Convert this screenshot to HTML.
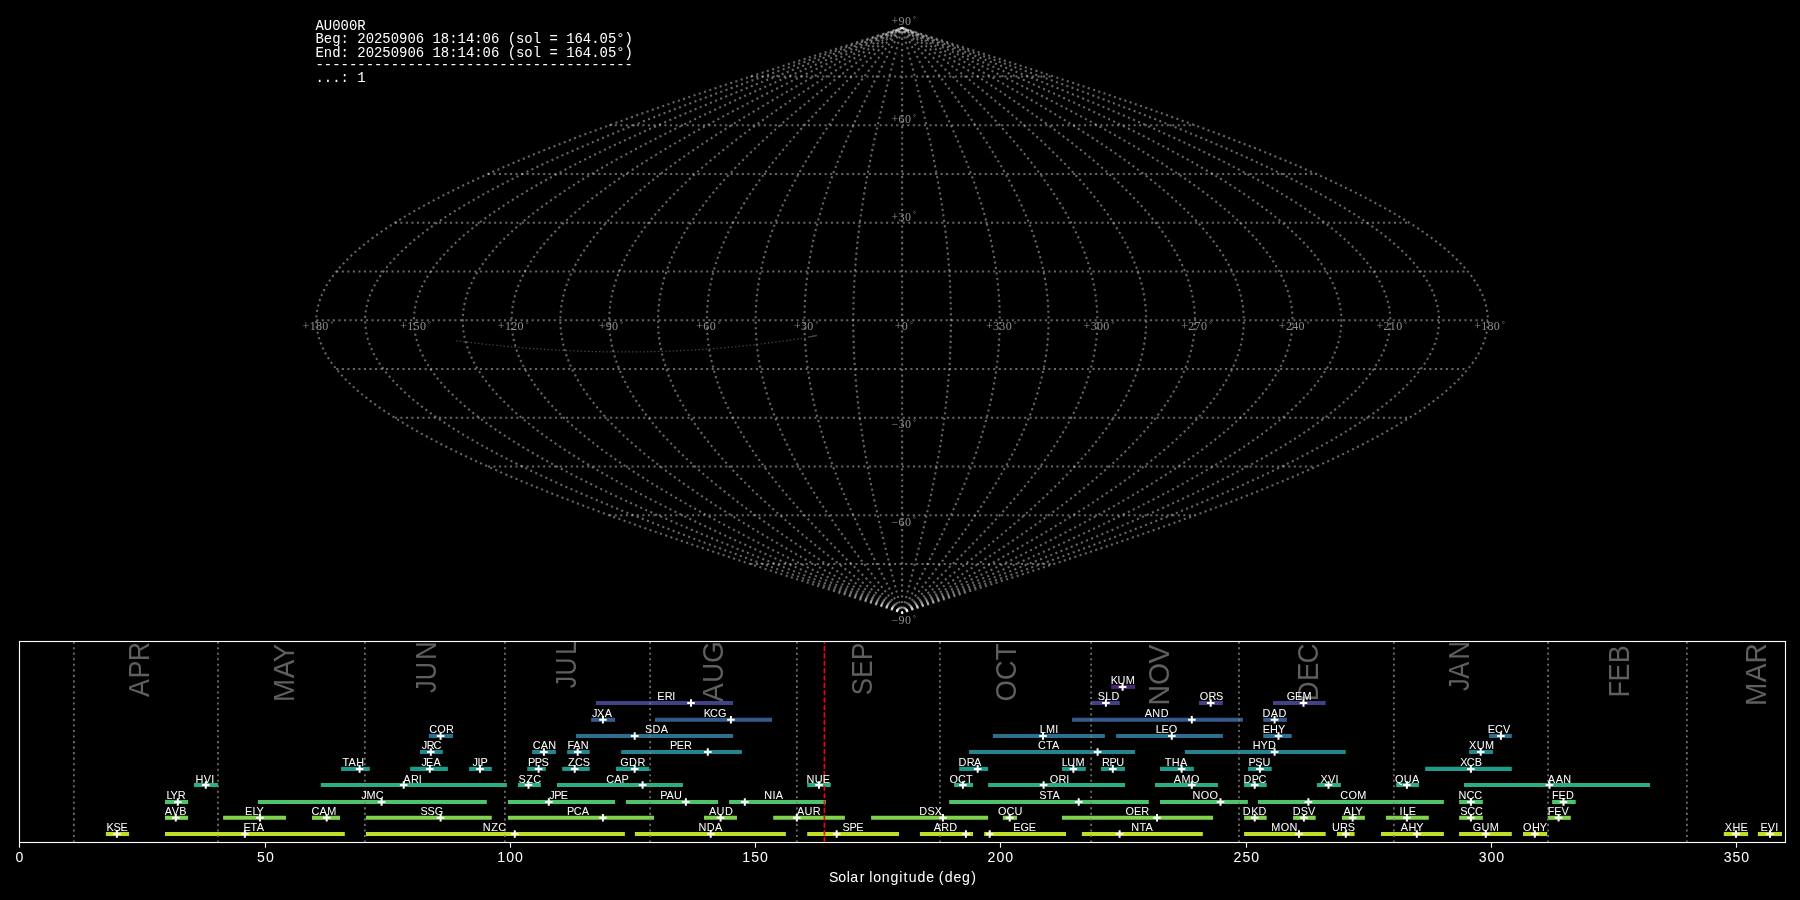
<!DOCTYPE html><html><head><meta charset="utf-8"><style>html,body{margin:0;padding:0;background:#000;overflow:hidden;}svg{display:block;will-change:transform;}</style></head><body>
<svg width="1800" height="900" viewBox="0 0 1800 900">
<rect x="0" y="0" width="1800" height="900" fill="#000"/>
<g fill="none" stroke="#ffffff" stroke-opacity="0.4" stroke-width="2.08" stroke-dasharray="2.08 3.44">
<path d="M902.10,612.80 L907.21,611.17 L912.32,609.55 L917.43,607.92 L922.54,606.30 L927.65,604.67 L932.76,603.05 L937.86,601.42 L942.96,599.80 L948.06,598.17 L953.15,596.55 L958.24,594.92 L963.33,593.30 L968.41,591.67 L973.49,590.05 L978.56,588.42 L983.62,586.80 L988.68,585.17 L993.73,583.55 L998.78,581.92 L1003.82,580.30 L1008.85,578.67 L1013.87,577.05 L1018.88,575.42 L1023.89,573.80 L1028.88,572.17 L1033.87,570.55 L1038.84,568.92 L1043.81,567.30 L1048.76,565.67 L1053.70,564.05 L1058.64,562.42 L1063.56,560.80 L1068.46,559.17 L1073.36,557.55 L1078.24,555.92 L1083.11,554.30 L1087.96,552.67 L1092.80,551.05 L1097.63,549.42 L1102.44,547.80 L1107.24,546.17 L1112.02,544.55 L1116.78,542.92 L1121.53,541.30 L1126.26,539.67 L1130.97,538.05 L1135.67,536.42 L1140.35,534.80 L1145.01,533.17 L1149.65,531.55 L1154.27,529.92 L1158.88,528.30 L1163.46,526.67 L1168.03,525.05 L1172.57,523.42 L1177.10,521.80 L1181.60,520.17 L1186.08,518.55 L1190.54,516.92 L1194.98,515.30 L1199.39,513.67 L1203.79,512.05 L1208.16,510.43 L1212.50,508.80 L1216.83,507.18 L1221.13,505.55 L1225.40,503.93 L1229.65,502.30 L1233.88,500.68 L1238.08,499.05 L1242.25,497.43 L1246.40,495.80 L1250.52,494.18 L1254.62,492.55 L1258.69,490.93 L1262.73,489.30 L1266.74,487.68 L1270.73,486.05 L1274.69,484.43 L1278.62,482.80 L1282.52,481.18 L1286.39,479.55 L1290.23,477.93 L1294.05,476.30 L1297.83,474.68 L1301.58,473.05 L1305.31,471.43 L1309.00,469.80 L1312.66,468.18 L1316.29,466.55 L1319.89,464.93 L1323.46,463.30 L1326.99,461.68 L1330.49,460.05 L1333.96,458.43 L1337.40,456.80 L1340.81,455.18 L1344.18,453.55 L1347.51,451.93 L1350.82,450.30 L1354.08,448.68 L1357.32,447.05 L1360.52,445.43 L1363.68,443.80 L1366.81,442.18 L1369.91,440.55 L1372.96,438.93 L1375.99,437.30 L1378.97,435.68 L1381.92,434.05 L1384.84,432.43 L1387.71,430.80 L1390.55,429.18 L1393.36,427.55 L1396.12,425.93 L1398.85,424.30 L1401.54,422.68 L1404.19,421.05 L1406.80,419.43 L1409.38,417.80 L1411.92,416.18 L1414.41,414.55 L1416.87,412.93 L1419.29,411.30 L1421.67,409.68 L1424.01,408.05 L1426.31,406.43 L1428.57,404.80 L1430.79,403.18 L1432.98,401.55 L1435.12,399.93 L1437.21,398.30 L1439.27,396.68 L1441.29,395.05 L1443.27,393.43 L1445.20,391.80 L1447.10,390.18 L1448.95,388.55 L1450.76,386.93 L1452.53,385.30 L1454.26,383.68 L1455.94,382.05 L1457.59,380.43 L1459.19,378.80 L1460.75,377.18 L1462.26,375.55 L1463.73,373.93 L1465.16,372.30 L1466.55,370.68 L1467.90,369.05 L1469.20,367.43 L1470.46,365.80 L1471.67,364.18 L1472.84,362.55 L1473.97,360.93 L1475.06,359.30 L1476.10,357.68 L1477.09,356.05 L1478.05,354.43 L1478.96,352.80 L1479.82,351.18 L1480.64,349.55 L1481.42,347.93 L1482.16,346.30 L1482.84,344.68 L1483.49,343.05 L1484.09,341.43 L1484.65,339.80 L1485.16,338.18 L1485.63,336.55 L1486.05,334.93 L1486.43,333.30 L1486.76,331.68 L1487.05,330.05 L1487.30,328.43 L1487.50,326.80 L1487.66,325.18 L1487.77,323.55 L1487.83,321.93 L1487.86,320.30 L1487.83,318.68 L1487.77,317.05 L1487.66,315.43 L1487.50,313.80 L1487.30,312.18 L1487.05,310.55 L1486.76,308.93 L1486.43,307.30 L1486.05,305.68 L1485.63,304.05 L1485.16,302.43 L1484.65,300.80 L1484.09,299.18 L1483.49,297.55 L1482.84,295.93 L1482.16,294.30 L1481.42,292.68 L1480.64,291.05 L1479.82,289.43 L1478.96,287.80 L1478.05,286.18 L1477.09,284.55 L1476.10,282.93 L1475.06,281.30 L1473.97,279.68 L1472.84,278.05 L1471.67,276.43 L1470.46,274.80 L1469.20,273.18 L1467.90,271.55 L1466.55,269.93 L1465.16,268.30 L1463.73,266.68 L1462.26,265.05 L1460.75,263.43 L1459.19,261.80 L1457.59,260.18 L1455.94,258.55 L1454.26,256.93 L1452.53,255.30 L1450.76,253.68 L1448.95,252.05 L1447.10,250.43 L1445.20,248.80 L1443.27,247.18 L1441.29,245.55 L1439.27,243.93 L1437.21,242.30 L1435.12,240.68 L1432.98,239.05 L1430.79,237.43 L1428.57,235.80 L1426.31,234.18 L1424.01,232.55 L1421.67,230.93 L1419.29,229.30 L1416.87,227.68 L1414.41,226.05 L1411.92,224.43 L1409.38,222.80 L1406.80,221.18 L1404.19,219.55 L1401.54,217.93 L1398.85,216.30 L1396.12,214.68 L1393.36,213.05 L1390.55,211.43 L1387.71,209.80 L1384.84,208.18 L1381.92,206.55 L1378.97,204.93 L1375.99,203.30 L1372.96,201.68 L1369.91,200.05 L1366.81,198.43 L1363.68,196.80 L1360.52,195.18 L1357.32,193.55 L1354.08,191.93 L1350.82,190.30 L1347.51,188.68 L1344.18,187.05 L1340.81,185.43 L1337.40,183.80 L1333.96,182.18 L1330.49,180.55 L1326.99,178.93 L1323.46,177.30 L1319.89,175.68 L1316.29,174.05 L1312.66,172.43 L1309.00,170.80 L1305.31,169.18 L1301.58,167.55 L1297.83,165.93 L1294.05,164.30 L1290.23,162.68 L1286.39,161.05 L1282.52,159.43 L1278.62,157.80 L1274.69,156.18 L1270.73,154.55 L1266.74,152.93 L1262.73,151.30 L1258.69,149.68 L1254.62,148.05 L1250.52,146.43 L1246.40,144.80 L1242.25,143.18 L1238.08,141.55 L1233.88,139.93 L1229.65,138.30 L1225.40,136.68 L1221.13,135.05 L1216.83,133.43 L1212.50,131.80 L1208.16,130.18 L1203.79,128.55 L1199.39,126.93 L1194.98,125.30 L1190.54,123.68 L1186.08,122.05 L1181.60,120.43 L1177.10,118.80 L1172.57,117.18 L1168.03,115.55 L1163.46,113.93 L1158.88,112.30 L1154.27,110.68 L1149.65,109.05 L1145.01,107.43 L1140.35,105.80 L1135.67,104.18 L1130.97,102.55 L1126.26,100.93 L1121.53,99.30 L1116.78,97.68 L1112.02,96.05 L1107.24,94.43 L1102.44,92.80 L1097.63,91.18 L1092.80,89.55 L1087.96,87.93 L1083.11,86.30 L1078.24,84.68 L1073.36,83.05 L1068.46,81.43 L1063.56,79.80 L1058.64,78.18 L1053.70,76.55 L1048.76,74.93 L1043.81,73.30 L1038.84,71.68 L1033.87,70.05 L1028.88,68.43 L1023.89,66.80 L1018.88,65.18 L1013.87,63.55 L1008.85,61.93 L1003.82,60.30 L998.78,58.68 L993.73,57.05 L988.68,55.43 L983.62,53.80 L978.56,52.18 L973.49,50.55 L968.41,48.93 L963.33,47.30 L958.24,45.68 L953.15,44.05 L948.06,42.43 L942.96,40.80 L937.86,39.18 L932.76,37.55 L927.65,35.93 L922.54,34.30 L917.43,32.68 L912.32,31.05 L907.21,29.43 L902.10,27.80" stroke-dashoffset="1.2"/>
<path d="M902.10,612.80 L906.79,611.17 L911.47,609.55 L916.16,607.92 L920.84,606.30 L925.52,604.67 L930.20,603.05 L934.88,601.42 L939.56,599.80 L944.23,598.17 L948.90,596.55 L953.56,594.92 L958.23,593.30 L962.88,591.67 L967.54,590.05 L972.19,588.42 L976.83,586.80 L981.47,585.17 L986.10,583.55 L990.72,581.92 L995.34,580.30 L999.95,578.67 L1004.55,577.05 L1009.15,575.42 L1013.74,573.80 L1018.32,572.17 L1022.89,570.55 L1027.45,568.92 L1032.00,567.30 L1036.54,565.67 L1041.07,564.05 L1045.59,562.42 L1050.10,560.80 L1054.60,559.17 L1059.09,557.55 L1063.56,555.92 L1068.02,554.30 L1072.47,552.67 L1076.91,551.05 L1081.34,549.42 L1085.75,547.80 L1090.14,546.17 L1094.52,544.55 L1098.89,542.92 L1103.24,541.30 L1107.58,539.67 L1111.90,538.05 L1116.21,536.42 L1120.49,534.80 L1124.77,533.17 L1129.02,531.55 L1133.26,529.92 L1137.48,528.30 L1141.68,526.67 L1145.87,525.05 L1150.03,523.42 L1154.18,521.80 L1158.31,520.17 L1162.42,518.55 L1166.50,516.92 L1170.57,515.30 L1174.62,513.67 L1178.65,512.05 L1182.65,510.43 L1186.64,508.80 L1190.60,507.18 L1194.54,505.55 L1198.46,503.93 L1202.35,502.30 L1206.23,500.68 L1210.08,499.05 L1213.90,497.43 L1217.71,495.80 L1221.49,494.18 L1225.24,492.55 L1228.97,490.93 L1232.68,489.30 L1236.35,487.68 L1240.01,486.05 L1243.64,484.43 L1247.24,482.80 L1250.82,481.18 L1254.37,479.55 L1257.89,477.93 L1261.38,476.30 L1264.85,474.68 L1268.29,473.05 L1271.71,471.43 L1275.09,469.80 L1278.45,468.18 L1281.78,466.55 L1285.07,464.93 L1288.34,463.30 L1291.58,461.68 L1294.80,460.05 L1297.98,458.43 L1301.13,456.80 L1304.25,455.18 L1307.34,453.55 L1310.39,451.93 L1313.42,450.30 L1316.42,448.68 L1319.38,447.05 L1322.32,445.43 L1325.22,443.80 L1328.09,442.18 L1330.92,440.55 L1333.73,438.93 L1336.50,437.30 L1339.23,435.68 L1341.94,434.05 L1344.61,432.43 L1347.25,430.80 L1349.85,429.18 L1352.42,427.55 L1354.95,425.93 L1357.45,424.30 L1359.92,422.68 L1362.35,421.05 L1364.75,419.43 L1367.11,417.80 L1369.43,416.18 L1371.72,414.55 L1373.97,412.93 L1376.19,411.30 L1378.37,409.68 L1380.52,408.05 L1382.63,406.43 L1384.70,404.80 L1386.74,403.18 L1388.74,401.55 L1390.70,399.93 L1392.62,398.30 L1394.51,396.68 L1396.36,395.05 L1398.17,393.43 L1399.94,391.80 L1401.68,390.18 L1403.38,388.55 L1405.04,386.93 L1406.66,385.30 L1408.24,383.68 L1409.79,382.05 L1411.30,380.43 L1412.76,378.80 L1414.19,377.18 L1415.58,375.55 L1416.93,373.93 L1418.24,372.30 L1419.51,370.68 L1420.75,369.05 L1421.94,367.43 L1423.09,365.80 L1424.21,364.18 L1425.28,362.55 L1426.32,360.93 L1427.31,359.30 L1428.26,357.68 L1429.18,356.05 L1430.05,354.43 L1430.89,352.80 L1431.68,351.18 L1432.43,349.55 L1433.15,347.93 L1433.82,346.30 L1434.45,344.68 L1435.04,343.05 L1435.59,341.43 L1436.10,339.80 L1436.57,338.18 L1437.00,336.55 L1437.39,334.93 L1437.74,333.30 L1438.04,331.68 L1438.31,330.05 L1438.53,328.43 L1438.72,326.80 L1438.86,325.18 L1438.96,323.55 L1439.02,321.93 L1439.04,320.30 L1439.02,318.68 L1438.96,317.05 L1438.86,315.43 L1438.72,313.80 L1438.53,312.18 L1438.31,310.55 L1438.04,308.93 L1437.74,307.30 L1437.39,305.68 L1437.00,304.05 L1436.57,302.43 L1436.10,300.80 L1435.59,299.18 L1435.04,297.55 L1434.45,295.93 L1433.82,294.30 L1433.15,292.68 L1432.43,291.05 L1431.68,289.43 L1430.89,287.80 L1430.05,286.18 L1429.18,284.55 L1428.26,282.93 L1427.31,281.30 L1426.32,279.68 L1425.28,278.05 L1424.21,276.43 L1423.09,274.80 L1421.94,273.18 L1420.75,271.55 L1419.51,269.93 L1418.24,268.30 L1416.93,266.68 L1415.58,265.05 L1414.19,263.43 L1412.76,261.80 L1411.30,260.18 L1409.79,258.55 L1408.24,256.93 L1406.66,255.30 L1405.04,253.68 L1403.38,252.05 L1401.68,250.43 L1399.94,248.80 L1398.17,247.18 L1396.36,245.55 L1394.51,243.93 L1392.62,242.30 L1390.70,240.68 L1388.74,239.05 L1386.74,237.43 L1384.70,235.80 L1382.63,234.18 L1380.52,232.55 L1378.37,230.93 L1376.19,229.30 L1373.97,227.68 L1371.72,226.05 L1369.43,224.43 L1367.11,222.80 L1364.75,221.18 L1362.35,219.55 L1359.92,217.93 L1357.45,216.30 L1354.95,214.68 L1352.42,213.05 L1349.85,211.43 L1347.25,209.80 L1344.61,208.18 L1341.94,206.55 L1339.23,204.93 L1336.50,203.30 L1333.73,201.68 L1330.92,200.05 L1328.09,198.43 L1325.22,196.80 L1322.32,195.18 L1319.38,193.55 L1316.42,191.93 L1313.42,190.30 L1310.39,188.68 L1307.34,187.05 L1304.25,185.43 L1301.13,183.80 L1297.98,182.18 L1294.80,180.55 L1291.58,178.93 L1288.34,177.30 L1285.07,175.68 L1281.78,174.05 L1278.45,172.43 L1275.09,170.80 L1271.71,169.18 L1268.29,167.55 L1264.85,165.93 L1261.38,164.30 L1257.89,162.68 L1254.37,161.05 L1250.82,159.43 L1247.24,157.80 L1243.64,156.18 L1240.01,154.55 L1236.35,152.93 L1232.68,151.30 L1228.97,149.68 L1225.24,148.05 L1221.49,146.43 L1217.71,144.80 L1213.90,143.18 L1210.08,141.55 L1206.23,139.93 L1202.35,138.30 L1198.46,136.68 L1194.54,135.05 L1190.60,133.43 L1186.64,131.80 L1182.65,130.18 L1178.65,128.55 L1174.62,126.93 L1170.57,125.30 L1166.50,123.68 L1162.42,122.05 L1158.31,120.43 L1154.18,118.80 L1150.03,117.18 L1145.87,115.55 L1141.68,113.93 L1137.48,112.30 L1133.26,110.68 L1129.02,109.05 L1124.77,107.43 L1120.49,105.80 L1116.21,104.18 L1111.90,102.55 L1107.58,100.93 L1103.24,99.30 L1098.89,97.68 L1094.52,96.05 L1090.14,94.43 L1085.75,92.80 L1081.34,91.18 L1076.91,89.55 L1072.47,87.93 L1068.02,86.30 L1063.56,84.68 L1059.09,83.05 L1054.60,81.43 L1050.10,79.80 L1045.59,78.18 L1041.07,76.55 L1036.54,74.93 L1032.00,73.30 L1027.45,71.68 L1022.89,70.05 L1018.32,68.43 L1013.74,66.80 L1009.15,65.18 L1004.55,63.55 L999.95,61.93 L995.34,60.30 L990.72,58.68 L986.10,57.05 L981.47,55.43 L976.83,53.80 L972.19,52.18 L967.54,50.55 L962.88,48.93 L958.23,47.30 L953.56,45.68 L948.90,44.05 L944.23,42.43 L939.56,40.80 L934.88,39.18 L930.20,37.55 L925.52,35.93 L920.84,34.30 L916.16,32.68 L911.47,31.05 L906.79,29.43 L902.10,27.80" stroke-dashoffset="1.2"/>
<path d="M902.10,612.80 L906.36,611.17 L910.62,609.55 L914.88,607.92 L919.14,606.30 L923.39,604.67 L927.65,603.05 L931.90,601.42 L936.15,599.80 L940.40,598.17 L944.64,596.55 L948.89,594.92 L953.12,593.30 L957.36,591.67 L961.59,590.05 L965.81,588.42 L970.03,586.80 L974.25,585.17 L978.46,583.55 L982.66,581.92 L986.86,580.30 L991.05,578.67 L995.24,577.05 L999.42,575.42 L1003.59,573.80 L1007.75,572.17 L1011.91,570.55 L1016.05,568.92 L1020.19,567.30 L1024.32,565.67 L1028.44,564.05 L1032.55,562.42 L1036.65,560.80 L1040.74,559.17 L1044.82,557.55 L1048.88,555.92 L1052.94,554.30 L1056.99,552.67 L1061.02,551.05 L1065.04,549.42 L1069.05,547.80 L1073.05,546.17 L1077.03,544.55 L1081.00,542.92 L1084.96,541.30 L1088.90,539.67 L1092.83,538.05 L1096.74,536.42 L1100.64,534.80 L1104.52,533.17 L1108.39,531.55 L1112.25,529.92 L1116.08,528.30 L1119.90,526.67 L1123.71,525.05 L1127.49,523.42 L1131.26,521.80 L1135.02,520.17 L1138.75,518.55 L1142.47,516.92 L1146.16,515.30 L1149.84,513.67 L1153.51,512.05 L1157.15,510.43 L1160.77,508.80 L1164.37,507.18 L1167.95,505.55 L1171.52,503.93 L1175.06,502.30 L1178.58,500.68 L1182.08,499.05 L1185.56,497.43 L1189.02,495.80 L1192.45,494.18 L1195.86,492.55 L1199.25,490.93 L1202.62,489.30 L1205.97,487.68 L1209.29,486.05 L1212.59,484.43 L1215.86,482.80 L1219.12,481.18 L1222.34,479.55 L1225.54,477.93 L1228.72,476.30 L1231.88,474.68 L1235.00,473.05 L1238.11,471.43 L1241.18,469.80 L1244.23,468.18 L1247.26,466.55 L1250.26,464.93 L1253.23,463.30 L1256.18,461.68 L1259.10,460.05 L1261.99,458.43 L1264.85,456.80 L1267.69,455.18 L1270.50,453.55 L1273.28,451.93 L1276.03,450.30 L1278.75,448.68 L1281.45,447.05 L1284.11,445.43 L1286.75,443.80 L1289.36,442.18 L1291.94,440.55 L1294.49,438.93 L1297.01,437.30 L1299.49,435.68 L1301.95,434.05 L1304.38,432.43 L1306.78,430.80 L1309.14,429.18 L1311.48,427.55 L1313.78,425.93 L1316.06,424.30 L1318.30,422.68 L1320.51,421.05 L1322.69,419.43 L1324.83,417.80 L1326.95,416.18 L1329.03,414.55 L1331.08,412.93 L1333.09,411.30 L1335.08,409.68 L1337.03,408.05 L1338.94,406.43 L1340.83,404.80 L1342.68,403.18 L1344.50,401.55 L1346.28,399.93 L1348.03,398.30 L1349.74,396.68 L1351.43,395.05 L1353.07,393.43 L1354.69,391.80 L1356.26,390.18 L1357.81,388.55 L1359.32,386.93 L1360.79,385.30 L1362.23,383.68 L1363.64,382.05 L1365.01,380.43 L1366.34,378.80 L1367.64,377.18 L1368.90,375.55 L1370.13,373.93 L1371.32,372.30 L1372.48,370.68 L1373.60,369.05 L1374.68,367.43 L1375.73,365.80 L1376.74,364.18 L1377.72,362.55 L1378.66,360.93 L1379.56,359.30 L1380.43,357.68 L1381.26,356.05 L1382.06,354.43 L1382.81,352.80 L1383.54,351.18 L1384.22,349.55 L1384.87,347.93 L1385.48,346.30 L1386.05,344.68 L1386.59,343.05 L1387.09,341.43 L1387.56,339.80 L1387.98,338.18 L1388.37,336.55 L1388.73,334.93 L1389.04,333.30 L1389.32,331.68 L1389.56,330.05 L1389.77,328.43 L1389.93,326.80 L1390.06,325.18 L1390.16,323.55 L1390.21,321.93 L1390.23,320.30 L1390.21,318.68 L1390.16,317.05 L1390.06,315.43 L1389.93,313.80 L1389.77,312.18 L1389.56,310.55 L1389.32,308.93 L1389.04,307.30 L1388.73,305.68 L1388.37,304.05 L1387.98,302.43 L1387.56,300.80 L1387.09,299.18 L1386.59,297.55 L1386.05,295.93 L1385.48,294.30 L1384.87,292.68 L1384.22,291.05 L1383.54,289.43 L1382.81,287.80 L1382.06,286.18 L1381.26,284.55 L1380.43,282.93 L1379.56,281.30 L1378.66,279.68 L1377.72,278.05 L1376.74,276.43 L1375.73,274.80 L1374.68,273.18 L1373.60,271.55 L1372.48,269.93 L1371.32,268.30 L1370.13,266.68 L1368.90,265.05 L1367.64,263.43 L1366.34,261.80 L1365.01,260.18 L1363.64,258.55 L1362.23,256.93 L1360.79,255.30 L1359.32,253.68 L1357.81,252.05 L1356.26,250.43 L1354.69,248.80 L1353.07,247.18 L1351.43,245.55 L1349.74,243.93 L1348.03,242.30 L1346.28,240.68 L1344.50,239.05 L1342.68,237.43 L1340.83,235.80 L1338.94,234.18 L1337.03,232.55 L1335.08,230.93 L1333.09,229.30 L1331.08,227.68 L1329.03,226.05 L1326.95,224.43 L1324.83,222.80 L1322.69,221.18 L1320.51,219.55 L1318.30,217.93 L1316.06,216.30 L1313.78,214.68 L1311.48,213.05 L1309.14,211.43 L1306.78,209.80 L1304.38,208.18 L1301.95,206.55 L1299.49,204.93 L1297.01,203.30 L1294.49,201.68 L1291.94,200.05 L1289.36,198.43 L1286.75,196.80 L1284.11,195.18 L1281.45,193.55 L1278.75,191.93 L1276.03,190.30 L1273.28,188.68 L1270.50,187.05 L1267.69,185.43 L1264.85,183.80 L1261.99,182.18 L1259.10,180.55 L1256.18,178.93 L1253.23,177.30 L1250.26,175.68 L1247.26,174.05 L1244.23,172.43 L1241.18,170.80 L1238.11,169.18 L1235.00,167.55 L1231.88,165.93 L1228.72,164.30 L1225.54,162.68 L1222.34,161.05 L1219.12,159.43 L1215.86,157.80 L1212.59,156.18 L1209.29,154.55 L1205.97,152.93 L1202.62,151.30 L1199.25,149.68 L1195.86,148.05 L1192.45,146.43 L1189.02,144.80 L1185.56,143.18 L1182.08,141.55 L1178.58,139.93 L1175.06,138.30 L1171.52,136.68 L1167.95,135.05 L1164.37,133.43 L1160.77,131.80 L1157.15,130.18 L1153.51,128.55 L1149.84,126.93 L1146.16,125.30 L1142.47,123.68 L1138.75,122.05 L1135.02,120.43 L1131.26,118.80 L1127.49,117.18 L1123.71,115.55 L1119.90,113.93 L1116.08,112.30 L1112.25,110.68 L1108.39,109.05 L1104.52,107.43 L1100.64,105.80 L1096.74,104.18 L1092.83,102.55 L1088.90,100.93 L1084.96,99.30 L1081.00,97.68 L1077.03,96.05 L1073.05,94.43 L1069.05,92.80 L1065.04,91.18 L1061.02,89.55 L1056.99,87.93 L1052.94,86.30 L1048.88,84.68 L1044.82,83.05 L1040.74,81.43 L1036.65,79.80 L1032.55,78.18 L1028.44,76.55 L1024.32,74.93 L1020.19,73.30 L1016.05,71.68 L1011.91,70.05 L1007.75,68.43 L1003.59,66.80 L999.42,65.18 L995.24,63.55 L991.05,61.93 L986.86,60.30 L982.66,58.68 L978.46,57.05 L974.25,55.43 L970.03,53.80 L965.81,52.18 L961.59,50.55 L957.36,48.93 L953.12,47.30 L948.89,45.68 L944.64,44.05 L940.40,42.43 L936.15,40.80 L931.90,39.18 L927.65,37.55 L923.39,35.93 L919.14,34.30 L914.88,32.68 L910.62,31.05 L906.36,29.43 L902.10,27.80" stroke-dashoffset="1.2"/>
<path d="M902.10,612.80 L905.93,611.17 L909.77,609.55 L913.60,607.92 L917.43,606.30 L921.26,604.67 L925.09,603.05 L928.92,601.42 L932.75,599.80 L936.57,598.17 L940.39,596.55 L944.21,594.92 L948.02,593.30 L951.83,591.67 L955.64,590.05 L959.44,588.42 L963.24,586.80 L967.04,585.17 L970.82,583.55 L974.61,581.92 L978.39,580.30 L982.16,578.67 L985.93,577.05 L989.69,575.42 L993.44,573.80 L997.19,572.17 L1000.92,570.55 L1004.66,568.92 L1008.38,567.30 L1012.10,565.67 L1015.80,564.05 L1019.50,562.42 L1023.19,560.80 L1026.87,559.17 L1030.54,557.55 L1034.21,555.92 L1037.86,554.30 L1041.50,552.67 L1045.13,551.05 L1048.75,549.42 L1052.36,547.80 L1055.95,546.17 L1059.54,544.55 L1063.11,542.92 L1066.67,541.30 L1070.22,539.67 L1073.75,538.05 L1077.28,536.42 L1080.79,534.80 L1084.28,533.17 L1087.76,531.55 L1091.23,529.92 L1094.68,528.30 L1098.12,526.67 L1101.55,525.05 L1104.95,523.42 L1108.35,521.80 L1111.72,520.17 L1115.09,518.55 L1118.43,516.92 L1121.76,515.30 L1125.07,513.67 L1128.36,512.05 L1131.64,510.43 L1134.90,508.80 L1138.14,507.18 L1141.37,505.55 L1144.58,503.93 L1147.76,502.30 L1150.93,500.68 L1154.08,499.05 L1157.21,497.43 L1160.32,495.80 L1163.42,494.18 L1166.49,492.55 L1169.54,490.93 L1172.57,489.30 L1175.58,487.68 L1178.57,486.05 L1181.54,484.43 L1184.49,482.80 L1187.41,481.18 L1190.32,479.55 L1193.20,477.93 L1196.06,476.30 L1198.90,474.68 L1201.71,473.05 L1204.51,471.43 L1207.28,469.80 L1210.02,468.18 L1212.74,466.55 L1215.44,464.93 L1218.12,463.30 L1220.77,461.68 L1223.40,460.05 L1226.00,458.43 L1228.58,456.80 L1231.13,455.18 L1233.66,453.55 L1236.16,451.93 L1238.64,450.30 L1241.09,448.68 L1243.51,447.05 L1245.91,445.43 L1248.29,443.80 L1250.63,442.18 L1252.95,440.55 L1255.25,438.93 L1257.51,437.30 L1259.75,435.68 L1261.97,434.05 L1264.15,432.43 L1266.31,430.80 L1268.44,429.18 L1270.54,427.55 L1272.62,425.93 L1274.66,424.30 L1276.68,422.68 L1278.67,421.05 L1280.63,419.43 L1282.56,417.80 L1284.46,416.18 L1286.34,414.55 L1288.18,412.93 L1289.99,411.30 L1291.78,409.68 L1293.53,408.05 L1295.26,406.43 L1296.96,404.80 L1298.62,403.18 L1300.26,401.55 L1301.86,399.93 L1303.44,398.30 L1304.98,396.68 L1306.49,395.05 L1307.98,393.43 L1309.43,391.80 L1310.85,390.18 L1312.24,388.55 L1313.60,386.93 L1314.92,385.30 L1316.22,383.68 L1317.48,382.05 L1318.71,380.43 L1319.92,378.80 L1321.08,377.18 L1322.22,375.55 L1323.33,373.93 L1324.40,372.30 L1325.44,370.68 L1326.45,369.05 L1327.42,367.43 L1328.37,365.80 L1329.28,364.18 L1330.16,362.55 L1331.00,360.93 L1331.82,359.30 L1332.60,357.68 L1333.35,356.05 L1334.06,354.43 L1334.74,352.80 L1335.39,351.18 L1336.01,349.55 L1336.59,347.93 L1337.14,346.30 L1337.66,344.68 L1338.14,343.05 L1338.59,341.43 L1339.01,339.80 L1339.39,338.18 L1339.75,336.55 L1340.06,334.93 L1340.35,333.30 L1340.60,331.68 L1340.81,330.05 L1341.00,328.43 L1341.15,326.80 L1341.27,325.18 L1341.35,323.55 L1341.40,321.93 L1341.42,320.30 L1341.40,318.68 L1341.35,317.05 L1341.27,315.43 L1341.15,313.80 L1341.00,312.18 L1340.81,310.55 L1340.60,308.93 L1340.35,307.30 L1340.06,305.68 L1339.75,304.05 L1339.39,302.43 L1339.01,300.80 L1338.59,299.18 L1338.14,297.55 L1337.66,295.93 L1337.14,294.30 L1336.59,292.68 L1336.01,291.05 L1335.39,289.43 L1334.74,287.80 L1334.06,286.18 L1333.35,284.55 L1332.60,282.93 L1331.82,281.30 L1331.00,279.68 L1330.16,278.05 L1329.28,276.43 L1328.37,274.80 L1327.42,273.18 L1326.45,271.55 L1325.44,269.93 L1324.40,268.30 L1323.33,266.68 L1322.22,265.05 L1321.08,263.43 L1319.92,261.80 L1318.71,260.18 L1317.48,258.55 L1316.22,256.93 L1314.92,255.30 L1313.60,253.68 L1312.24,252.05 L1310.85,250.43 L1309.43,248.80 L1307.98,247.18 L1306.49,245.55 L1304.98,243.93 L1303.44,242.30 L1301.86,240.68 L1300.26,239.05 L1298.62,237.43 L1296.96,235.80 L1295.26,234.18 L1293.53,232.55 L1291.78,230.93 L1289.99,229.30 L1288.18,227.68 L1286.34,226.05 L1284.46,224.43 L1282.56,222.80 L1280.63,221.18 L1278.67,219.55 L1276.68,217.93 L1274.66,216.30 L1272.62,214.68 L1270.54,213.05 L1268.44,211.43 L1266.31,209.80 L1264.15,208.18 L1261.97,206.55 L1259.75,204.93 L1257.51,203.30 L1255.25,201.68 L1252.95,200.05 L1250.63,198.43 L1248.29,196.80 L1245.91,195.18 L1243.51,193.55 L1241.09,191.93 L1238.64,190.30 L1236.16,188.68 L1233.66,187.05 L1231.13,185.43 L1228.58,183.80 L1226.00,182.18 L1223.40,180.55 L1220.77,178.93 L1218.12,177.30 L1215.44,175.68 L1212.74,174.05 L1210.02,172.43 L1207.28,170.80 L1204.51,169.18 L1201.71,167.55 L1198.90,165.93 L1196.06,164.30 L1193.20,162.68 L1190.32,161.05 L1187.41,159.43 L1184.49,157.80 L1181.54,156.18 L1178.57,154.55 L1175.58,152.93 L1172.57,151.30 L1169.54,149.68 L1166.49,148.05 L1163.42,146.43 L1160.32,144.80 L1157.21,143.18 L1154.08,141.55 L1150.93,139.93 L1147.76,138.30 L1144.58,136.68 L1141.37,135.05 L1138.14,133.43 L1134.90,131.80 L1131.64,130.18 L1128.36,128.55 L1125.07,126.93 L1121.76,125.30 L1118.43,123.68 L1115.09,122.05 L1111.72,120.43 L1108.35,118.80 L1104.95,117.18 L1101.55,115.55 L1098.12,113.93 L1094.68,112.30 L1091.23,110.68 L1087.76,109.05 L1084.28,107.43 L1080.79,105.80 L1077.28,104.18 L1073.75,102.55 L1070.22,100.93 L1066.67,99.30 L1063.11,97.68 L1059.54,96.05 L1055.95,94.43 L1052.36,92.80 L1048.75,91.18 L1045.13,89.55 L1041.50,87.93 L1037.86,86.30 L1034.21,84.68 L1030.54,83.05 L1026.87,81.43 L1023.19,79.80 L1019.50,78.18 L1015.80,76.55 L1012.10,74.93 L1008.38,73.30 L1004.66,71.68 L1000.92,70.05 L997.19,68.43 L993.44,66.80 L989.69,65.18 L985.93,63.55 L982.16,61.93 L978.39,60.30 L974.61,58.68 L970.82,57.05 L967.04,55.43 L963.24,53.80 L959.44,52.18 L955.64,50.55 L951.83,48.93 L948.02,47.30 L944.21,45.68 L940.39,44.05 L936.57,42.43 L932.75,40.80 L928.92,39.18 L925.09,37.55 L921.26,35.93 L917.43,34.30 L913.60,32.68 L909.77,31.05 L905.93,29.43 L902.10,27.80" stroke-dashoffset="1.2"/>
<path d="M902.10,612.80 L905.51,611.17 L908.92,609.55 L912.32,607.92 L915.73,606.30 L919.13,604.67 L922.54,603.05 L925.94,601.42 L929.34,599.80 L932.74,598.17 L936.13,596.55 L939.53,594.92 L942.92,593.30 L946.31,591.67 L949.69,590.05 L953.07,588.42 L956.45,586.80 L959.82,585.17 L963.19,583.55 L966.55,581.92 L969.91,580.30 L973.26,578.67 L976.61,577.05 L979.95,575.42 L983.29,573.80 L986.62,572.17 L989.94,570.55 L993.26,568.92 L996.57,567.30 L999.87,565.67 L1003.17,564.05 L1006.46,562.42 L1009.74,560.80 L1013.01,559.17 L1016.27,557.55 L1019.53,555.92 L1022.77,554.30 L1026.01,552.67 L1029.24,551.05 L1032.45,549.42 L1035.66,547.80 L1038.86,546.17 L1042.04,544.55 L1045.22,542.92 L1048.39,541.30 L1051.54,539.67 L1054.68,538.05 L1057.81,536.42 L1060.93,534.80 L1064.04,533.17 L1067.13,531.55 L1070.22,529.92 L1073.29,528.30 L1076.34,526.67 L1079.39,525.05 L1082.41,523.42 L1085.43,521.80 L1088.43,520.17 L1091.42,518.55 L1094.39,516.92 L1097.35,515.30 L1100.30,513.67 L1103.22,512.05 L1106.14,510.43 L1109.04,508.80 L1111.92,507.18 L1114.78,505.55 L1117.63,503.93 L1120.47,502.30 L1123.28,500.68 L1126.08,499.05 L1128.87,497.43 L1131.63,495.80 L1134.38,494.18 L1137.11,492.55 L1139.82,490.93 L1142.52,489.30 L1145.19,487.68 L1147.85,486.05 L1150.49,484.43 L1153.11,482.80 L1155.71,481.18 L1158.29,479.55 L1160.86,477.93 L1163.40,476.30 L1165.92,474.68 L1168.42,473.05 L1170.91,471.43 L1173.37,469.80 L1175.81,468.18 L1178.23,466.55 L1180.63,464.93 L1183.01,463.30 L1185.36,461.68 L1187.70,460.05 L1190.01,458.43 L1192.30,456.80 L1194.57,455.18 L1196.82,453.55 L1199.04,451.93 L1201.24,450.30 L1203.42,448.68 L1205.58,447.05 L1207.71,445.43 L1209.82,443.80 L1211.91,442.18 L1213.97,440.55 L1216.01,438.93 L1218.02,437.30 L1220.02,435.68 L1221.98,434.05 L1223.92,432.43 L1225.84,430.80 L1227.74,429.18 L1229.60,427.55 L1231.45,425.93 L1233.27,424.30 L1235.06,422.68 L1236.83,421.05 L1238.57,419.43 L1240.29,417.80 L1241.98,416.18 L1243.64,414.55 L1245.28,412.93 L1246.89,411.30 L1248.48,409.68 L1250.04,408.05 L1251.58,406.43 L1253.08,404.80 L1254.56,403.18 L1256.02,401.55 L1257.44,399.93 L1258.84,398.30 L1260.22,396.68 L1261.56,395.05 L1262.88,393.43 L1264.17,391.80 L1265.43,390.18 L1266.67,388.55 L1267.87,386.93 L1269.05,385.30 L1270.21,383.68 L1271.33,382.05 L1272.42,380.43 L1273.49,378.80 L1274.53,377.18 L1275.54,375.55 L1276.52,373.93 L1277.48,372.30 L1278.40,370.68 L1279.30,369.05 L1280.17,367.43 L1281.00,365.80 L1281.81,364.18 L1282.60,362.55 L1283.35,360.93 L1284.07,359.30 L1284.76,357.68 L1285.43,356.05 L1286.06,354.43 L1286.67,352.80 L1287.25,351.18 L1287.80,349.55 L1288.31,347.93 L1288.80,346.30 L1289.26,344.68 L1289.69,343.05 L1290.09,341.43 L1290.46,339.80 L1290.81,338.18 L1291.12,336.55 L1291.40,334.93 L1291.65,333.30 L1291.88,331.68 L1292.07,330.05 L1292.23,328.43 L1292.37,326.80 L1292.47,325.18 L1292.54,323.55 L1292.59,321.93 L1292.60,320.30 L1292.59,318.68 L1292.54,317.05 L1292.47,315.43 L1292.37,313.80 L1292.23,312.18 L1292.07,310.55 L1291.88,308.93 L1291.65,307.30 L1291.40,305.68 L1291.12,304.05 L1290.81,302.43 L1290.46,300.80 L1290.09,299.18 L1289.69,297.55 L1289.26,295.93 L1288.80,294.30 L1288.31,292.68 L1287.80,291.05 L1287.25,289.43 L1286.67,287.80 L1286.06,286.18 L1285.43,284.55 L1284.76,282.93 L1284.07,281.30 L1283.35,279.68 L1282.60,278.05 L1281.81,276.43 L1281.00,274.80 L1280.17,273.18 L1279.30,271.55 L1278.40,269.93 L1277.48,268.30 L1276.52,266.68 L1275.54,265.05 L1274.53,263.43 L1273.49,261.80 L1272.42,260.18 L1271.33,258.55 L1270.21,256.93 L1269.05,255.30 L1267.87,253.68 L1266.67,252.05 L1265.43,250.43 L1264.17,248.80 L1262.88,247.18 L1261.56,245.55 L1260.22,243.93 L1258.84,242.30 L1257.44,240.68 L1256.02,239.05 L1254.56,237.43 L1253.08,235.80 L1251.58,234.18 L1250.04,232.55 L1248.48,230.93 L1246.89,229.30 L1245.28,227.68 L1243.64,226.05 L1241.98,224.43 L1240.29,222.80 L1238.57,221.18 L1236.83,219.55 L1235.06,217.93 L1233.27,216.30 L1231.45,214.68 L1229.60,213.05 L1227.74,211.43 L1225.84,209.80 L1223.92,208.18 L1221.98,206.55 L1220.02,204.93 L1218.02,203.30 L1216.01,201.68 L1213.97,200.05 L1211.91,198.43 L1209.82,196.80 L1207.71,195.18 L1205.58,193.55 L1203.42,191.93 L1201.24,190.30 L1199.04,188.68 L1196.82,187.05 L1194.57,185.43 L1192.30,183.80 L1190.01,182.18 L1187.70,180.55 L1185.36,178.93 L1183.01,177.30 L1180.63,175.68 L1178.23,174.05 L1175.81,172.43 L1173.37,170.80 L1170.91,169.18 L1168.42,167.55 L1165.92,165.93 L1163.40,164.30 L1160.86,162.68 L1158.29,161.05 L1155.71,159.43 L1153.11,157.80 L1150.49,156.18 L1147.85,154.55 L1145.19,152.93 L1142.52,151.30 L1139.82,149.68 L1137.11,148.05 L1134.38,146.43 L1131.63,144.80 L1128.87,143.18 L1126.08,141.55 L1123.28,139.93 L1120.47,138.30 L1117.63,136.68 L1114.78,135.05 L1111.92,133.43 L1109.04,131.80 L1106.14,130.18 L1103.22,128.55 L1100.30,126.93 L1097.35,125.30 L1094.39,123.68 L1091.42,122.05 L1088.43,120.43 L1085.43,118.80 L1082.41,117.18 L1079.39,115.55 L1076.34,113.93 L1073.29,112.30 L1070.22,110.68 L1067.13,109.05 L1064.04,107.43 L1060.93,105.80 L1057.81,104.18 L1054.68,102.55 L1051.54,100.93 L1048.39,99.30 L1045.22,97.68 L1042.04,96.05 L1038.86,94.43 L1035.66,92.80 L1032.45,91.18 L1029.24,89.55 L1026.01,87.93 L1022.77,86.30 L1019.53,84.68 L1016.27,83.05 L1013.01,81.43 L1009.74,79.80 L1006.46,78.18 L1003.17,76.55 L999.87,74.93 L996.57,73.30 L993.26,71.68 L989.94,70.05 L986.62,68.43 L983.29,66.80 L979.95,65.18 L976.61,63.55 L973.26,61.93 L969.91,60.30 L966.55,58.68 L963.19,57.05 L959.82,55.43 L956.45,53.80 L953.07,52.18 L949.69,50.55 L946.31,48.93 L942.92,47.30 L939.53,45.68 L936.13,44.05 L932.74,42.43 L929.34,40.80 L925.94,39.18 L922.54,37.55 L919.13,35.93 L915.73,34.30 L912.32,32.68 L908.92,31.05 L905.51,29.43 L902.10,27.80" stroke-dashoffset="1.2"/>
<path d="M902.10,612.80 L905.08,611.17 L908.06,609.55 L911.04,607.92 L914.02,606.30 L917.00,604.67 L919.98,603.05 L922.96,601.42 L925.94,599.80 L928.91,598.17 L931.88,596.55 L934.85,594.92 L937.82,593.30 L940.78,591.67 L943.74,590.05 L946.70,588.42 L949.65,586.80 L952.61,585.17 L955.55,583.55 L958.50,581.92 L961.43,580.30 L964.37,578.67 L967.30,577.05 L970.22,575.42 L973.14,573.80 L976.06,572.17 L978.96,570.55 L981.87,568.92 L984.76,567.30 L987.65,565.67 L990.54,564.05 L993.41,562.42 L996.28,560.80 L999.15,559.17 L1002.00,557.55 L1004.85,555.92 L1007.69,554.30 L1010.52,552.67 L1013.34,551.05 L1016.16,549.42 L1018.97,547.80 L1021.76,546.17 L1024.55,544.55 L1027.33,542.92 L1030.10,541.30 L1032.86,539.67 L1035.61,538.05 L1038.35,536.42 L1041.08,534.80 L1043.80,533.17 L1046.50,531.55 L1049.20,529.92 L1051.89,528.30 L1054.56,526.67 L1057.22,525.05 L1059.88,523.42 L1062.51,521.80 L1065.14,520.17 L1067.76,518.55 L1070.36,516.92 L1072.95,515.30 L1075.52,513.67 L1078.08,512.05 L1080.63,510.43 L1083.17,508.80 L1085.69,507.18 L1088.20,505.55 L1090.69,503.93 L1093.17,502.30 L1095.64,500.68 L1098.09,499.05 L1100.52,497.43 L1102.94,495.80 L1105.35,494.18 L1107.73,492.55 L1110.11,490.93 L1112.47,489.30 L1114.81,487.68 L1117.13,486.05 L1119.44,484.43 L1121.73,482.80 L1124.01,481.18 L1126.27,479.55 L1128.51,477.93 L1130.74,476.30 L1132.94,474.68 L1135.13,473.05 L1137.30,471.43 L1139.46,469.80 L1141.59,468.18 L1143.71,466.55 L1145.81,464.93 L1147.89,463.30 L1149.95,461.68 L1152.00,460.05 L1154.02,458.43 L1156.03,456.80 L1158.01,455.18 L1159.98,453.55 L1161.92,451.93 L1163.85,450.30 L1165.76,448.68 L1167.64,447.05 L1169.51,445.43 L1171.36,443.80 L1173.18,442.18 L1174.99,440.55 L1176.77,438.93 L1178.53,437.30 L1180.28,435.68 L1182.00,434.05 L1183.70,432.43 L1185.37,430.80 L1187.03,429.18 L1188.67,427.55 L1190.28,425.93 L1191.87,424.30 L1193.44,422.68 L1194.99,421.05 L1196.51,419.43 L1198.01,417.80 L1199.49,416.18 L1200.95,414.55 L1202.38,412.93 L1203.80,411.30 L1205.18,409.68 L1206.55,408.05 L1207.89,406.43 L1209.21,404.80 L1210.51,403.18 L1211.78,401.55 L1213.03,399.93 L1214.25,398.30 L1215.45,396.68 L1216.63,395.05 L1217.78,393.43 L1218.91,391.80 L1220.02,390.18 L1221.10,388.55 L1222.15,386.93 L1223.18,385.30 L1224.19,383.68 L1225.18,382.05 L1226.13,380.43 L1227.07,378.80 L1227.98,377.18 L1228.86,375.55 L1229.72,373.93 L1230.55,372.30 L1231.36,370.68 L1232.15,369.05 L1232.91,367.43 L1233.64,365.80 L1234.35,364.18 L1235.03,362.55 L1235.69,360.93 L1236.32,359.30 L1236.93,357.68 L1237.51,356.05 L1238.07,354.43 L1238.60,352.80 L1239.10,351.18 L1239.58,349.55 L1240.04,347.93 L1240.47,346.30 L1240.87,344.68 L1241.24,343.05 L1241.59,341.43 L1241.92,339.80 L1242.22,338.18 L1242.49,336.55 L1242.74,334.93 L1242.96,333.30 L1243.15,331.68 L1243.32,330.05 L1243.47,328.43 L1243.58,326.80 L1243.67,325.18 L1243.74,323.55 L1243.78,321.93 L1243.79,320.30 L1243.78,318.68 L1243.74,317.05 L1243.67,315.43 L1243.58,313.80 L1243.47,312.18 L1243.32,310.55 L1243.15,308.93 L1242.96,307.30 L1242.74,305.68 L1242.49,304.05 L1242.22,302.43 L1241.92,300.80 L1241.59,299.18 L1241.24,297.55 L1240.87,295.93 L1240.47,294.30 L1240.04,292.68 L1239.58,291.05 L1239.10,289.43 L1238.60,287.80 L1238.07,286.18 L1237.51,284.55 L1236.93,282.93 L1236.32,281.30 L1235.69,279.68 L1235.03,278.05 L1234.35,276.43 L1233.64,274.80 L1232.91,273.18 L1232.15,271.55 L1231.36,269.93 L1230.55,268.30 L1229.72,266.68 L1228.86,265.05 L1227.98,263.43 L1227.07,261.80 L1226.13,260.18 L1225.18,258.55 L1224.19,256.93 L1223.18,255.30 L1222.15,253.68 L1221.10,252.05 L1220.02,250.43 L1218.91,248.80 L1217.78,247.18 L1216.63,245.55 L1215.45,243.93 L1214.25,242.30 L1213.03,240.68 L1211.78,239.05 L1210.51,237.43 L1209.21,235.80 L1207.89,234.18 L1206.55,232.55 L1205.18,230.93 L1203.80,229.30 L1202.38,227.68 L1200.95,226.05 L1199.49,224.43 L1198.01,222.80 L1196.51,221.18 L1194.99,219.55 L1193.44,217.93 L1191.87,216.30 L1190.28,214.68 L1188.67,213.05 L1187.03,211.43 L1185.37,209.80 L1183.70,208.18 L1182.00,206.55 L1180.28,204.93 L1178.53,203.30 L1176.77,201.68 L1174.99,200.05 L1173.18,198.43 L1171.36,196.80 L1169.51,195.18 L1167.64,193.55 L1165.76,191.93 L1163.85,190.30 L1161.92,188.68 L1159.98,187.05 L1158.01,185.43 L1156.03,183.80 L1154.02,182.18 L1152.00,180.55 L1149.95,178.93 L1147.89,177.30 L1145.81,175.68 L1143.71,174.05 L1141.59,172.43 L1139.46,170.80 L1137.30,169.18 L1135.13,167.55 L1132.94,165.93 L1130.74,164.30 L1128.51,162.68 L1126.27,161.05 L1124.01,159.43 L1121.73,157.80 L1119.44,156.18 L1117.13,154.55 L1114.81,152.93 L1112.47,151.30 L1110.11,149.68 L1107.73,148.05 L1105.35,146.43 L1102.94,144.80 L1100.52,143.18 L1098.09,141.55 L1095.64,139.93 L1093.17,138.30 L1090.69,136.68 L1088.20,135.05 L1085.69,133.43 L1083.17,131.80 L1080.63,130.18 L1078.08,128.55 L1075.52,126.93 L1072.95,125.30 L1070.36,123.68 L1067.76,122.05 L1065.14,120.43 L1062.51,118.80 L1059.88,117.18 L1057.22,115.55 L1054.56,113.93 L1051.89,112.30 L1049.20,110.68 L1046.50,109.05 L1043.80,107.43 L1041.08,105.80 L1038.35,104.18 L1035.61,102.55 L1032.86,100.93 L1030.10,99.30 L1027.33,97.68 L1024.55,96.05 L1021.76,94.43 L1018.97,92.80 L1016.16,91.18 L1013.34,89.55 L1010.52,87.93 L1007.69,86.30 L1004.85,84.68 L1002.00,83.05 L999.15,81.43 L996.28,79.80 L993.41,78.18 L990.54,76.55 L987.65,74.93 L984.76,73.30 L981.87,71.68 L978.96,70.05 L976.06,68.43 L973.14,66.80 L970.22,65.18 L967.30,63.55 L964.37,61.93 L961.43,60.30 L958.50,58.68 L955.55,57.05 L952.61,55.43 L949.65,53.80 L946.70,52.18 L943.74,50.55 L940.78,48.93 L937.82,47.30 L934.85,45.68 L931.88,44.05 L928.91,42.43 L925.94,40.80 L922.96,39.18 L919.98,37.55 L917.00,35.93 L914.02,34.30 L911.04,32.68 L908.06,31.05 L905.08,29.43 L902.10,27.80" stroke-dashoffset="1.2"/>
<path d="M902.10,612.80 L904.66,611.17 L907.21,609.55 L909.77,607.92 L912.32,606.30 L914.88,604.67 L917.43,603.05 L919.98,601.42 L922.53,599.80 L925.08,598.17 L927.63,596.55 L930.17,594.92 L932.71,593.30 L935.25,591.67 L937.79,590.05 L940.33,588.42 L942.86,586.80 L945.39,585.17 L947.92,583.55 L950.44,581.92 L952.96,580.30 L955.47,578.67 L957.98,577.05 L960.49,575.42 L962.99,573.80 L965.49,572.17 L967.98,570.55 L970.47,568.92 L972.95,567.30 L975.43,565.67 L977.90,564.05 L980.37,562.42 L982.83,560.80 L985.28,559.17 L987.73,557.55 L990.17,555.92 L992.60,554.30 L995.03,552.67 L997.45,551.05 L999.86,549.42 L1002.27,547.80 L1004.67,546.17 L1007.06,544.55 L1009.44,542.92 L1011.81,541.30 L1014.18,539.67 L1016.54,538.05 L1018.88,536.42 L1021.22,534.80 L1023.55,533.17 L1025.88,531.55 L1028.19,529.92 L1030.49,528.30 L1032.78,526.67 L1035.06,525.05 L1037.34,523.42 L1039.60,521.80 L1041.85,520.17 L1044.09,518.55 L1046.32,516.92 L1048.54,515.30 L1050.75,513.67 L1052.94,512.05 L1055.13,510.43 L1057.30,508.80 L1059.46,507.18 L1061.61,505.55 L1063.75,503.93 L1065.88,502.30 L1067.99,500.68 L1070.09,499.05 L1072.18,497.43 L1074.25,495.80 L1076.31,494.18 L1078.36,492.55 L1080.39,490.93 L1082.41,489.30 L1084.42,487.68 L1086.41,486.05 L1088.39,484.43 L1090.36,482.80 L1092.31,481.18 L1094.25,479.55 L1096.17,477.93 L1098.07,476.30 L1099.97,474.68 L1101.84,473.05 L1103.70,471.43 L1105.55,469.80 L1107.38,468.18 L1109.20,466.55 L1111.00,464.93 L1112.78,463.30 L1114.55,461.68 L1116.30,460.05 L1118.03,458.43 L1119.75,456.80 L1121.45,455.18 L1123.14,453.55 L1124.81,451.93 L1126.46,450.30 L1128.09,448.68 L1129.71,447.05 L1131.31,445.43 L1132.89,443.80 L1134.46,442.18 L1136.00,440.55 L1137.53,438.93 L1139.04,437.30 L1140.54,435.68 L1142.01,434.05 L1143.47,432.43 L1144.91,430.80 L1146.33,429.18 L1147.73,427.55 L1149.11,425.93 L1150.47,424.30 L1151.82,422.68 L1153.15,421.05 L1154.45,419.43 L1155.74,417.80 L1157.01,416.18 L1158.26,414.55 L1159.49,412.93 L1160.70,411.30 L1161.89,409.68 L1163.06,408.05 L1164.21,406.43 L1165.34,404.80 L1166.45,403.18 L1167.54,401.55 L1168.61,399.93 L1169.66,398.30 L1170.69,396.68 L1171.70,395.05 L1172.68,393.43 L1173.65,391.80 L1174.60,390.18 L1175.53,388.55 L1176.43,386.93 L1177.32,385.30 L1178.18,383.68 L1179.02,382.05 L1179.84,380.43 L1180.64,378.80 L1181.42,377.18 L1182.18,375.55 L1182.92,373.93 L1183.63,372.30 L1184.33,370.68 L1185.00,369.05 L1185.65,367.43 L1186.28,365.80 L1186.89,364.18 L1187.47,362.55 L1188.04,360.93 L1188.58,359.30 L1189.10,357.68 L1189.60,356.05 L1190.07,354.43 L1190.53,352.80 L1190.96,351.18 L1191.37,349.55 L1191.76,347.93 L1192.13,346.30 L1192.47,344.68 L1192.79,343.05 L1193.10,341.43 L1193.37,339.80 L1193.63,338.18 L1193.86,336.55 L1194.08,334.93 L1194.26,333.30 L1194.43,331.68 L1194.58,330.05 L1194.70,328.43 L1194.80,326.80 L1194.88,325.18 L1194.93,323.55 L1194.97,321.93 L1194.98,320.30 L1194.97,318.68 L1194.93,317.05 L1194.88,315.43 L1194.80,313.80 L1194.70,312.18 L1194.58,310.55 L1194.43,308.93 L1194.26,307.30 L1194.08,305.68 L1193.86,304.05 L1193.63,302.43 L1193.37,300.80 L1193.10,299.18 L1192.79,297.55 L1192.47,295.93 L1192.13,294.30 L1191.76,292.68 L1191.37,291.05 L1190.96,289.43 L1190.53,287.80 L1190.07,286.18 L1189.60,284.55 L1189.10,282.93 L1188.58,281.30 L1188.04,279.68 L1187.47,278.05 L1186.89,276.43 L1186.28,274.80 L1185.65,273.18 L1185.00,271.55 L1184.33,269.93 L1183.63,268.30 L1182.92,266.68 L1182.18,265.05 L1181.42,263.43 L1180.64,261.80 L1179.84,260.18 L1179.02,258.55 L1178.18,256.93 L1177.32,255.30 L1176.43,253.68 L1175.53,252.05 L1174.60,250.43 L1173.65,248.80 L1172.68,247.18 L1171.70,245.55 L1170.69,243.93 L1169.66,242.30 L1168.61,240.68 L1167.54,239.05 L1166.45,237.43 L1165.34,235.80 L1164.21,234.18 L1163.06,232.55 L1161.89,230.93 L1160.70,229.30 L1159.49,227.68 L1158.26,226.05 L1157.01,224.43 L1155.74,222.80 L1154.45,221.18 L1153.15,219.55 L1151.82,217.93 L1150.47,216.30 L1149.11,214.68 L1147.73,213.05 L1146.33,211.43 L1144.91,209.80 L1143.47,208.18 L1142.01,206.55 L1140.54,204.93 L1139.04,203.30 L1137.53,201.68 L1136.00,200.05 L1134.46,198.43 L1132.89,196.80 L1131.31,195.18 L1129.71,193.55 L1128.09,191.93 L1126.46,190.30 L1124.81,188.68 L1123.14,187.05 L1121.45,185.43 L1119.75,183.80 L1118.03,182.18 L1116.30,180.55 L1114.55,178.93 L1112.78,177.30 L1111.00,175.68 L1109.20,174.05 L1107.38,172.43 L1105.55,170.80 L1103.70,169.18 L1101.84,167.55 L1099.97,165.93 L1098.07,164.30 L1096.17,162.68 L1094.25,161.05 L1092.31,159.43 L1090.36,157.80 L1088.39,156.18 L1086.41,154.55 L1084.42,152.93 L1082.41,151.30 L1080.39,149.68 L1078.36,148.05 L1076.31,146.43 L1074.25,144.80 L1072.18,143.18 L1070.09,141.55 L1067.99,139.93 L1065.88,138.30 L1063.75,136.68 L1061.61,135.05 L1059.46,133.43 L1057.30,131.80 L1055.13,130.18 L1052.94,128.55 L1050.75,126.93 L1048.54,125.30 L1046.32,123.68 L1044.09,122.05 L1041.85,120.43 L1039.60,118.80 L1037.34,117.18 L1035.06,115.55 L1032.78,113.93 L1030.49,112.30 L1028.19,110.68 L1025.88,109.05 L1023.55,107.43 L1021.22,105.80 L1018.88,104.18 L1016.54,102.55 L1014.18,100.93 L1011.81,99.30 L1009.44,97.68 L1007.06,96.05 L1004.67,94.43 L1002.27,92.80 L999.86,91.18 L997.45,89.55 L995.03,87.93 L992.60,86.30 L990.17,84.68 L987.73,83.05 L985.28,81.43 L982.83,79.80 L980.37,78.18 L977.90,76.55 L975.43,74.93 L972.95,73.30 L970.47,71.68 L967.98,70.05 L965.49,68.43 L962.99,66.80 L960.49,65.18 L957.98,63.55 L955.47,61.93 L952.96,60.30 L950.44,58.68 L947.92,57.05 L945.39,55.43 L942.86,53.80 L940.33,52.18 L937.79,50.55 L935.25,48.93 L932.71,47.30 L930.17,45.68 L927.63,44.05 L925.08,42.43 L922.53,40.80 L919.98,39.18 L917.43,37.55 L914.88,35.93 L912.32,34.30 L909.77,32.68 L907.21,31.05 L904.66,29.43 L902.10,27.80" stroke-dashoffset="1.2"/>
<path d="M902.10,612.80 L904.23,611.17 L906.36,609.55 L908.49,607.92 L910.62,606.30 L912.75,604.67 L914.87,603.05 L917.00,601.42 L919.13,599.80 L921.25,598.17 L923.37,596.55 L925.49,594.92 L927.61,593.30 L929.73,591.67 L931.84,590.05 L933.96,588.42 L936.07,586.80 L938.18,585.17 L940.28,583.55 L942.38,581.92 L944.48,580.30 L946.58,578.67 L948.67,577.05 L950.76,575.42 L952.84,573.80 L954.93,572.17 L957.00,570.55 L959.08,568.92 L961.14,567.30 L963.21,565.67 L965.27,564.05 L967.32,562.42 L969.37,560.80 L971.42,559.17 L973.46,557.55 L975.49,555.92 L977.52,554.30 L979.54,552.67 L981.56,551.05 L983.57,549.42 L985.58,547.80 L987.57,546.17 L989.57,544.55 L991.55,542.92 L993.53,541.30 L995.50,539.67 L997.46,538.05 L999.42,536.42 L1001.37,534.80 L1003.31,533.17 L1005.25,531.55 L1007.17,529.92 L1009.09,528.30 L1011.00,526.67 L1012.90,525.05 L1014.80,523.42 L1016.68,521.80 L1018.56,520.17 L1020.43,518.55 L1022.28,516.92 L1024.13,515.30 L1025.97,513.67 L1027.80,512.05 L1029.62,510.43 L1031.43,508.80 L1033.24,507.18 L1035.03,505.55 L1036.81,503.93 L1038.58,502.30 L1040.34,500.68 L1042.09,499.05 L1043.83,497.43 L1045.56,495.80 L1047.28,494.18 L1048.98,492.55 L1050.68,490.93 L1052.36,489.30 L1054.03,487.68 L1055.70,486.05 L1057.34,484.43 L1058.98,482.80 L1060.61,481.18 L1062.22,479.55 L1063.82,477.93 L1065.41,476.30 L1066.99,474.68 L1068.55,473.05 L1070.10,471.43 L1071.64,469.80 L1073.17,468.18 L1074.68,466.55 L1076.18,464.93 L1077.67,463.30 L1079.14,461.68 L1080.60,460.05 L1082.04,458.43 L1083.48,456.80 L1084.89,455.18 L1086.30,453.55 L1087.69,451.93 L1089.06,450.30 L1090.43,448.68 L1091.77,447.05 L1093.11,445.43 L1094.43,443.80 L1095.73,442.18 L1097.02,440.55 L1098.29,438.93 L1099.55,437.30 L1100.80,435.68 L1102.03,434.05 L1103.24,432.43 L1104.44,430.80 L1105.62,429.18 L1106.79,427.55 L1107.94,425.93 L1109.08,424.30 L1110.20,422.68 L1111.30,421.05 L1112.39,419.43 L1113.47,417.80 L1114.52,416.18 L1115.56,414.55 L1116.59,412.93 L1117.60,411.30 L1118.59,409.68 L1119.56,408.05 L1120.52,406.43 L1121.46,404.80 L1122.39,403.18 L1123.30,401.55 L1124.19,399.93 L1125.06,398.30 L1125.92,396.68 L1126.76,395.05 L1127.59,393.43 L1128.39,391.80 L1129.18,390.18 L1129.95,388.55 L1130.71,386.93 L1131.45,385.30 L1132.17,383.68 L1132.87,382.05 L1133.55,380.43 L1134.22,378.80 L1134.87,377.18 L1135.50,375.55 L1136.11,373.93 L1136.71,372.30 L1137.29,370.68 L1137.85,369.05 L1138.39,367.43 L1138.92,365.80 L1139.42,364.18 L1139.91,362.55 L1140.38,360.93 L1140.83,359.30 L1141.27,357.68 L1141.68,356.05 L1142.08,354.43 L1142.46,352.80 L1142.82,351.18 L1143.16,349.55 L1143.48,347.93 L1143.79,346.30 L1144.08,344.68 L1144.35,343.05 L1144.60,341.43 L1144.83,339.80 L1145.04,338.18 L1145.24,336.55 L1145.41,334.93 L1145.57,333.30 L1145.71,331.68 L1145.83,330.05 L1145.93,328.43 L1146.02,326.80 L1146.08,325.18 L1146.13,323.55 L1146.16,321.93 L1146.16,320.30 L1146.16,318.68 L1146.13,317.05 L1146.08,315.43 L1146.02,313.80 L1145.93,312.18 L1145.83,310.55 L1145.71,308.93 L1145.57,307.30 L1145.41,305.68 L1145.24,304.05 L1145.04,302.43 L1144.83,300.80 L1144.60,299.18 L1144.35,297.55 L1144.08,295.93 L1143.79,294.30 L1143.48,292.68 L1143.16,291.05 L1142.82,289.43 L1142.46,287.80 L1142.08,286.18 L1141.68,284.55 L1141.27,282.93 L1140.83,281.30 L1140.38,279.68 L1139.91,278.05 L1139.42,276.43 L1138.92,274.80 L1138.39,273.18 L1137.85,271.55 L1137.29,269.93 L1136.71,268.30 L1136.11,266.68 L1135.50,265.05 L1134.87,263.43 L1134.22,261.80 L1133.55,260.18 L1132.87,258.55 L1132.17,256.93 L1131.45,255.30 L1130.71,253.68 L1129.95,252.05 L1129.18,250.43 L1128.39,248.80 L1127.59,247.18 L1126.76,245.55 L1125.92,243.93 L1125.06,242.30 L1124.19,240.68 L1123.30,239.05 L1122.39,237.43 L1121.46,235.80 L1120.52,234.18 L1119.56,232.55 L1118.59,230.93 L1117.60,229.30 L1116.59,227.68 L1115.56,226.05 L1114.52,224.43 L1113.47,222.80 L1112.39,221.18 L1111.30,219.55 L1110.20,217.93 L1109.08,216.30 L1107.94,214.68 L1106.79,213.05 L1105.62,211.43 L1104.44,209.80 L1103.24,208.18 L1102.03,206.55 L1100.80,204.93 L1099.55,203.30 L1098.29,201.68 L1097.02,200.05 L1095.73,198.43 L1094.43,196.80 L1093.11,195.18 L1091.77,193.55 L1090.43,191.93 L1089.06,190.30 L1087.69,188.68 L1086.30,187.05 L1084.89,185.43 L1083.48,183.80 L1082.04,182.18 L1080.60,180.55 L1079.14,178.93 L1077.67,177.30 L1076.18,175.68 L1074.68,174.05 L1073.17,172.43 L1071.64,170.80 L1070.10,169.18 L1068.55,167.55 L1066.99,165.93 L1065.41,164.30 L1063.82,162.68 L1062.22,161.05 L1060.61,159.43 L1058.98,157.80 L1057.34,156.18 L1055.70,154.55 L1054.03,152.93 L1052.36,151.30 L1050.68,149.68 L1048.98,148.05 L1047.28,146.43 L1045.56,144.80 L1043.83,143.18 L1042.09,141.55 L1040.34,139.93 L1038.58,138.30 L1036.81,136.68 L1035.03,135.05 L1033.24,133.43 L1031.43,131.80 L1029.62,130.18 L1027.80,128.55 L1025.97,126.93 L1024.13,125.30 L1022.28,123.68 L1020.43,122.05 L1018.56,120.43 L1016.68,118.80 L1014.80,117.18 L1012.90,115.55 L1011.00,113.93 L1009.09,112.30 L1007.17,110.68 L1005.25,109.05 L1003.31,107.43 L1001.37,105.80 L999.42,104.18 L997.46,102.55 L995.50,100.93 L993.53,99.30 L991.55,97.68 L989.57,96.05 L987.57,94.43 L985.58,92.80 L983.57,91.18 L981.56,89.55 L979.54,87.93 L977.52,86.30 L975.49,84.68 L973.46,83.05 L971.42,81.43 L969.37,79.80 L967.32,78.18 L965.27,76.55 L963.21,74.93 L961.14,73.30 L959.08,71.68 L957.00,70.05 L954.93,68.43 L952.84,66.80 L950.76,65.18 L948.67,63.55 L946.58,61.93 L944.48,60.30 L942.38,58.68 L940.28,57.05 L938.18,55.43 L936.07,53.80 L933.96,52.18 L931.84,50.55 L929.73,48.93 L927.61,47.30 L925.49,45.68 L923.37,44.05 L921.25,42.43 L919.13,40.80 L917.00,39.18 L914.87,37.55 L912.75,35.93 L910.62,34.30 L908.49,32.68 L906.36,31.05 L904.23,29.43 L902.10,27.80" stroke-dashoffset="1.2"/>
<path d="M902.10,612.80 L903.80,611.17 L905.51,609.55 L907.21,607.92 L908.91,606.30 L910.62,604.67 L912.32,603.05 L914.02,601.42 L915.72,599.80 L917.42,598.17 L919.12,596.55 L920.81,594.92 L922.51,593.30 L924.20,591.67 L925.90,590.05 L927.59,588.42 L929.27,586.80 L930.96,585.17 L932.64,583.55 L934.33,581.92 L936.01,580.30 L937.68,578.67 L939.36,577.05 L941.03,575.42 L942.70,573.80 L944.36,572.17 L946.02,570.55 L947.68,568.92 L949.34,567.30 L950.99,565.67 L952.63,564.05 L954.28,562.42 L955.92,560.80 L957.55,559.17 L959.19,557.55 L960.81,555.92 L962.44,554.30 L964.05,552.67 L965.67,551.05 L967.28,549.42 L968.88,547.80 L970.48,546.17 L972.07,544.55 L973.66,542.92 L975.24,541.30 L976.82,539.67 L978.39,538.05 L979.96,536.42 L981.52,534.80 L983.07,533.17 L984.62,531.55 L986.16,529.92 L987.69,528.30 L989.22,526.67 L990.74,525.05 L992.26,523.42 L993.77,521.80 L995.27,520.17 L996.76,518.55 L998.25,516.92 L999.73,515.30 L1001.20,513.67 L1002.66,512.05 L1004.12,510.43 L1005.57,508.80 L1007.01,507.18 L1008.44,505.55 L1009.87,503.93 L1011.28,502.30 L1012.69,500.68 L1014.09,499.05 L1015.48,497.43 L1016.87,495.80 L1018.24,494.18 L1019.61,492.55 L1020.96,490.93 L1022.31,489.30 L1023.65,487.68 L1024.98,486.05 L1026.30,484.43 L1027.61,482.80 L1028.91,481.18 L1030.20,479.55 L1031.48,477.93 L1032.75,476.30 L1034.01,474.68 L1035.26,473.05 L1036.50,471.43 L1037.73,469.80 L1038.95,468.18 L1040.16,466.55 L1041.36,464.93 L1042.55,463.30 L1043.73,461.68 L1044.90,460.05 L1046.05,458.43 L1047.20,456.80 L1048.34,455.18 L1049.46,453.55 L1050.57,451.93 L1051.67,450.30 L1052.76,448.68 L1053.84,447.05 L1054.91,445.43 L1055.96,443.80 L1057.00,442.18 L1058.04,440.55 L1059.05,438.93 L1060.06,437.30 L1061.06,435.68 L1062.04,434.05 L1063.01,432.43 L1063.97,430.80 L1064.92,429.18 L1065.85,427.55 L1066.77,425.93 L1067.68,424.30 L1068.58,422.68 L1069.46,421.05 L1070.33,419.43 L1071.19,417.80 L1072.04,416.18 L1072.87,414.55 L1073.69,412.93 L1074.50,411.30 L1075.29,409.68 L1076.07,408.05 L1076.84,406.43 L1077.59,404.80 L1078.33,403.18 L1079.06,401.55 L1079.77,399.93 L1080.47,398.30 L1081.16,396.68 L1081.83,395.05 L1082.49,393.43 L1083.13,391.80 L1083.77,390.18 L1084.38,388.55 L1084.99,386.93 L1085.58,385.30 L1086.15,383.68 L1086.71,382.05 L1087.26,380.43 L1087.80,378.80 L1088.32,377.18 L1088.82,375.55 L1089.31,373.93 L1089.79,372.30 L1090.25,370.68 L1090.70,369.05 L1091.13,367.43 L1091.55,365.80 L1091.96,364.18 L1092.35,362.55 L1092.72,360.93 L1093.09,359.30 L1093.43,357.68 L1093.76,356.05 L1094.08,354.43 L1094.39,352.80 L1094.67,351.18 L1094.95,349.55 L1095.21,347.93 L1095.45,346.30 L1095.68,344.68 L1095.90,343.05 L1096.10,341.43 L1096.28,339.80 L1096.45,338.18 L1096.61,336.55 L1096.75,334.93 L1096.88,333.30 L1096.99,331.68 L1097.08,330.05 L1097.17,328.43 L1097.23,326.80 L1097.29,325.18 L1097.32,323.55 L1097.34,321.93 L1097.35,320.30 L1097.34,318.68 L1097.32,317.05 L1097.29,315.43 L1097.23,313.80 L1097.17,312.18 L1097.08,310.55 L1096.99,308.93 L1096.88,307.30 L1096.75,305.68 L1096.61,304.05 L1096.45,302.43 L1096.28,300.80 L1096.10,299.18 L1095.90,297.55 L1095.68,295.93 L1095.45,294.30 L1095.21,292.68 L1094.95,291.05 L1094.67,289.43 L1094.39,287.80 L1094.08,286.18 L1093.76,284.55 L1093.43,282.93 L1093.09,281.30 L1092.72,279.68 L1092.35,278.05 L1091.96,276.43 L1091.55,274.80 L1091.13,273.18 L1090.70,271.55 L1090.25,269.93 L1089.79,268.30 L1089.31,266.68 L1088.82,265.05 L1088.32,263.43 L1087.80,261.80 L1087.26,260.18 L1086.71,258.55 L1086.15,256.93 L1085.58,255.30 L1084.99,253.68 L1084.38,252.05 L1083.77,250.43 L1083.13,248.80 L1082.49,247.18 L1081.83,245.55 L1081.16,243.93 L1080.47,242.30 L1079.77,240.68 L1079.06,239.05 L1078.33,237.43 L1077.59,235.80 L1076.84,234.18 L1076.07,232.55 L1075.29,230.93 L1074.50,229.30 L1073.69,227.68 L1072.87,226.05 L1072.04,224.43 L1071.19,222.80 L1070.33,221.18 L1069.46,219.55 L1068.58,217.93 L1067.68,216.30 L1066.77,214.68 L1065.85,213.05 L1064.92,211.43 L1063.97,209.80 L1063.01,208.18 L1062.04,206.55 L1061.06,204.93 L1060.06,203.30 L1059.05,201.68 L1058.04,200.05 L1057.00,198.43 L1055.96,196.80 L1054.91,195.18 L1053.84,193.55 L1052.76,191.93 L1051.67,190.30 L1050.57,188.68 L1049.46,187.05 L1048.34,185.43 L1047.20,183.80 L1046.05,182.18 L1044.90,180.55 L1043.73,178.93 L1042.55,177.30 L1041.36,175.68 L1040.16,174.05 L1038.95,172.43 L1037.73,170.80 L1036.50,169.18 L1035.26,167.55 L1034.01,165.93 L1032.75,164.30 L1031.48,162.68 L1030.20,161.05 L1028.91,159.43 L1027.61,157.80 L1026.30,156.18 L1024.98,154.55 L1023.65,152.93 L1022.31,151.30 L1020.96,149.68 L1019.61,148.05 L1018.24,146.43 L1016.87,144.80 L1015.48,143.18 L1014.09,141.55 L1012.69,139.93 L1011.28,138.30 L1009.87,136.68 L1008.44,135.05 L1007.01,133.43 L1005.57,131.80 L1004.12,130.18 L1002.66,128.55 L1001.20,126.93 L999.73,125.30 L998.25,123.68 L996.76,122.05 L995.27,120.43 L993.77,118.80 L992.26,117.18 L990.74,115.55 L989.22,113.93 L987.69,112.30 L986.16,110.68 L984.62,109.05 L983.07,107.43 L981.52,105.80 L979.96,104.18 L978.39,102.55 L976.82,100.93 L975.24,99.30 L973.66,97.68 L972.07,96.05 L970.48,94.43 L968.88,92.80 L967.28,91.18 L965.67,89.55 L964.05,87.93 L962.44,86.30 L960.81,84.68 L959.19,83.05 L957.55,81.43 L955.92,79.80 L954.28,78.18 L952.63,76.55 L950.99,74.93 L949.34,73.30 L947.68,71.68 L946.02,70.05 L944.36,68.43 L942.70,66.80 L941.03,65.18 L939.36,63.55 L937.68,61.93 L936.01,60.30 L934.33,58.68 L932.64,57.05 L930.96,55.43 L929.27,53.80 L927.59,52.18 L925.90,50.55 L924.20,48.93 L922.51,47.30 L920.81,45.68 L919.12,44.05 L917.42,42.43 L915.72,40.80 L914.02,39.18 L912.32,37.55 L910.62,35.93 L908.91,34.30 L907.21,32.68 L905.51,31.05 L903.80,29.43 L902.10,27.80" stroke-dashoffset="1.2"/>
<path d="M902.10,612.80 L903.38,611.17 L904.66,609.55 L905.93,607.92 L907.21,606.30 L908.49,604.67 L909.76,603.05 L911.04,601.42 L912.32,599.80 L913.59,598.17 L914.86,596.55 L916.14,594.92 L917.41,593.30 L918.68,591.67 L919.95,590.05 L921.21,588.42 L922.48,586.80 L923.75,585.17 L925.01,583.55 L926.27,581.92 L927.53,580.30 L928.79,578.67 L930.04,577.05 L931.30,575.42 L932.55,573.80 L933.80,572.17 L935.04,570.55 L936.29,568.92 L937.53,567.30 L938.77,565.67 L940.00,564.05 L941.23,562.42 L942.46,560.80 L943.69,559.17 L944.91,557.55 L946.14,555.92 L947.35,554.30 L948.57,552.67 L949.78,551.05 L950.98,549.42 L952.19,547.80 L953.38,546.17 L954.58,544.55 L955.77,542.92 L956.96,541.30 L958.14,539.67 L959.32,538.05 L960.49,536.42 L961.66,534.80 L962.83,533.17 L963.99,531.55 L965.14,529.92 L966.29,528.30 L967.44,526.67 L968.58,525.05 L969.72,523.42 L970.85,521.80 L971.97,520.17 L973.10,518.55 L974.21,516.92 L975.32,515.30 L976.42,513.67 L977.52,512.05 L978.61,510.43 L979.70,508.80 L980.78,507.18 L981.86,505.55 L982.93,503.93 L983.99,502.30 L985.04,500.68 L986.09,499.05 L987.14,497.43 L988.17,495.80 L989.21,494.18 L990.23,492.55 L991.25,490.93 L992.26,489.30 L993.26,487.68 L994.26,486.05 L995.25,484.43 L996.23,482.80 L997.20,481.18 L998.17,479.55 L999.13,477.93 L1000.09,476.30 L1001.03,474.68 L1001.97,473.05 L1002.90,471.43 L1003.83,469.80 L1004.74,468.18 L1005.65,466.55 L1006.55,464.93 L1007.44,463.30 L1008.32,461.68 L1009.20,460.05 L1010.07,458.43 L1010.93,456.80 L1011.78,455.18 L1012.62,453.55 L1013.45,451.93 L1014.28,450.30 L1015.10,448.68 L1015.90,447.05 L1016.70,445.43 L1017.50,443.80 L1018.28,442.18 L1019.05,440.55 L1019.82,438.93 L1020.57,437.30 L1021.32,435.68 L1022.06,434.05 L1022.78,432.43 L1023.50,430.80 L1024.21,429.18 L1024.91,427.55 L1025.61,425.93 L1026.29,424.30 L1026.96,422.68 L1027.62,421.05 L1028.28,419.43 L1028.92,417.80 L1029.55,416.18 L1030.18,414.55 L1030.79,412.93 L1031.40,411.30 L1031.99,409.68 L1032.58,408.05 L1033.15,406.43 L1033.72,404.80 L1034.27,403.18 L1034.82,401.55 L1035.35,399.93 L1035.88,398.30 L1036.39,396.68 L1036.90,395.05 L1037.39,393.43 L1037.88,391.80 L1038.35,390.18 L1038.81,388.55 L1039.27,386.93 L1039.71,385.30 L1040.14,383.68 L1040.56,382.05 L1040.97,380.43 L1041.37,378.80 L1041.76,377.18 L1042.14,375.55 L1042.51,373.93 L1042.87,372.30 L1043.21,370.68 L1043.55,369.05 L1043.87,367.43 L1044.19,365.80 L1044.49,364.18 L1044.79,362.55 L1045.07,360.93 L1045.34,359.30 L1045.60,357.68 L1045.85,356.05 L1046.09,354.43 L1046.31,352.80 L1046.53,351.18 L1046.74,349.55 L1046.93,347.93 L1047.11,346.30 L1047.29,344.68 L1047.45,343.05 L1047.60,341.43 L1047.74,339.80 L1047.86,338.18 L1047.98,336.55 L1048.09,334.93 L1048.18,333.30 L1048.27,331.68 L1048.34,330.05 L1048.40,328.43 L1048.45,326.80 L1048.49,325.18 L1048.52,323.55 L1048.53,321.93 L1048.54,320.30 L1048.53,318.68 L1048.52,317.05 L1048.49,315.43 L1048.45,313.80 L1048.40,312.18 L1048.34,310.55 L1048.27,308.93 L1048.18,307.30 L1048.09,305.68 L1047.98,304.05 L1047.86,302.43 L1047.74,300.80 L1047.60,299.18 L1047.45,297.55 L1047.29,295.93 L1047.11,294.30 L1046.93,292.68 L1046.74,291.05 L1046.53,289.43 L1046.31,287.80 L1046.09,286.18 L1045.85,284.55 L1045.60,282.93 L1045.34,281.30 L1045.07,279.68 L1044.79,278.05 L1044.49,276.43 L1044.19,274.80 L1043.87,273.18 L1043.55,271.55 L1043.21,269.93 L1042.87,268.30 L1042.51,266.68 L1042.14,265.05 L1041.76,263.43 L1041.37,261.80 L1040.97,260.18 L1040.56,258.55 L1040.14,256.93 L1039.71,255.30 L1039.27,253.68 L1038.81,252.05 L1038.35,250.43 L1037.88,248.80 L1037.39,247.18 L1036.90,245.55 L1036.39,243.93 L1035.88,242.30 L1035.35,240.68 L1034.82,239.05 L1034.27,237.43 L1033.72,235.80 L1033.15,234.18 L1032.58,232.55 L1031.99,230.93 L1031.40,229.30 L1030.79,227.68 L1030.18,226.05 L1029.55,224.43 L1028.92,222.80 L1028.28,221.18 L1027.62,219.55 L1026.96,217.93 L1026.29,216.30 L1025.61,214.68 L1024.91,213.05 L1024.21,211.43 L1023.50,209.80 L1022.78,208.18 L1022.06,206.55 L1021.32,204.93 L1020.57,203.30 L1019.82,201.68 L1019.05,200.05 L1018.28,198.43 L1017.50,196.80 L1016.70,195.18 L1015.90,193.55 L1015.10,191.93 L1014.28,190.30 L1013.45,188.68 L1012.62,187.05 L1011.78,185.43 L1010.93,183.80 L1010.07,182.18 L1009.20,180.55 L1008.32,178.93 L1007.44,177.30 L1006.55,175.68 L1005.65,174.05 L1004.74,172.43 L1003.83,170.80 L1002.90,169.18 L1001.97,167.55 L1001.03,165.93 L1000.09,164.30 L999.13,162.68 L998.17,161.05 L997.20,159.43 L996.23,157.80 L995.25,156.18 L994.26,154.55 L993.26,152.93 L992.26,151.30 L991.25,149.68 L990.23,148.05 L989.21,146.43 L988.17,144.80 L987.14,143.18 L986.09,141.55 L985.04,139.93 L983.99,138.30 L982.93,136.68 L981.86,135.05 L980.78,133.43 L979.70,131.80 L978.61,130.18 L977.52,128.55 L976.42,126.93 L975.32,125.30 L974.21,123.68 L973.10,122.05 L971.97,120.43 L970.85,118.80 L969.72,117.18 L968.58,115.55 L967.44,113.93 L966.29,112.30 L965.14,110.68 L963.99,109.05 L962.83,107.43 L961.66,105.80 L960.49,104.18 L959.32,102.55 L958.14,100.93 L956.96,99.30 L955.77,97.68 L954.58,96.05 L953.38,94.43 L952.19,92.80 L950.98,91.18 L949.78,89.55 L948.57,87.93 L947.35,86.30 L946.14,84.68 L944.91,83.05 L943.69,81.43 L942.46,79.80 L941.23,78.18 L940.00,76.55 L938.77,74.93 L937.53,73.30 L936.29,71.68 L935.04,70.05 L933.80,68.43 L932.55,66.80 L931.30,65.18 L930.04,63.55 L928.79,61.93 L927.53,60.30 L926.27,58.68 L925.01,57.05 L923.75,55.43 L922.48,53.80 L921.21,52.18 L919.95,50.55 L918.68,48.93 L917.41,47.30 L916.14,45.68 L914.86,44.05 L913.59,42.43 L912.32,40.80 L911.04,39.18 L909.76,37.55 L908.49,35.93 L907.21,34.30 L905.93,32.68 L904.66,31.05 L903.38,29.43 L902.10,27.80" stroke-dashoffset="1.2"/>
<path d="M902.10,612.80 L902.95,611.17 L903.80,609.55 L904.66,607.92 L905.51,606.30 L906.36,604.67 L907.21,603.05 L908.06,601.42 L908.91,599.80 L909.76,598.17 L910.61,596.55 L911.46,594.92 L912.30,593.30 L913.15,591.67 L914.00,590.05 L914.84,588.42 L915.69,586.80 L916.53,585.17 L917.37,583.55 L918.21,581.92 L919.05,580.30 L919.89,578.67 L920.73,577.05 L921.56,575.42 L922.40,573.80 L923.23,572.17 L924.06,570.55 L924.89,568.92 L925.72,567.30 L926.54,565.67 L927.37,564.05 L928.19,562.42 L929.01,560.80 L929.83,559.17 L930.64,557.55 L931.46,555.92 L932.27,554.30 L933.08,552.67 L933.88,551.05 L934.69,549.42 L935.49,547.80 L936.29,546.17 L937.09,544.55 L937.88,542.92 L938.67,541.30 L939.46,539.67 L940.25,538.05 L941.03,536.42 L941.81,534.80 L942.58,533.17 L943.36,531.55 L944.13,529.92 L944.90,528.30 L945.66,526.67 L946.42,525.05 L947.18,523.42 L947.93,521.80 L948.68,520.17 L949.43,518.55 L950.17,516.92 L950.91,515.30 L951.65,513.67 L952.38,512.05 L953.11,510.43 L953.83,508.80 L954.55,507.18 L955.27,505.55 L955.98,503.93 L956.69,502.30 L957.40,500.68 L958.10,499.05 L958.79,497.43 L959.48,495.80 L960.17,494.18 L960.85,492.55 L961.53,490.93 L962.20,489.30 L962.87,487.68 L963.54,486.05 L964.20,484.43 L964.85,482.80 L965.50,481.18 L966.15,479.55 L966.79,477.93 L967.42,476.30 L968.06,474.68 L968.68,473.05 L969.30,471.43 L969.92,469.80 L970.53,468.18 L971.13,466.55 L971.73,464.93 L972.33,463.30 L972.92,461.68 L973.50,460.05 L974.08,458.43 L974.65,456.80 L975.22,455.18 L975.78,453.55 L976.34,451.93 L976.89,450.30 L977.43,448.68 L977.97,447.05 L978.50,445.43 L979.03,443.80 L979.55,442.18 L980.07,440.55 L980.58,438.93 L981.08,437.30 L981.58,435.68 L982.07,434.05 L982.56,432.43 L983.04,430.80 L983.51,429.18 L983.98,427.55 L984.44,425.93 L984.89,424.30 L985.34,422.68 L985.78,421.05 L986.22,419.43 L986.65,417.80 L987.07,416.18 L987.49,414.55 L987.90,412.93 L988.30,411.30 L988.70,409.68 L989.09,408.05 L989.47,406.43 L989.85,404.80 L990.22,403.18 L990.58,401.55 L990.94,399.93 L991.29,398.30 L991.63,396.68 L991.97,395.05 L992.29,393.43 L992.62,391.80 L992.93,390.18 L993.24,388.55 L993.54,386.93 L993.84,385.30 L994.13,383.68 L994.41,382.05 L994.68,380.43 L994.95,378.80 L995.21,377.18 L995.46,375.55 L995.71,373.93 L995.94,372.30 L996.18,370.68 L996.40,369.05 L996.62,367.43 L996.83,365.80 L997.03,364.18 L997.22,362.55 L997.41,360.93 L997.59,359.30 L997.77,357.68 L997.93,356.05 L998.09,354.43 L998.24,352.80 L998.39,351.18 L998.52,349.55 L998.65,347.93 L998.78,346.30 L998.89,344.68 L999.00,343.05 L999.10,341.43 L999.19,339.80 L999.28,338.18 L999.35,336.55 L999.43,334.93 L999.49,333.30 L999.54,331.68 L999.59,330.05 L999.63,328.43 L999.67,326.80 L999.69,325.18 L999.71,323.55 L999.72,321.93 L999.73,320.30 L999.72,318.68 L999.71,317.05 L999.69,315.43 L999.67,313.80 L999.63,312.18 L999.59,310.55 L999.54,308.93 L999.49,307.30 L999.43,305.68 L999.35,304.05 L999.28,302.43 L999.19,300.80 L999.10,299.18 L999.00,297.55 L998.89,295.93 L998.78,294.30 L998.65,292.68 L998.52,291.05 L998.39,289.43 L998.24,287.80 L998.09,286.18 L997.93,284.55 L997.77,282.93 L997.59,281.30 L997.41,279.68 L997.22,278.05 L997.03,276.43 L996.83,274.80 L996.62,273.18 L996.40,271.55 L996.18,269.93 L995.94,268.30 L995.71,266.68 L995.46,265.05 L995.21,263.43 L994.95,261.80 L994.68,260.18 L994.41,258.55 L994.13,256.93 L993.84,255.30 L993.54,253.68 L993.24,252.05 L992.93,250.43 L992.62,248.80 L992.29,247.18 L991.97,245.55 L991.63,243.93 L991.29,242.30 L990.94,240.68 L990.58,239.05 L990.22,237.43 L989.85,235.80 L989.47,234.18 L989.09,232.55 L988.70,230.93 L988.30,229.30 L987.90,227.68 L987.49,226.05 L987.07,224.43 L986.65,222.80 L986.22,221.18 L985.78,219.55 L985.34,217.93 L984.89,216.30 L984.44,214.68 L983.98,213.05 L983.51,211.43 L983.04,209.80 L982.56,208.18 L982.07,206.55 L981.58,204.93 L981.08,203.30 L980.58,201.68 L980.07,200.05 L979.55,198.43 L979.03,196.80 L978.50,195.18 L977.97,193.55 L977.43,191.93 L976.89,190.30 L976.34,188.68 L975.78,187.05 L975.22,185.43 L974.65,183.80 L974.08,182.18 L973.50,180.55 L972.92,178.93 L972.33,177.30 L971.73,175.68 L971.13,174.05 L970.53,172.43 L969.92,170.80 L969.30,169.18 L968.68,167.55 L968.06,165.93 L967.42,164.30 L966.79,162.68 L966.15,161.05 L965.50,159.43 L964.85,157.80 L964.20,156.18 L963.54,154.55 L962.87,152.93 L962.20,151.30 L961.53,149.68 L960.85,148.05 L960.17,146.43 L959.48,144.80 L958.79,143.18 L958.10,141.55 L957.40,139.93 L956.69,138.30 L955.98,136.68 L955.27,135.05 L954.55,133.43 L953.83,131.80 L953.11,130.18 L952.38,128.55 L951.65,126.93 L950.91,125.30 L950.17,123.68 L949.43,122.05 L948.68,120.43 L947.93,118.80 L947.18,117.18 L946.42,115.55 L945.66,113.93 L944.90,112.30 L944.13,110.68 L943.36,109.05 L942.58,107.43 L941.81,105.80 L941.03,104.18 L940.25,102.55 L939.46,100.93 L938.67,99.30 L937.88,97.68 L937.09,96.05 L936.29,94.43 L935.49,92.80 L934.69,91.18 L933.88,89.55 L933.08,87.93 L932.27,86.30 L931.46,84.68 L930.64,83.05 L929.83,81.43 L929.01,79.80 L928.19,78.18 L927.37,76.55 L926.54,74.93 L925.72,73.30 L924.89,71.68 L924.06,70.05 L923.23,68.43 L922.40,66.80 L921.56,65.18 L920.73,63.55 L919.89,61.93 L919.05,60.30 L918.21,58.68 L917.37,57.05 L916.53,55.43 L915.69,53.80 L914.84,52.18 L914.00,50.55 L913.15,48.93 L912.30,47.30 L911.46,45.68 L910.61,44.05 L909.76,42.43 L908.91,40.80 L908.06,39.18 L907.21,37.55 L906.36,35.93 L905.51,34.30 L904.66,32.68 L903.80,31.05 L902.95,29.43 L902.10,27.80" stroke-dashoffset="1.2"/>
<path d="M902.10,612.80 L902.53,611.17 L902.95,609.55 L903.38,607.92 L903.80,606.30 L904.23,604.67 L904.65,603.05 L905.08,601.42 L905.51,599.80 L905.93,598.17 L906.35,596.55 L906.78,594.92 L907.20,593.30 L907.63,591.67 L908.05,590.05 L908.47,588.42 L908.89,586.80 L909.32,585.17 L909.74,583.55 L910.16,581.92 L910.58,580.30 L911.00,578.67 L911.41,577.05 L911.83,575.42 L912.25,573.80 L912.67,572.17 L913.08,570.55 L913.50,568.92 L913.91,567.30 L914.32,565.67 L914.73,564.05 L915.14,562.42 L915.55,560.80 L915.96,559.17 L916.37,557.55 L916.78,555.92 L917.18,554.30 L917.59,552.67 L917.99,551.05 L918.39,549.42 L918.80,547.80 L919.19,546.17 L919.59,544.55 L919.99,542.92 L920.39,541.30 L920.78,539.67 L921.17,538.05 L921.56,536.42 L921.95,534.80 L922.34,533.17 L922.73,531.55 L923.11,529.92 L923.50,528.30 L923.88,526.67 L924.26,525.05 L924.64,523.42 L925.02,521.80 L925.39,520.17 L925.77,518.55 L926.14,516.92 L926.51,515.30 L926.87,513.67 L927.24,512.05 L927.60,510.43 L927.97,508.80 L928.33,507.18 L928.69,505.55 L929.04,503.93 L929.40,502.30 L929.75,500.68 L930.10,499.05 L930.45,497.43 L930.79,495.80 L931.14,494.18 L931.48,492.55 L931.82,490.93 L932.15,489.30 L932.49,487.68 L932.82,486.05 L933.15,484.43 L933.48,482.80 L933.80,481.18 L934.12,479.55 L934.44,477.93 L934.76,476.30 L935.08,474.68 L935.39,473.05 L935.70,471.43 L936.01,469.80 L936.31,468.18 L936.62,466.55 L936.92,464.93 L937.21,463.30 L937.51,461.68 L937.80,460.05 L938.09,458.43 L938.38,456.80 L938.66,455.18 L938.94,453.55 L939.22,451.93 L939.49,450.30 L939.77,448.68 L940.03,447.05 L940.30,445.43 L940.57,443.80 L940.83,442.18 L941.08,440.55 L941.34,438.93 L941.59,437.30 L941.84,435.68 L942.09,434.05 L942.33,432.43 L942.57,430.80 L942.80,429.18 L943.04,427.55 L943.27,425.93 L943.50,424.30 L943.72,422.68 L943.94,421.05 L944.16,419.43 L944.37,417.80 L944.58,416.18 L944.79,414.55 L945.00,412.93 L945.20,411.30 L945.40,409.68 L945.59,408.05 L945.78,406.43 L945.97,404.80 L946.16,403.18 L946.34,401.55 L946.52,399.93 L946.69,398.30 L946.86,396.68 L947.03,395.05 L947.20,393.43 L947.36,391.80 L947.52,390.18 L947.67,388.55 L947.82,386.93 L947.97,385.30 L948.11,383.68 L948.25,382.05 L948.39,380.43 L948.52,378.80 L948.65,377.18 L948.78,375.55 L948.90,373.93 L949.02,372.30 L949.14,370.68 L949.25,369.05 L949.36,367.43 L949.46,365.80 L949.56,364.18 L949.66,362.55 L949.76,360.93 L949.85,359.30 L949.93,357.68 L950.02,356.05 L950.10,354.43 L950.17,352.80 L950.24,351.18 L950.31,349.55 L950.38,347.93 L950.44,346.30 L950.50,344.68 L950.55,343.05 L950.60,341.43 L950.65,339.80 L950.69,338.18 L950.73,336.55 L950.76,334.93 L950.79,333.30 L950.82,331.68 L950.85,330.05 L950.87,328.43 L950.88,326.80 L950.90,325.18 L950.91,323.55 L950.91,321.93 L950.91,320.30 L950.91,318.68 L950.91,317.05 L950.90,315.43 L950.88,313.80 L950.87,312.18 L950.85,310.55 L950.82,308.93 L950.79,307.30 L950.76,305.68 L950.73,304.05 L950.69,302.43 L950.65,300.80 L950.60,299.18 L950.55,297.55 L950.50,295.93 L950.44,294.30 L950.38,292.68 L950.31,291.05 L950.24,289.43 L950.17,287.80 L950.10,286.18 L950.02,284.55 L949.93,282.93 L949.85,281.30 L949.76,279.68 L949.66,278.05 L949.56,276.43 L949.46,274.80 L949.36,273.18 L949.25,271.55 L949.14,269.93 L949.02,268.30 L948.90,266.68 L948.78,265.05 L948.65,263.43 L948.52,261.80 L948.39,260.18 L948.25,258.55 L948.11,256.93 L947.97,255.30 L947.82,253.68 L947.67,252.05 L947.52,250.43 L947.36,248.80 L947.20,247.18 L947.03,245.55 L946.86,243.93 L946.69,242.30 L946.52,240.68 L946.34,239.05 L946.16,237.43 L945.97,235.80 L945.78,234.18 L945.59,232.55 L945.40,230.93 L945.20,229.30 L945.00,227.68 L944.79,226.05 L944.58,224.43 L944.37,222.80 L944.16,221.18 L943.94,219.55 L943.72,217.93 L943.50,216.30 L943.27,214.68 L943.04,213.05 L942.80,211.43 L942.57,209.80 L942.33,208.18 L942.09,206.55 L941.84,204.93 L941.59,203.30 L941.34,201.68 L941.08,200.05 L940.83,198.43 L940.57,196.80 L940.30,195.18 L940.03,193.55 L939.77,191.93 L939.49,190.30 L939.22,188.68 L938.94,187.05 L938.66,185.43 L938.38,183.80 L938.09,182.18 L937.80,180.55 L937.51,178.93 L937.21,177.30 L936.92,175.68 L936.62,174.05 L936.31,172.43 L936.01,170.80 L935.70,169.18 L935.39,167.55 L935.08,165.93 L934.76,164.30 L934.44,162.68 L934.12,161.05 L933.80,159.43 L933.48,157.80 L933.15,156.18 L932.82,154.55 L932.49,152.93 L932.15,151.30 L931.82,149.68 L931.48,148.05 L931.14,146.43 L930.79,144.80 L930.45,143.18 L930.10,141.55 L929.75,139.93 L929.40,138.30 L929.04,136.68 L928.69,135.05 L928.33,133.43 L927.97,131.80 L927.60,130.18 L927.24,128.55 L926.87,126.93 L926.51,125.30 L926.14,123.68 L925.77,122.05 L925.39,120.43 L925.02,118.80 L924.64,117.18 L924.26,115.55 L923.88,113.93 L923.50,112.30 L923.11,110.68 L922.73,109.05 L922.34,107.43 L921.95,105.80 L921.56,104.18 L921.17,102.55 L920.78,100.93 L920.39,99.30 L919.99,97.68 L919.59,96.05 L919.19,94.43 L918.80,92.80 L918.39,91.18 L917.99,89.55 L917.59,87.93 L917.18,86.30 L916.78,84.68 L916.37,83.05 L915.96,81.43 L915.55,79.80 L915.14,78.18 L914.73,76.55 L914.32,74.93 L913.91,73.30 L913.50,71.68 L913.08,70.05 L912.67,68.43 L912.25,66.80 L911.83,65.18 L911.41,63.55 L911.00,61.93 L910.58,60.30 L910.16,58.68 L909.74,57.05 L909.32,55.43 L908.89,53.80 L908.47,52.18 L908.05,50.55 L907.63,48.93 L907.20,47.30 L906.78,45.68 L906.35,44.05 L905.93,42.43 L905.51,40.80 L905.08,39.18 L904.65,37.55 L904.23,35.93 L903.80,34.30 L903.38,32.68 L902.95,31.05 L902.53,29.43 L902.10,27.80" stroke-dashoffset="1.2"/>
<path d="M902.10,612.80 L902.10,611.17 L902.10,609.55 L902.10,607.92 L902.10,606.30 L902.10,604.67 L902.10,603.05 L902.10,601.42 L902.10,599.80 L902.10,598.17 L902.10,596.55 L902.10,594.92 L902.10,593.30 L902.10,591.67 L902.10,590.05 L902.10,588.42 L902.10,586.80 L902.10,585.17 L902.10,583.55 L902.10,581.92 L902.10,580.30 L902.10,578.67 L902.10,577.05 L902.10,575.42 L902.10,573.80 L902.10,572.17 L902.10,570.55 L902.10,568.92 L902.10,567.30 L902.10,565.67 L902.10,564.05 L902.10,562.42 L902.10,560.80 L902.10,559.17 L902.10,557.55 L902.10,555.92 L902.10,554.30 L902.10,552.67 L902.10,551.05 L902.10,549.42 L902.10,547.80 L902.10,546.17 L902.10,544.55 L902.10,542.92 L902.10,541.30 L902.10,539.67 L902.10,538.05 L902.10,536.42 L902.10,534.80 L902.10,533.17 L902.10,531.55 L902.10,529.92 L902.10,528.30 L902.10,526.67 L902.10,525.05 L902.10,523.42 L902.10,521.80 L902.10,520.17 L902.10,518.55 L902.10,516.92 L902.10,515.30 L902.10,513.67 L902.10,512.05 L902.10,510.43 L902.10,508.80 L902.10,507.18 L902.10,505.55 L902.10,503.93 L902.10,502.30 L902.10,500.68 L902.10,499.05 L902.10,497.43 L902.10,495.80 L902.10,494.18 L902.10,492.55 L902.10,490.93 L902.10,489.30 L902.10,487.68 L902.10,486.05 L902.10,484.43 L902.10,482.80 L902.10,481.18 L902.10,479.55 L902.10,477.93 L902.10,476.30 L902.10,474.68 L902.10,473.05 L902.10,471.43 L902.10,469.80 L902.10,468.18 L902.10,466.55 L902.10,464.93 L902.10,463.30 L902.10,461.68 L902.10,460.05 L902.10,458.43 L902.10,456.80 L902.10,455.18 L902.10,453.55 L902.10,451.93 L902.10,450.30 L902.10,448.68 L902.10,447.05 L902.10,445.43 L902.10,443.80 L902.10,442.18 L902.10,440.55 L902.10,438.93 L902.10,437.30 L902.10,435.68 L902.10,434.05 L902.10,432.43 L902.10,430.80 L902.10,429.18 L902.10,427.55 L902.10,425.93 L902.10,424.30 L902.10,422.68 L902.10,421.05 L902.10,419.43 L902.10,417.80 L902.10,416.18 L902.10,414.55 L902.10,412.93 L902.10,411.30 L902.10,409.68 L902.10,408.05 L902.10,406.43 L902.10,404.80 L902.10,403.18 L902.10,401.55 L902.10,399.93 L902.10,398.30 L902.10,396.68 L902.10,395.05 L902.10,393.43 L902.10,391.80 L902.10,390.18 L902.10,388.55 L902.10,386.93 L902.10,385.30 L902.10,383.68 L902.10,382.05 L902.10,380.43 L902.10,378.80 L902.10,377.18 L902.10,375.55 L902.10,373.93 L902.10,372.30 L902.10,370.68 L902.10,369.05 L902.10,367.43 L902.10,365.80 L902.10,364.18 L902.10,362.55 L902.10,360.93 L902.10,359.30 L902.10,357.68 L902.10,356.05 L902.10,354.43 L902.10,352.80 L902.10,351.18 L902.10,349.55 L902.10,347.93 L902.10,346.30 L902.10,344.68 L902.10,343.05 L902.10,341.43 L902.10,339.80 L902.10,338.18 L902.10,336.55 L902.10,334.93 L902.10,333.30 L902.10,331.68 L902.10,330.05 L902.10,328.43 L902.10,326.80 L902.10,325.18 L902.10,323.55 L902.10,321.93 L902.10,320.30 L902.10,318.68 L902.10,317.05 L902.10,315.43 L902.10,313.80 L902.10,312.18 L902.10,310.55 L902.10,308.93 L902.10,307.30 L902.10,305.68 L902.10,304.05 L902.10,302.43 L902.10,300.80 L902.10,299.18 L902.10,297.55 L902.10,295.93 L902.10,294.30 L902.10,292.68 L902.10,291.05 L902.10,289.43 L902.10,287.80 L902.10,286.18 L902.10,284.55 L902.10,282.93 L902.10,281.30 L902.10,279.68 L902.10,278.05 L902.10,276.43 L902.10,274.80 L902.10,273.18 L902.10,271.55 L902.10,269.93 L902.10,268.30 L902.10,266.68 L902.10,265.05 L902.10,263.43 L902.10,261.80 L902.10,260.18 L902.10,258.55 L902.10,256.93 L902.10,255.30 L902.10,253.68 L902.10,252.05 L902.10,250.43 L902.10,248.80 L902.10,247.18 L902.10,245.55 L902.10,243.93 L902.10,242.30 L902.10,240.68 L902.10,239.05 L902.10,237.43 L902.10,235.80 L902.10,234.18 L902.10,232.55 L902.10,230.93 L902.10,229.30 L902.10,227.68 L902.10,226.05 L902.10,224.43 L902.10,222.80 L902.10,221.18 L902.10,219.55 L902.10,217.93 L902.10,216.30 L902.10,214.68 L902.10,213.05 L902.10,211.43 L902.10,209.80 L902.10,208.18 L902.10,206.55 L902.10,204.93 L902.10,203.30 L902.10,201.68 L902.10,200.05 L902.10,198.43 L902.10,196.80 L902.10,195.18 L902.10,193.55 L902.10,191.93 L902.10,190.30 L902.10,188.68 L902.10,187.05 L902.10,185.43 L902.10,183.80 L902.10,182.18 L902.10,180.55 L902.10,178.93 L902.10,177.30 L902.10,175.68 L902.10,174.05 L902.10,172.43 L902.10,170.80 L902.10,169.18 L902.10,167.55 L902.10,165.93 L902.10,164.30 L902.10,162.68 L902.10,161.05 L902.10,159.43 L902.10,157.80 L902.10,156.18 L902.10,154.55 L902.10,152.93 L902.10,151.30 L902.10,149.68 L902.10,148.05 L902.10,146.43 L902.10,144.80 L902.10,143.18 L902.10,141.55 L902.10,139.93 L902.10,138.30 L902.10,136.68 L902.10,135.05 L902.10,133.43 L902.10,131.80 L902.10,130.18 L902.10,128.55 L902.10,126.93 L902.10,125.30 L902.10,123.68 L902.10,122.05 L902.10,120.43 L902.10,118.80 L902.10,117.18 L902.10,115.55 L902.10,113.93 L902.10,112.30 L902.10,110.68 L902.10,109.05 L902.10,107.43 L902.10,105.80 L902.10,104.18 L902.10,102.55 L902.10,100.93 L902.10,99.30 L902.10,97.68 L902.10,96.05 L902.10,94.43 L902.10,92.80 L902.10,91.18 L902.10,89.55 L902.10,87.93 L902.10,86.30 L902.10,84.68 L902.10,83.05 L902.10,81.43 L902.10,79.80 L902.10,78.18 L902.10,76.55 L902.10,74.93 L902.10,73.30 L902.10,71.68 L902.10,70.05 L902.10,68.43 L902.10,66.80 L902.10,65.18 L902.10,63.55 L902.10,61.93 L902.10,60.30 L902.10,58.68 L902.10,57.05 L902.10,55.43 L902.10,53.80 L902.10,52.18 L902.10,50.55 L902.10,48.93 L902.10,47.30 L902.10,45.68 L902.10,44.05 L902.10,42.43 L902.10,40.80 L902.10,39.18 L902.10,37.55 L902.10,35.93 L902.10,34.30 L902.10,32.68 L902.10,31.05 L902.10,29.43 L902.10,27.80" stroke-dashoffset="1.2"/>
<path d="M902.10,612.80 L901.67,611.17 L901.25,609.55 L900.82,607.92 L900.40,606.30 L899.97,604.67 L899.55,603.05 L899.12,601.42 L898.69,599.80 L898.27,598.17 L897.85,596.55 L897.42,594.92 L897.00,593.30 L896.57,591.67 L896.15,590.05 L895.73,588.42 L895.31,586.80 L894.88,585.17 L894.46,583.55 L894.04,581.92 L893.62,580.30 L893.20,578.67 L892.79,577.05 L892.37,575.42 L891.95,573.80 L891.53,572.17 L891.12,570.55 L890.70,568.92 L890.29,567.30 L889.88,565.67 L889.47,564.05 L889.06,562.42 L888.65,560.80 L888.24,559.17 L887.83,557.55 L887.42,555.92 L887.02,554.30 L886.61,552.67 L886.21,551.05 L885.81,549.42 L885.40,547.80 L885.01,546.17 L884.61,544.55 L884.21,542.92 L883.81,541.30 L883.42,539.67 L883.03,538.05 L882.64,536.42 L882.25,534.80 L881.86,533.17 L881.47,531.55 L881.09,529.92 L880.70,528.30 L880.32,526.67 L879.94,525.05 L879.56,523.42 L879.18,521.80 L878.81,520.17 L878.43,518.55 L878.06,516.92 L877.69,515.30 L877.33,513.67 L876.96,512.05 L876.60,510.43 L876.23,508.80 L875.87,507.18 L875.51,505.55 L875.16,503.93 L874.80,502.30 L874.45,500.68 L874.10,499.05 L873.75,497.43 L873.41,495.80 L873.06,494.18 L872.72,492.55 L872.38,490.93 L872.05,489.30 L871.71,487.68 L871.38,486.05 L871.05,484.43 L870.72,482.80 L870.40,481.18 L870.08,479.55 L869.76,477.93 L869.44,476.30 L869.12,474.68 L868.81,473.05 L868.50,471.43 L868.19,469.80 L867.89,468.18 L867.58,466.55 L867.28,464.93 L866.99,463.30 L866.69,461.68 L866.40,460.05 L866.11,458.43 L865.82,456.80 L865.54,455.18 L865.26,453.55 L864.98,451.93 L864.71,450.30 L864.43,448.68 L864.17,447.05 L863.90,445.43 L863.63,443.80 L863.37,442.18 L863.12,440.55 L862.86,438.93 L862.61,437.30 L862.36,435.68 L862.11,434.05 L861.87,432.43 L861.63,430.80 L861.40,429.18 L861.16,427.55 L860.93,425.93 L860.70,424.30 L860.48,422.68 L860.26,421.05 L860.04,419.43 L859.83,417.80 L859.62,416.18 L859.41,414.55 L859.20,412.93 L859.00,411.30 L858.80,409.68 L858.61,408.05 L858.42,406.43 L858.23,404.80 L858.04,403.18 L857.86,401.55 L857.68,399.93 L857.51,398.30 L857.34,396.68 L857.17,395.05 L857.00,393.43 L856.84,391.80 L856.68,390.18 L856.53,388.55 L856.38,386.93 L856.23,385.30 L856.09,383.68 L855.95,382.05 L855.81,380.43 L855.68,378.80 L855.55,377.18 L855.42,375.55 L855.30,373.93 L855.18,372.30 L855.06,370.68 L854.95,369.05 L854.84,367.43 L854.74,365.80 L854.64,364.18 L854.54,362.55 L854.44,360.93 L854.35,359.30 L854.27,357.68 L854.18,356.05 L854.10,354.43 L854.03,352.80 L853.96,351.18 L853.89,349.55 L853.82,347.93 L853.76,346.30 L853.70,344.68 L853.65,343.05 L853.60,341.43 L853.55,339.80 L853.51,338.18 L853.47,336.55 L853.44,334.93 L853.41,333.30 L853.38,331.68 L853.35,330.05 L853.33,328.43 L853.32,326.80 L853.30,325.18 L853.29,323.55 L853.29,321.93 L853.29,320.30 L853.29,318.68 L853.29,317.05 L853.30,315.43 L853.32,313.80 L853.33,312.18 L853.35,310.55 L853.38,308.93 L853.41,307.30 L853.44,305.68 L853.47,304.05 L853.51,302.43 L853.55,300.80 L853.60,299.18 L853.65,297.55 L853.70,295.93 L853.76,294.30 L853.82,292.68 L853.89,291.05 L853.96,289.43 L854.03,287.80 L854.10,286.18 L854.18,284.55 L854.27,282.93 L854.35,281.30 L854.44,279.68 L854.54,278.05 L854.64,276.43 L854.74,274.80 L854.84,273.18 L854.95,271.55 L855.06,269.93 L855.18,268.30 L855.30,266.68 L855.42,265.05 L855.55,263.43 L855.68,261.80 L855.81,260.18 L855.95,258.55 L856.09,256.93 L856.23,255.30 L856.38,253.68 L856.53,252.05 L856.68,250.43 L856.84,248.80 L857.00,247.18 L857.17,245.55 L857.34,243.93 L857.51,242.30 L857.68,240.68 L857.86,239.05 L858.04,237.43 L858.23,235.80 L858.42,234.18 L858.61,232.55 L858.80,230.93 L859.00,229.30 L859.20,227.68 L859.41,226.05 L859.62,224.43 L859.83,222.80 L860.04,221.18 L860.26,219.55 L860.48,217.93 L860.70,216.30 L860.93,214.68 L861.16,213.05 L861.40,211.43 L861.63,209.80 L861.87,208.18 L862.11,206.55 L862.36,204.93 L862.61,203.30 L862.86,201.68 L863.12,200.05 L863.37,198.43 L863.63,196.80 L863.90,195.18 L864.17,193.55 L864.43,191.93 L864.71,190.30 L864.98,188.68 L865.26,187.05 L865.54,185.43 L865.82,183.80 L866.11,182.18 L866.40,180.55 L866.69,178.93 L866.99,177.30 L867.28,175.68 L867.58,174.05 L867.89,172.43 L868.19,170.80 L868.50,169.18 L868.81,167.55 L869.12,165.93 L869.44,164.30 L869.76,162.68 L870.08,161.05 L870.40,159.43 L870.72,157.80 L871.05,156.18 L871.38,154.55 L871.71,152.93 L872.05,151.30 L872.38,149.68 L872.72,148.05 L873.06,146.43 L873.41,144.80 L873.75,143.18 L874.10,141.55 L874.45,139.93 L874.80,138.30 L875.16,136.68 L875.51,135.05 L875.87,133.43 L876.23,131.80 L876.60,130.18 L876.96,128.55 L877.33,126.93 L877.69,125.30 L878.06,123.68 L878.43,122.05 L878.81,120.43 L879.18,118.80 L879.56,117.18 L879.94,115.55 L880.32,113.93 L880.70,112.30 L881.09,110.68 L881.47,109.05 L881.86,107.43 L882.25,105.80 L882.64,104.18 L883.03,102.55 L883.42,100.93 L883.81,99.30 L884.21,97.68 L884.61,96.05 L885.01,94.43 L885.40,92.80 L885.81,91.18 L886.21,89.55 L886.61,87.93 L887.02,86.30 L887.42,84.68 L887.83,83.05 L888.24,81.43 L888.65,79.80 L889.06,78.18 L889.47,76.55 L889.88,74.93 L890.29,73.30 L890.70,71.68 L891.12,70.05 L891.53,68.43 L891.95,66.80 L892.37,65.18 L892.79,63.55 L893.20,61.93 L893.62,60.30 L894.04,58.68 L894.46,57.05 L894.88,55.43 L895.31,53.80 L895.73,52.18 L896.15,50.55 L896.57,48.93 L897.00,47.30 L897.42,45.68 L897.85,44.05 L898.27,42.43 L898.69,40.80 L899.12,39.18 L899.55,37.55 L899.97,35.93 L900.40,34.30 L900.82,32.68 L901.25,31.05 L901.67,29.43 L902.10,27.80" stroke-dashoffset="1.2"/>
<path d="M902.10,612.80 L901.25,611.17 L900.40,609.55 L899.54,607.92 L898.69,606.30 L897.84,604.67 L896.99,603.05 L896.14,601.42 L895.29,599.80 L894.44,598.17 L893.59,596.55 L892.74,594.92 L891.90,593.30 L891.05,591.67 L890.20,590.05 L889.36,588.42 L888.51,586.80 L887.67,585.17 L886.83,583.55 L885.99,581.92 L885.15,580.30 L884.31,578.67 L883.47,577.05 L882.64,575.42 L881.80,573.80 L880.97,572.17 L880.14,570.55 L879.31,568.92 L878.48,567.30 L877.66,565.67 L876.83,564.05 L876.01,562.42 L875.19,560.80 L874.37,559.17 L873.56,557.55 L872.74,555.92 L871.93,554.30 L871.12,552.67 L870.32,551.05 L869.51,549.42 L868.71,547.80 L867.91,546.17 L867.11,544.55 L866.32,542.92 L865.53,541.30 L864.74,539.67 L863.95,538.05 L863.17,536.42 L862.39,534.80 L861.62,533.17 L860.84,531.55 L860.07,529.92 L859.30,528.30 L858.54,526.67 L857.78,525.05 L857.02,523.42 L856.27,521.80 L855.52,520.17 L854.77,518.55 L854.03,516.92 L853.29,515.30 L852.55,513.67 L851.82,512.05 L851.09,510.43 L850.37,508.80 L849.65,507.18 L848.93,505.55 L848.22,503.93 L847.51,502.30 L846.80,500.68 L846.10,499.05 L845.41,497.43 L844.72,495.80 L844.03,494.18 L843.35,492.55 L842.67,490.93 L842.00,489.30 L841.33,487.68 L840.66,486.05 L840.00,484.43 L839.35,482.80 L838.70,481.18 L838.05,479.55 L837.41,477.93 L836.78,476.30 L836.14,474.68 L835.52,473.05 L834.90,471.43 L834.28,469.80 L833.67,468.18 L833.07,466.55 L832.47,464.93 L831.87,463.30 L831.28,461.68 L830.70,460.05 L830.12,458.43 L829.55,456.80 L828.98,455.18 L828.42,453.55 L827.86,451.93 L827.31,450.30 L826.77,448.68 L826.23,447.05 L825.70,445.43 L825.17,443.80 L824.65,442.18 L824.13,440.55 L823.62,438.93 L823.12,437.30 L822.62,435.68 L822.13,434.05 L821.64,432.43 L821.16,430.80 L820.69,429.18 L820.22,427.55 L819.76,425.93 L819.31,424.30 L818.86,422.68 L818.42,421.05 L817.98,419.43 L817.55,417.80 L817.13,416.18 L816.71,414.55 L816.30,412.93 L815.90,411.30 L815.50,409.68 L815.11,408.05 L814.73,406.43 L814.35,404.80 L813.98,403.18 L813.62,401.55 L813.26,399.93 L812.91,398.30 L812.57,396.68 L812.23,395.05 L811.91,393.43 L811.58,391.80 L811.27,390.18 L810.96,388.55 L810.66,386.93 L810.36,385.30 L810.07,383.68 L809.79,382.05 L809.52,380.43 L809.25,378.80 L808.99,377.18 L808.74,375.55 L808.49,373.93 L808.26,372.30 L808.02,370.68 L807.80,369.05 L807.58,367.43 L807.37,365.80 L807.17,364.18 L806.98,362.55 L806.79,360.93 L806.61,359.30 L806.43,357.68 L806.27,356.05 L806.11,354.43 L805.96,352.80 L805.81,351.18 L805.68,349.55 L805.55,347.93 L805.42,346.30 L805.31,344.68 L805.20,343.05 L805.10,341.43 L805.01,339.80 L804.92,338.18 L804.85,336.55 L804.77,334.93 L804.71,333.30 L804.66,331.68 L804.61,330.05 L804.57,328.43 L804.53,326.80 L804.51,325.18 L804.49,323.55 L804.48,321.93 L804.47,320.30 L804.48,318.68 L804.49,317.05 L804.51,315.43 L804.53,313.80 L804.57,312.18 L804.61,310.55 L804.66,308.93 L804.71,307.30 L804.77,305.68 L804.85,304.05 L804.92,302.43 L805.01,300.80 L805.10,299.18 L805.20,297.55 L805.31,295.93 L805.42,294.30 L805.55,292.68 L805.68,291.05 L805.81,289.43 L805.96,287.80 L806.11,286.18 L806.27,284.55 L806.43,282.93 L806.61,281.30 L806.79,279.68 L806.98,278.05 L807.17,276.43 L807.37,274.80 L807.58,273.18 L807.80,271.55 L808.02,269.93 L808.26,268.30 L808.49,266.68 L808.74,265.05 L808.99,263.43 L809.25,261.80 L809.52,260.18 L809.79,258.55 L810.07,256.93 L810.36,255.30 L810.66,253.68 L810.96,252.05 L811.27,250.43 L811.58,248.80 L811.91,247.18 L812.23,245.55 L812.57,243.93 L812.91,242.30 L813.26,240.68 L813.62,239.05 L813.98,237.43 L814.35,235.80 L814.73,234.18 L815.11,232.55 L815.50,230.93 L815.90,229.30 L816.30,227.68 L816.71,226.05 L817.13,224.43 L817.55,222.80 L817.98,221.18 L818.42,219.55 L818.86,217.93 L819.31,216.30 L819.76,214.68 L820.22,213.05 L820.69,211.43 L821.16,209.80 L821.64,208.18 L822.13,206.55 L822.62,204.93 L823.12,203.30 L823.62,201.68 L824.13,200.05 L824.65,198.43 L825.17,196.80 L825.70,195.18 L826.23,193.55 L826.77,191.93 L827.31,190.30 L827.86,188.68 L828.42,187.05 L828.98,185.43 L829.55,183.80 L830.12,182.18 L830.70,180.55 L831.28,178.93 L831.87,177.30 L832.47,175.68 L833.07,174.05 L833.67,172.43 L834.28,170.80 L834.90,169.18 L835.52,167.55 L836.14,165.93 L836.78,164.30 L837.41,162.68 L838.05,161.05 L838.70,159.43 L839.35,157.80 L840.00,156.18 L840.66,154.55 L841.33,152.93 L842.00,151.30 L842.67,149.68 L843.35,148.05 L844.03,146.43 L844.72,144.80 L845.41,143.18 L846.10,141.55 L846.80,139.93 L847.51,138.30 L848.22,136.68 L848.93,135.05 L849.65,133.43 L850.37,131.80 L851.09,130.18 L851.82,128.55 L852.55,126.93 L853.29,125.30 L854.03,123.68 L854.77,122.05 L855.52,120.43 L856.27,118.80 L857.02,117.18 L857.78,115.55 L858.54,113.93 L859.30,112.30 L860.07,110.68 L860.84,109.05 L861.62,107.43 L862.39,105.80 L863.17,104.18 L863.95,102.55 L864.74,100.93 L865.53,99.30 L866.32,97.68 L867.11,96.05 L867.91,94.43 L868.71,92.80 L869.51,91.18 L870.32,89.55 L871.12,87.93 L871.93,86.30 L872.74,84.68 L873.56,83.05 L874.37,81.43 L875.19,79.80 L876.01,78.18 L876.83,76.55 L877.66,74.93 L878.48,73.30 L879.31,71.68 L880.14,70.05 L880.97,68.43 L881.80,66.80 L882.64,65.18 L883.47,63.55 L884.31,61.93 L885.15,60.30 L885.99,58.68 L886.83,57.05 L887.67,55.43 L888.51,53.80 L889.36,52.18 L890.20,50.55 L891.05,48.93 L891.90,47.30 L892.74,45.68 L893.59,44.05 L894.44,42.43 L895.29,40.80 L896.14,39.18 L896.99,37.55 L897.84,35.93 L898.69,34.30 L899.54,32.68 L900.40,31.05 L901.25,29.43 L902.10,27.80" stroke-dashoffset="1.2"/>
<path d="M902.10,612.80 L900.82,611.17 L899.54,609.55 L898.27,607.92 L896.99,606.30 L895.71,604.67 L894.44,603.05 L893.16,601.42 L891.88,599.80 L890.61,598.17 L889.34,596.55 L888.06,594.92 L886.79,593.30 L885.52,591.67 L884.25,590.05 L882.99,588.42 L881.72,586.80 L880.45,585.17 L879.19,583.55 L877.93,581.92 L876.67,580.30 L875.41,578.67 L874.16,577.05 L872.90,575.42 L871.65,573.80 L870.40,572.17 L869.16,570.55 L867.91,568.92 L866.67,567.30 L865.43,565.67 L864.20,564.05 L862.97,562.42 L861.74,560.80 L860.51,559.17 L859.29,557.55 L858.06,555.92 L856.85,554.30 L855.63,552.67 L854.42,551.05 L853.22,549.42 L852.01,547.80 L850.82,546.17 L849.62,544.55 L848.43,542.92 L847.24,541.30 L846.06,539.67 L844.88,538.05 L843.71,536.42 L842.54,534.80 L841.37,533.17 L840.21,531.55 L839.06,529.92 L837.91,528.30 L836.76,526.67 L835.62,525.05 L834.48,523.42 L833.35,521.80 L832.23,520.17 L831.10,518.55 L829.99,516.92 L828.88,515.30 L827.78,513.67 L826.68,512.05 L825.59,510.43 L824.50,508.80 L823.42,507.18 L822.34,505.55 L821.27,503.93 L820.21,502.30 L819.16,500.68 L818.11,499.05 L817.06,497.43 L816.03,495.80 L814.99,494.18 L813.97,492.55 L812.95,490.93 L811.94,489.30 L810.94,487.68 L809.94,486.05 L808.95,484.43 L807.97,482.80 L807.00,481.18 L806.03,479.55 L805.07,477.93 L804.11,476.30 L803.17,474.68 L802.23,473.05 L801.30,471.43 L800.37,469.80 L799.46,468.18 L798.55,466.55 L797.65,464.93 L796.76,463.30 L795.88,461.68 L795.00,460.05 L794.13,458.43 L793.27,456.80 L792.42,455.18 L791.58,453.55 L790.75,451.93 L789.92,450.30 L789.10,448.68 L788.30,447.05 L787.50,445.43 L786.70,443.80 L785.92,442.18 L785.15,440.55 L784.38,438.93 L783.63,437.30 L782.88,435.68 L782.14,434.05 L781.42,432.43 L780.70,430.80 L779.99,429.18 L779.29,427.55 L778.59,425.93 L777.91,424.30 L777.24,422.68 L776.58,421.05 L775.92,419.43 L775.28,417.80 L774.65,416.18 L774.02,414.55 L773.41,412.93 L772.80,411.30 L772.21,409.68 L771.62,408.05 L771.05,406.43 L770.48,404.80 L769.93,403.18 L769.38,401.55 L768.85,399.93 L768.32,398.30 L767.81,396.68 L767.30,395.05 L766.81,393.43 L766.32,391.80 L765.85,390.18 L765.39,388.55 L764.93,386.93 L764.49,385.30 L764.06,383.68 L763.64,382.05 L763.23,380.43 L762.83,378.80 L762.44,377.18 L762.06,375.55 L761.69,373.93 L761.33,372.30 L760.99,370.68 L760.65,369.05 L760.33,367.43 L760.01,365.80 L759.71,364.18 L759.41,362.55 L759.13,360.93 L758.86,359.30 L758.60,357.68 L758.35,356.05 L758.11,354.43 L757.89,352.80 L757.67,351.18 L757.46,349.55 L757.27,347.93 L757.09,346.30 L756.91,344.68 L756.75,343.05 L756.60,341.43 L756.46,339.80 L756.34,338.18 L756.22,336.55 L756.11,334.93 L756.02,333.30 L755.93,331.68 L755.86,330.05 L755.80,328.43 L755.75,326.80 L755.71,325.18 L755.68,323.55 L755.67,321.93 L755.66,320.30 L755.67,318.68 L755.68,317.05 L755.71,315.43 L755.75,313.80 L755.80,312.18 L755.86,310.55 L755.93,308.93 L756.02,307.30 L756.11,305.68 L756.22,304.05 L756.34,302.43 L756.46,300.80 L756.60,299.18 L756.75,297.55 L756.91,295.93 L757.09,294.30 L757.27,292.68 L757.46,291.05 L757.67,289.43 L757.89,287.80 L758.11,286.18 L758.35,284.55 L758.60,282.93 L758.86,281.30 L759.13,279.68 L759.41,278.05 L759.71,276.43 L760.01,274.80 L760.33,273.18 L760.65,271.55 L760.99,269.93 L761.33,268.30 L761.69,266.68 L762.06,265.05 L762.44,263.43 L762.83,261.80 L763.23,260.18 L763.64,258.55 L764.06,256.93 L764.49,255.30 L764.93,253.68 L765.39,252.05 L765.85,250.43 L766.32,248.80 L766.81,247.18 L767.30,245.55 L767.81,243.93 L768.32,242.30 L768.85,240.68 L769.38,239.05 L769.93,237.43 L770.48,235.80 L771.05,234.18 L771.62,232.55 L772.21,230.93 L772.80,229.30 L773.41,227.68 L774.02,226.05 L774.65,224.43 L775.28,222.80 L775.92,221.18 L776.58,219.55 L777.24,217.93 L777.91,216.30 L778.59,214.68 L779.29,213.05 L779.99,211.43 L780.70,209.80 L781.42,208.18 L782.14,206.55 L782.88,204.93 L783.63,203.30 L784.38,201.68 L785.15,200.05 L785.92,198.43 L786.70,196.80 L787.50,195.18 L788.30,193.55 L789.10,191.93 L789.92,190.30 L790.75,188.68 L791.58,187.05 L792.42,185.43 L793.27,183.80 L794.13,182.18 L795.00,180.55 L795.88,178.93 L796.76,177.30 L797.65,175.68 L798.55,174.05 L799.46,172.43 L800.37,170.80 L801.30,169.18 L802.23,167.55 L803.17,165.93 L804.11,164.30 L805.07,162.68 L806.03,161.05 L807.00,159.43 L807.97,157.80 L808.95,156.18 L809.94,154.55 L810.94,152.93 L811.94,151.30 L812.95,149.68 L813.97,148.05 L814.99,146.43 L816.03,144.80 L817.06,143.18 L818.11,141.55 L819.16,139.93 L820.21,138.30 L821.27,136.68 L822.34,135.05 L823.42,133.43 L824.50,131.80 L825.59,130.18 L826.68,128.55 L827.78,126.93 L828.88,125.30 L829.99,123.68 L831.10,122.05 L832.23,120.43 L833.35,118.80 L834.48,117.18 L835.62,115.55 L836.76,113.93 L837.91,112.30 L839.06,110.68 L840.21,109.05 L841.37,107.43 L842.54,105.80 L843.71,104.18 L844.88,102.55 L846.06,100.93 L847.24,99.30 L848.43,97.68 L849.62,96.05 L850.82,94.43 L852.01,92.80 L853.22,91.18 L854.42,89.55 L855.63,87.93 L856.85,86.30 L858.06,84.68 L859.29,83.05 L860.51,81.43 L861.74,79.80 L862.97,78.18 L864.20,76.55 L865.43,74.93 L866.67,73.30 L867.91,71.68 L869.16,70.05 L870.40,68.43 L871.65,66.80 L872.90,65.18 L874.16,63.55 L875.41,61.93 L876.67,60.30 L877.93,58.68 L879.19,57.05 L880.45,55.43 L881.72,53.80 L882.99,52.18 L884.25,50.55 L885.52,48.93 L886.79,47.30 L888.06,45.68 L889.34,44.05 L890.61,42.43 L891.88,40.80 L893.16,39.18 L894.44,37.55 L895.71,35.93 L896.99,34.30 L898.27,32.68 L899.54,31.05 L900.82,29.43 L902.10,27.80" stroke-dashoffset="1.2"/>
<path d="M902.10,612.80 L900.40,611.17 L898.69,609.55 L896.99,607.92 L895.29,606.30 L893.58,604.67 L891.88,603.05 L890.18,601.42 L888.48,599.80 L886.78,598.17 L885.08,596.55 L883.39,594.92 L881.69,593.30 L880.00,591.67 L878.30,590.05 L876.61,588.42 L874.93,586.80 L873.24,585.17 L871.56,583.55 L869.87,581.92 L868.19,580.30 L866.52,578.67 L864.84,577.05 L863.17,575.42 L861.50,573.80 L859.84,572.17 L858.18,570.55 L856.52,568.92 L854.86,567.30 L853.21,565.67 L851.57,564.05 L849.92,562.42 L848.28,560.80 L846.65,559.17 L845.01,557.55 L843.39,555.92 L841.76,554.30 L840.15,552.67 L838.53,551.05 L836.92,549.42 L835.32,547.80 L833.72,546.17 L832.13,544.55 L830.54,542.92 L828.96,541.30 L827.38,539.67 L825.81,538.05 L824.24,536.42 L822.68,534.80 L821.13,533.17 L819.58,531.55 L818.04,529.92 L816.51,528.30 L814.98,526.67 L813.46,525.05 L811.94,523.42 L810.43,521.80 L808.93,520.17 L807.44,518.55 L805.95,516.92 L804.47,515.30 L803.00,513.67 L801.54,512.05 L800.08,510.43 L798.63,508.80 L797.19,507.18 L795.76,505.55 L794.33,503.93 L792.92,502.30 L791.51,500.68 L790.11,499.05 L788.72,497.43 L787.33,495.80 L785.96,494.18 L784.59,492.55 L783.24,490.93 L781.89,489.30 L780.55,487.68 L779.22,486.05 L777.90,484.43 L776.59,482.80 L775.29,481.18 L774.00,479.55 L772.72,477.93 L771.45,476.30 L770.19,474.68 L768.94,473.05 L767.70,471.43 L766.47,469.80 L765.25,468.18 L764.04,466.55 L762.84,464.93 L761.65,463.30 L760.47,461.68 L759.30,460.05 L758.15,458.43 L757.00,456.80 L755.86,455.18 L754.74,453.55 L753.63,451.93 L752.53,450.30 L751.44,448.68 L750.36,447.05 L749.29,445.43 L748.24,443.80 L747.20,442.18 L746.16,440.55 L745.15,438.93 L744.14,437.30 L743.14,435.68 L742.16,434.05 L741.19,432.43 L740.23,430.80 L739.28,429.18 L738.35,427.55 L737.43,425.93 L736.52,424.30 L735.62,422.68 L734.74,421.05 L733.87,419.43 L733.01,417.80 L732.16,416.18 L731.33,414.55 L730.51,412.93 L729.70,411.30 L728.91,409.68 L728.13,408.05 L727.36,406.43 L726.61,404.80 L725.87,403.18 L725.14,401.55 L724.43,399.93 L723.73,398.30 L723.04,396.68 L722.37,395.05 L721.71,393.43 L721.07,391.80 L720.43,390.18 L719.82,388.55 L719.21,386.93 L718.62,385.30 L718.05,383.68 L717.49,382.05 L716.94,380.43 L716.40,378.80 L715.88,377.18 L715.38,375.55 L714.89,373.93 L714.41,372.30 L713.95,370.68 L713.50,369.05 L713.07,367.43 L712.65,365.80 L712.24,364.18 L711.85,362.55 L711.48,360.93 L711.11,359.30 L710.77,357.68 L710.44,356.05 L710.12,354.43 L709.81,352.80 L709.53,351.18 L709.25,349.55 L708.99,347.93 L708.75,346.30 L708.52,344.68 L708.30,343.05 L708.10,341.43 L707.92,339.80 L707.75,338.18 L707.59,336.55 L707.45,334.93 L707.32,333.30 L707.21,331.68 L707.12,330.05 L707.03,328.43 L706.97,326.80 L706.91,325.18 L706.88,323.55 L706.86,321.93 L706.85,320.30 L706.86,318.68 L706.88,317.05 L706.91,315.43 L706.97,313.80 L707.03,312.18 L707.12,310.55 L707.21,308.93 L707.32,307.30 L707.45,305.68 L707.59,304.05 L707.75,302.43 L707.92,300.80 L708.10,299.18 L708.30,297.55 L708.52,295.93 L708.75,294.30 L708.99,292.68 L709.25,291.05 L709.53,289.43 L709.81,287.80 L710.12,286.18 L710.44,284.55 L710.77,282.93 L711.11,281.30 L711.48,279.68 L711.85,278.05 L712.24,276.43 L712.65,274.80 L713.07,273.18 L713.50,271.55 L713.95,269.93 L714.41,268.30 L714.89,266.68 L715.38,265.05 L715.88,263.43 L716.40,261.80 L716.94,260.18 L717.49,258.55 L718.05,256.93 L718.62,255.30 L719.21,253.68 L719.82,252.05 L720.43,250.43 L721.07,248.80 L721.71,247.18 L722.37,245.55 L723.04,243.93 L723.73,242.30 L724.43,240.68 L725.14,239.05 L725.87,237.43 L726.61,235.80 L727.36,234.18 L728.13,232.55 L728.91,230.93 L729.70,229.30 L730.51,227.68 L731.33,226.05 L732.16,224.43 L733.01,222.80 L733.87,221.18 L734.74,219.55 L735.62,217.93 L736.52,216.30 L737.43,214.68 L738.35,213.05 L739.28,211.43 L740.23,209.80 L741.19,208.18 L742.16,206.55 L743.14,204.93 L744.14,203.30 L745.15,201.68 L746.16,200.05 L747.20,198.43 L748.24,196.80 L749.29,195.18 L750.36,193.55 L751.44,191.93 L752.53,190.30 L753.63,188.68 L754.74,187.05 L755.86,185.43 L757.00,183.80 L758.15,182.18 L759.30,180.55 L760.47,178.93 L761.65,177.30 L762.84,175.68 L764.04,174.05 L765.25,172.43 L766.47,170.80 L767.70,169.18 L768.94,167.55 L770.19,165.93 L771.45,164.30 L772.72,162.68 L774.00,161.05 L775.29,159.43 L776.59,157.80 L777.90,156.18 L779.22,154.55 L780.55,152.93 L781.89,151.30 L783.24,149.68 L784.59,148.05 L785.96,146.43 L787.33,144.80 L788.72,143.18 L790.11,141.55 L791.51,139.93 L792.92,138.30 L794.33,136.68 L795.76,135.05 L797.19,133.43 L798.63,131.80 L800.08,130.18 L801.54,128.55 L803.00,126.93 L804.47,125.30 L805.95,123.68 L807.44,122.05 L808.93,120.43 L810.43,118.80 L811.94,117.18 L813.46,115.55 L814.98,113.93 L816.51,112.30 L818.04,110.68 L819.58,109.05 L821.13,107.43 L822.68,105.80 L824.24,104.18 L825.81,102.55 L827.38,100.93 L828.96,99.30 L830.54,97.68 L832.13,96.05 L833.72,94.43 L835.32,92.80 L836.92,91.18 L838.53,89.55 L840.15,87.93 L841.76,86.30 L843.39,84.68 L845.01,83.05 L846.65,81.43 L848.28,79.80 L849.92,78.18 L851.57,76.55 L853.21,74.93 L854.86,73.30 L856.52,71.68 L858.18,70.05 L859.84,68.43 L861.50,66.80 L863.17,65.18 L864.84,63.55 L866.52,61.93 L868.19,60.30 L869.87,58.68 L871.56,57.05 L873.24,55.43 L874.93,53.80 L876.61,52.18 L878.30,50.55 L880.00,48.93 L881.69,47.30 L883.39,45.68 L885.08,44.05 L886.78,42.43 L888.48,40.80 L890.18,39.18 L891.88,37.55 L893.58,35.93 L895.29,34.30 L896.99,32.68 L898.69,31.05 L900.40,29.43 L902.10,27.80" stroke-dashoffset="1.2"/>
<path d="M902.10,612.80 L899.97,611.17 L897.84,609.55 L895.71,607.92 L893.58,606.30 L891.45,604.67 L889.33,603.05 L887.20,601.42 L885.07,599.80 L882.95,598.17 L880.83,596.55 L878.71,594.92 L876.59,593.30 L874.47,591.67 L872.36,590.05 L870.24,588.42 L868.13,586.80 L866.02,585.17 L863.92,583.55 L861.82,581.92 L859.72,580.30 L857.62,578.67 L855.53,577.05 L853.44,575.42 L851.36,573.80 L849.27,572.17 L847.20,570.55 L845.12,568.92 L843.06,567.30 L840.99,565.67 L838.93,564.05 L836.88,562.42 L834.83,560.80 L832.78,559.17 L830.74,557.55 L828.71,555.92 L826.68,554.30 L824.66,552.67 L822.64,551.05 L820.63,549.42 L818.62,547.80 L816.63,546.17 L814.63,544.55 L812.65,542.92 L810.67,541.30 L808.70,539.67 L806.74,538.05 L804.78,536.42 L802.83,534.80 L800.89,533.17 L798.95,531.55 L797.03,529.92 L795.11,528.30 L793.20,526.67 L791.30,525.05 L789.40,523.42 L787.52,521.80 L785.64,520.17 L783.77,518.55 L781.92,516.92 L780.07,515.30 L778.23,513.67 L776.40,512.05 L774.58,510.43 L772.77,508.80 L770.96,507.18 L769.17,505.55 L767.39,503.93 L765.62,502.30 L763.86,500.68 L762.11,499.05 L760.37,497.43 L758.64,495.80 L756.92,494.18 L755.22,492.55 L753.52,490.93 L751.84,489.30 L750.17,487.68 L748.50,486.05 L746.86,484.43 L745.22,482.80 L743.59,481.18 L741.98,479.55 L740.38,477.93 L738.79,476.30 L737.21,474.68 L735.65,473.05 L734.10,471.43 L732.56,469.80 L731.03,468.18 L729.52,466.55 L728.02,464.93 L726.53,463.30 L725.06,461.68 L723.60,460.05 L722.16,458.43 L720.72,456.80 L719.31,455.18 L717.90,453.55 L716.51,451.93 L715.14,450.30 L713.77,448.68 L712.43,447.05 L711.09,445.43 L709.77,443.80 L708.47,442.18 L707.18,440.55 L705.91,438.93 L704.65,437.30 L703.40,435.68 L702.17,434.05 L700.96,432.43 L699.76,430.80 L698.58,429.18 L697.41,427.55 L696.26,425.93 L695.12,424.30 L694.00,422.68 L692.90,421.05 L691.81,419.43 L690.73,417.80 L689.68,416.18 L688.64,414.55 L687.61,412.93 L686.60,411.30 L685.61,409.68 L684.64,408.05 L683.68,406.43 L682.74,404.80 L681.81,403.18 L680.90,401.55 L680.01,399.93 L679.14,398.30 L678.28,396.68 L677.44,395.05 L676.61,393.43 L675.81,391.80 L675.02,390.18 L674.25,388.55 L673.49,386.93 L672.75,385.30 L672.03,383.68 L671.33,382.05 L670.65,380.43 L669.98,378.80 L669.33,377.18 L668.70,375.55 L668.09,373.93 L667.49,372.30 L666.91,370.68 L666.35,369.05 L665.81,367.43 L665.28,365.80 L664.78,364.18 L664.29,362.55 L663.82,360.93 L663.37,359.30 L662.93,357.68 L662.52,356.05 L662.12,354.43 L661.74,352.80 L661.38,351.18 L661.04,349.55 L660.72,347.93 L660.41,346.30 L660.12,344.68 L659.85,343.05 L659.60,341.43 L659.37,339.80 L659.16,338.18 L658.96,336.55 L658.79,334.93 L658.63,333.30 L658.49,331.68 L658.37,330.05 L658.27,328.43 L658.18,326.80 L658.12,325.18 L658.07,323.55 L658.04,321.93 L658.04,320.30 L658.04,318.68 L658.07,317.05 L658.12,315.43 L658.18,313.80 L658.27,312.18 L658.37,310.55 L658.49,308.93 L658.63,307.30 L658.79,305.68 L658.96,304.05 L659.16,302.43 L659.37,300.80 L659.60,299.18 L659.85,297.55 L660.12,295.93 L660.41,294.30 L660.72,292.68 L661.04,291.05 L661.38,289.43 L661.74,287.80 L662.12,286.18 L662.52,284.55 L662.93,282.93 L663.37,281.30 L663.82,279.68 L664.29,278.05 L664.78,276.43 L665.28,274.80 L665.81,273.18 L666.35,271.55 L666.91,269.93 L667.49,268.30 L668.09,266.68 L668.70,265.05 L669.33,263.43 L669.98,261.80 L670.65,260.18 L671.33,258.55 L672.03,256.93 L672.75,255.30 L673.49,253.68 L674.25,252.05 L675.02,250.43 L675.81,248.80 L676.61,247.18 L677.44,245.55 L678.28,243.93 L679.14,242.30 L680.01,240.68 L680.90,239.05 L681.81,237.43 L682.74,235.80 L683.68,234.18 L684.64,232.55 L685.61,230.93 L686.60,229.30 L687.61,227.68 L688.64,226.05 L689.68,224.43 L690.73,222.80 L691.81,221.18 L692.90,219.55 L694.00,217.93 L695.12,216.30 L696.26,214.68 L697.41,213.05 L698.58,211.43 L699.76,209.80 L700.96,208.18 L702.17,206.55 L703.40,204.93 L704.65,203.30 L705.91,201.68 L707.18,200.05 L708.47,198.43 L709.77,196.80 L711.09,195.18 L712.43,193.55 L713.77,191.93 L715.14,190.30 L716.51,188.68 L717.90,187.05 L719.31,185.43 L720.72,183.80 L722.16,182.18 L723.60,180.55 L725.06,178.93 L726.53,177.30 L728.02,175.68 L729.52,174.05 L731.03,172.43 L732.56,170.80 L734.10,169.18 L735.65,167.55 L737.21,165.93 L738.79,164.30 L740.38,162.68 L741.98,161.05 L743.59,159.43 L745.22,157.80 L746.86,156.18 L748.50,154.55 L750.17,152.93 L751.84,151.30 L753.52,149.68 L755.22,148.05 L756.92,146.43 L758.64,144.80 L760.37,143.18 L762.11,141.55 L763.86,139.93 L765.62,138.30 L767.39,136.68 L769.17,135.05 L770.96,133.43 L772.77,131.80 L774.58,130.18 L776.40,128.55 L778.23,126.93 L780.07,125.30 L781.92,123.68 L783.77,122.05 L785.64,120.43 L787.52,118.80 L789.40,117.18 L791.30,115.55 L793.20,113.93 L795.11,112.30 L797.03,110.68 L798.95,109.05 L800.89,107.43 L802.83,105.80 L804.78,104.18 L806.74,102.55 L808.70,100.93 L810.67,99.30 L812.65,97.68 L814.63,96.05 L816.63,94.43 L818.62,92.80 L820.63,91.18 L822.64,89.55 L824.66,87.93 L826.68,86.30 L828.71,84.68 L830.74,83.05 L832.78,81.43 L834.83,79.80 L836.88,78.18 L838.93,76.55 L840.99,74.93 L843.06,73.30 L845.12,71.68 L847.20,70.05 L849.27,68.43 L851.36,66.80 L853.44,65.18 L855.53,63.55 L857.62,61.93 L859.72,60.30 L861.82,58.68 L863.92,57.05 L866.02,55.43 L868.13,53.80 L870.24,52.18 L872.36,50.55 L874.47,48.93 L876.59,47.30 L878.71,45.68 L880.83,44.05 L882.95,42.43 L885.07,40.80 L887.20,39.18 L889.33,37.55 L891.45,35.93 L893.58,34.30 L895.71,32.68 L897.84,31.05 L899.97,29.43 L902.10,27.80" stroke-dashoffset="1.2"/>
<path d="M902.10,612.80 L899.54,611.17 L896.99,609.55 L894.43,607.92 L891.88,606.30 L889.32,604.67 L886.77,603.05 L884.22,601.42 L881.67,599.80 L879.12,598.17 L876.57,596.55 L874.03,594.92 L871.49,593.30 L868.95,591.67 L866.41,590.05 L863.87,588.42 L861.34,586.80 L858.81,585.17 L856.28,583.55 L853.76,581.92 L851.24,580.30 L848.73,578.67 L846.22,577.05 L843.71,575.42 L841.21,573.80 L838.71,572.17 L836.22,570.55 L833.73,568.92 L831.25,567.30 L828.77,565.67 L826.30,564.05 L823.83,562.42 L821.37,560.80 L818.92,559.17 L816.47,557.55 L814.03,555.92 L811.60,554.30 L809.17,552.67 L806.75,551.05 L804.34,549.42 L801.93,547.80 L799.53,546.17 L797.14,544.55 L794.76,542.92 L792.39,541.30 L790.02,539.67 L787.66,538.05 L785.32,536.42 L782.98,534.80 L780.65,533.17 L778.32,531.55 L776.01,529.92 L773.71,528.30 L771.42,526.67 L769.14,525.05 L766.86,523.42 L764.60,521.80 L762.35,520.17 L760.11,518.55 L757.88,516.92 L755.66,515.30 L753.45,513.67 L751.26,512.05 L749.07,510.43 L746.90,508.80 L744.74,507.18 L742.59,505.55 L740.45,503.93 L738.32,502.30 L736.21,500.68 L734.11,499.05 L732.02,497.43 L729.95,495.80 L727.89,494.18 L725.84,492.55 L723.81,490.93 L721.79,489.30 L719.78,487.68 L717.79,486.05 L715.81,484.43 L713.84,482.80 L711.89,481.18 L709.95,479.55 L708.03,477.93 L706.13,476.30 L704.23,474.68 L702.36,473.05 L700.50,471.43 L698.65,469.80 L696.82,468.18 L695.00,466.55 L693.20,464.93 L691.42,463.30 L689.65,461.68 L687.90,460.05 L686.17,458.43 L684.45,456.80 L682.75,455.18 L681.06,453.55 L679.39,451.93 L677.74,450.30 L676.11,448.68 L674.49,447.05 L672.89,445.43 L671.31,443.80 L669.74,442.18 L668.20,440.55 L666.67,438.93 L665.16,437.30 L663.66,435.68 L662.19,434.05 L660.73,432.43 L659.29,430.80 L657.87,429.18 L656.47,427.55 L655.09,425.93 L653.73,424.30 L652.38,422.68 L651.05,421.05 L649.75,419.43 L648.46,417.80 L647.19,416.18 L645.94,414.55 L644.71,412.93 L643.50,411.30 L642.31,409.68 L641.14,408.05 L639.99,406.43 L638.86,404.80 L637.75,403.18 L636.66,401.55 L635.59,399.93 L634.54,398.30 L633.51,396.68 L632.50,395.05 L631.52,393.43 L630.55,391.80 L629.60,390.18 L628.67,388.55 L627.77,386.93 L626.88,385.30 L626.02,383.68 L625.18,382.05 L624.36,380.43 L623.56,378.80 L622.78,377.18 L622.02,375.55 L621.28,373.93 L620.57,372.30 L619.87,370.68 L619.20,369.05 L618.55,367.43 L617.92,365.80 L617.31,364.18 L616.73,362.55 L616.16,360.93 L615.62,359.30 L615.10,357.68 L614.60,356.05 L614.13,354.43 L613.67,352.80 L613.24,351.18 L612.83,349.55 L612.44,347.93 L612.07,346.30 L611.73,344.68 L611.41,343.05 L611.10,341.43 L610.83,339.80 L610.57,338.18 L610.34,336.55 L610.12,334.93 L609.94,333.30 L609.77,331.68 L609.62,330.05 L609.50,328.43 L609.40,326.80 L609.32,325.18 L609.27,323.55 L609.23,321.93 L609.22,320.30 L609.23,318.68 L609.27,317.05 L609.32,315.43 L609.40,313.80 L609.50,312.18 L609.62,310.55 L609.77,308.93 L609.94,307.30 L610.12,305.68 L610.34,304.05 L610.57,302.43 L610.83,300.80 L611.10,299.18 L611.41,297.55 L611.73,295.93 L612.07,294.30 L612.44,292.68 L612.83,291.05 L613.24,289.43 L613.67,287.80 L614.13,286.18 L614.60,284.55 L615.10,282.93 L615.62,281.30 L616.16,279.68 L616.73,278.05 L617.31,276.43 L617.92,274.80 L618.55,273.18 L619.20,271.55 L619.87,269.93 L620.57,268.30 L621.28,266.68 L622.02,265.05 L622.78,263.43 L623.56,261.80 L624.36,260.18 L625.18,258.55 L626.02,256.93 L626.88,255.30 L627.77,253.68 L628.67,252.05 L629.60,250.43 L630.55,248.80 L631.52,247.18 L632.50,245.55 L633.51,243.93 L634.54,242.30 L635.59,240.68 L636.66,239.05 L637.75,237.43 L638.86,235.80 L639.99,234.18 L641.14,232.55 L642.31,230.93 L643.50,229.30 L644.71,227.68 L645.94,226.05 L647.19,224.43 L648.46,222.80 L649.75,221.18 L651.05,219.55 L652.38,217.93 L653.73,216.30 L655.09,214.68 L656.47,213.05 L657.87,211.43 L659.29,209.80 L660.73,208.18 L662.19,206.55 L663.66,204.93 L665.16,203.30 L666.67,201.68 L668.20,200.05 L669.74,198.43 L671.31,196.80 L672.89,195.18 L674.49,193.55 L676.11,191.93 L677.74,190.30 L679.39,188.68 L681.06,187.05 L682.75,185.43 L684.45,183.80 L686.17,182.18 L687.90,180.55 L689.65,178.93 L691.42,177.30 L693.20,175.68 L695.00,174.05 L696.82,172.43 L698.65,170.80 L700.50,169.18 L702.36,167.55 L704.23,165.93 L706.13,164.30 L708.03,162.68 L709.95,161.05 L711.89,159.43 L713.84,157.80 L715.81,156.18 L717.79,154.55 L719.78,152.93 L721.79,151.30 L723.81,149.68 L725.84,148.05 L727.89,146.43 L729.95,144.80 L732.02,143.18 L734.11,141.55 L736.21,139.93 L738.32,138.30 L740.45,136.68 L742.59,135.05 L744.74,133.43 L746.90,131.80 L749.07,130.18 L751.26,128.55 L753.45,126.93 L755.66,125.30 L757.88,123.68 L760.11,122.05 L762.35,120.43 L764.60,118.80 L766.86,117.18 L769.14,115.55 L771.42,113.93 L773.71,112.30 L776.01,110.68 L778.32,109.05 L780.65,107.43 L782.98,105.80 L785.32,104.18 L787.66,102.55 L790.02,100.93 L792.39,99.30 L794.76,97.68 L797.14,96.05 L799.53,94.43 L801.93,92.80 L804.34,91.18 L806.75,89.55 L809.17,87.93 L811.60,86.30 L814.03,84.68 L816.47,83.05 L818.92,81.43 L821.37,79.80 L823.83,78.18 L826.30,76.55 L828.77,74.93 L831.25,73.30 L833.73,71.68 L836.22,70.05 L838.71,68.43 L841.21,66.80 L843.71,65.18 L846.22,63.55 L848.73,61.93 L851.24,60.30 L853.76,58.68 L856.28,57.05 L858.81,55.43 L861.34,53.80 L863.87,52.18 L866.41,50.55 L868.95,48.93 L871.49,47.30 L874.03,45.68 L876.57,44.05 L879.12,42.43 L881.67,40.80 L884.22,39.18 L886.77,37.55 L889.32,35.93 L891.88,34.30 L894.43,32.68 L896.99,31.05 L899.54,29.43 L902.10,27.80" stroke-dashoffset="1.2"/>
<path d="M902.10,612.80 L899.12,611.17 L896.14,609.55 L893.16,607.92 L890.18,606.30 L887.20,604.67 L884.22,603.05 L881.24,601.42 L878.26,599.80 L875.29,598.17 L872.32,596.55 L869.35,594.92 L866.38,593.30 L863.42,591.67 L860.46,590.05 L857.50,588.42 L854.55,586.80 L851.59,585.17 L848.65,583.55 L845.70,581.92 L842.77,580.30 L839.83,578.67 L836.90,577.05 L833.98,575.42 L831.06,573.80 L828.14,572.17 L825.24,570.55 L822.33,568.92 L819.44,567.30 L816.55,565.67 L813.66,564.05 L810.79,562.42 L807.92,560.80 L805.05,559.17 L802.20,557.55 L799.35,555.92 L796.51,554.30 L793.68,552.67 L790.86,551.05 L788.04,549.42 L785.23,547.80 L782.44,546.17 L779.65,544.55 L776.87,542.92 L774.10,541.30 L771.34,539.67 L768.59,538.05 L765.85,536.42 L763.12,534.80 L760.40,533.17 L757.70,531.55 L755.00,529.92 L752.31,528.30 L749.64,526.67 L746.98,525.05 L744.32,523.42 L741.69,521.80 L739.06,520.17 L736.44,518.55 L733.84,516.92 L731.25,515.30 L728.68,513.67 L726.12,512.05 L723.57,510.43 L721.03,508.80 L718.51,507.18 L716.00,505.55 L713.51,503.93 L711.03,502.30 L708.56,500.68 L706.11,499.05 L703.68,497.43 L701.26,495.80 L698.85,494.18 L696.47,492.55 L694.09,490.93 L691.73,489.30 L689.39,487.68 L687.07,486.05 L684.76,484.43 L682.47,482.80 L680.19,481.18 L677.93,479.55 L675.69,477.93 L673.46,476.30 L671.26,474.68 L669.07,473.05 L666.90,471.43 L664.74,469.80 L662.61,468.18 L660.49,466.55 L658.39,464.93 L656.31,463.30 L654.25,461.68 L652.20,460.05 L650.18,458.43 L648.17,456.80 L646.19,455.18 L644.22,453.55 L642.28,451.93 L640.35,450.30 L638.44,448.68 L636.56,447.05 L634.69,445.43 L632.84,443.80 L631.02,442.18 L629.21,440.55 L627.43,438.93 L625.67,437.30 L623.92,435.68 L622.20,434.05 L620.50,432.43 L618.83,430.80 L617.17,429.18 L615.53,427.55 L613.92,425.93 L612.33,424.30 L610.76,422.68 L609.21,421.05 L607.69,419.43 L606.19,417.80 L604.71,416.18 L603.25,414.55 L601.82,412.93 L600.40,411.30 L599.02,409.68 L597.65,408.05 L596.31,406.43 L594.99,404.80 L593.69,403.18 L592.42,401.55 L591.17,399.93 L589.95,398.30 L588.75,396.68 L587.57,395.05 L586.42,393.43 L585.29,391.80 L584.18,390.18 L583.10,388.55 L582.05,386.93 L581.02,385.30 L580.01,383.68 L579.02,382.05 L578.07,380.43 L577.13,378.80 L576.22,377.18 L575.34,375.55 L574.48,373.93 L573.65,372.30 L572.84,370.68 L572.05,369.05 L571.29,367.43 L570.56,365.80 L569.85,364.18 L569.17,362.55 L568.51,360.93 L567.88,359.30 L567.27,357.68 L566.69,356.05 L566.13,354.43 L565.60,352.80 L565.10,351.18 L564.62,349.55 L564.16,347.93 L563.73,346.30 L563.33,344.68 L562.96,343.05 L562.61,341.43 L562.28,339.80 L561.98,338.18 L561.71,336.55 L561.46,334.93 L561.24,333.30 L561.05,331.68 L560.88,330.05 L560.73,328.43 L560.62,326.80 L560.53,325.18 L560.46,323.55 L560.42,321.93 L560.41,320.30 L560.42,318.68 L560.46,317.05 L560.53,315.43 L560.62,313.80 L560.73,312.18 L560.88,310.55 L561.05,308.93 L561.24,307.30 L561.46,305.68 L561.71,304.05 L561.98,302.43 L562.28,300.80 L562.61,299.18 L562.96,297.55 L563.33,295.93 L563.73,294.30 L564.16,292.68 L564.62,291.05 L565.10,289.43 L565.60,287.80 L566.13,286.18 L566.69,284.55 L567.27,282.93 L567.88,281.30 L568.51,279.68 L569.17,278.05 L569.85,276.43 L570.56,274.80 L571.29,273.18 L572.05,271.55 L572.84,269.93 L573.65,268.30 L574.48,266.68 L575.34,265.05 L576.22,263.43 L577.13,261.80 L578.07,260.18 L579.02,258.55 L580.01,256.93 L581.02,255.30 L582.05,253.68 L583.10,252.05 L584.18,250.43 L585.29,248.80 L586.42,247.18 L587.57,245.55 L588.75,243.93 L589.95,242.30 L591.17,240.68 L592.42,239.05 L593.69,237.43 L594.99,235.80 L596.31,234.18 L597.65,232.55 L599.02,230.93 L600.40,229.30 L601.82,227.68 L603.25,226.05 L604.71,224.43 L606.19,222.80 L607.69,221.18 L609.21,219.55 L610.76,217.93 L612.33,216.30 L613.92,214.68 L615.53,213.05 L617.17,211.43 L618.83,209.80 L620.50,208.18 L622.20,206.55 L623.92,204.93 L625.67,203.30 L627.43,201.68 L629.21,200.05 L631.02,198.43 L632.84,196.80 L634.69,195.18 L636.56,193.55 L638.44,191.93 L640.35,190.30 L642.28,188.68 L644.22,187.05 L646.19,185.43 L648.17,183.80 L650.18,182.18 L652.20,180.55 L654.25,178.93 L656.31,177.30 L658.39,175.68 L660.49,174.05 L662.61,172.43 L664.74,170.80 L666.90,169.18 L669.07,167.55 L671.26,165.93 L673.46,164.30 L675.69,162.68 L677.93,161.05 L680.19,159.43 L682.47,157.80 L684.76,156.18 L687.07,154.55 L689.39,152.93 L691.73,151.30 L694.09,149.68 L696.47,148.05 L698.85,146.43 L701.26,144.80 L703.68,143.18 L706.11,141.55 L708.56,139.93 L711.03,138.30 L713.51,136.68 L716.00,135.05 L718.51,133.43 L721.03,131.80 L723.57,130.18 L726.12,128.55 L728.68,126.93 L731.25,125.30 L733.84,123.68 L736.44,122.05 L739.06,120.43 L741.69,118.80 L744.32,117.18 L746.98,115.55 L749.64,113.93 L752.31,112.30 L755.00,110.68 L757.70,109.05 L760.40,107.43 L763.12,105.80 L765.85,104.18 L768.59,102.55 L771.34,100.93 L774.10,99.30 L776.87,97.68 L779.65,96.05 L782.44,94.43 L785.23,92.80 L788.04,91.18 L790.86,89.55 L793.68,87.93 L796.51,86.30 L799.35,84.68 L802.20,83.05 L805.05,81.43 L807.92,79.80 L810.79,78.18 L813.66,76.55 L816.55,74.93 L819.44,73.30 L822.33,71.68 L825.24,70.05 L828.14,68.43 L831.06,66.80 L833.98,65.18 L836.90,63.55 L839.83,61.93 L842.77,60.30 L845.70,58.68 L848.65,57.05 L851.59,55.43 L854.55,53.80 L857.50,52.18 L860.46,50.55 L863.42,48.93 L866.38,47.30 L869.35,45.68 L872.32,44.05 L875.29,42.43 L878.26,40.80 L881.24,39.18 L884.22,37.55 L887.20,35.93 L890.18,34.30 L893.16,32.68 L896.14,31.05 L899.12,29.43 L902.10,27.80" stroke-dashoffset="1.2"/>
<path d="M902.10,612.80 L898.69,611.17 L895.28,609.55 L891.88,607.92 L888.47,606.30 L885.07,604.67 L881.66,603.05 L878.26,601.42 L874.86,599.80 L871.46,598.17 L868.07,596.55 L864.67,594.92 L861.28,593.30 L857.89,591.67 L854.51,590.05 L851.13,588.42 L847.75,586.80 L844.38,585.17 L841.01,583.55 L837.65,581.92 L834.29,580.30 L830.94,578.67 L827.59,577.05 L824.25,575.42 L820.91,573.80 L817.58,572.17 L814.26,570.55 L810.94,568.92 L807.63,567.30 L804.33,565.67 L801.03,564.05 L797.74,562.42 L794.46,560.80 L791.19,559.17 L787.93,557.55 L784.67,555.92 L781.43,554.30 L778.19,552.67 L774.96,551.05 L771.75,549.42 L768.54,547.80 L765.34,546.17 L762.16,544.55 L758.98,542.92 L755.81,541.30 L752.66,539.67 L749.52,538.05 L746.39,536.42 L743.27,534.80 L740.16,533.17 L737.07,531.55 L733.98,529.92 L730.91,528.30 L727.86,526.67 L724.81,525.05 L721.79,523.42 L718.77,521.80 L715.77,520.17 L712.78,518.55 L709.81,516.92 L706.85,515.30 L703.90,513.67 L700.98,512.05 L698.06,510.43 L695.16,508.80 L692.28,507.18 L689.42,505.55 L686.57,503.93 L683.73,502.30 L680.92,500.68 L678.12,499.05 L675.33,497.43 L672.57,495.80 L669.82,494.18 L667.09,492.55 L664.38,490.93 L661.68,489.30 L659.01,487.68 L656.35,486.05 L653.71,484.43 L651.09,482.80 L648.49,481.18 L645.91,479.55 L643.34,477.93 L640.80,476.30 L638.28,474.68 L635.78,473.05 L633.29,471.43 L630.83,469.80 L628.39,468.18 L625.97,466.55 L623.57,464.93 L621.19,463.30 L618.84,461.68 L616.50,460.05 L614.19,458.43 L611.90,456.80 L609.63,455.18 L607.38,453.55 L605.16,451.93 L602.96,450.30 L600.78,448.68 L598.62,447.05 L596.49,445.43 L594.38,443.80 L592.29,442.18 L590.23,440.55 L588.19,438.93 L586.18,437.30 L584.18,435.68 L582.22,434.05 L580.28,432.43 L578.36,430.80 L576.46,429.18 L574.60,427.55 L572.75,425.93 L570.93,424.30 L569.14,422.68 L567.37,421.05 L565.63,419.43 L563.91,417.80 L562.22,416.18 L560.56,414.55 L558.92,412.93 L557.31,411.30 L555.72,409.68 L554.16,408.05 L552.62,406.43 L551.12,404.80 L549.64,403.18 L548.18,401.55 L546.76,399.93 L545.36,398.30 L543.98,396.68 L542.64,395.05 L541.32,393.43 L540.03,391.80 L538.77,390.18 L537.53,388.55 L536.33,386.93 L535.15,385.30 L533.99,383.68 L532.87,382.05 L531.78,380.43 L530.71,378.80 L529.67,377.18 L528.66,375.55 L527.68,373.93 L526.72,372.30 L525.80,370.68 L524.90,369.05 L524.03,367.43 L523.20,365.80 L522.39,364.18 L521.60,362.55 L520.85,360.93 L520.13,359.30 L519.44,357.68 L518.77,356.05 L518.14,354.43 L517.53,352.80 L516.95,351.18 L516.40,349.55 L515.89,347.93 L515.40,346.30 L514.94,344.68 L514.51,343.05 L514.11,341.43 L513.74,339.80 L513.39,338.18 L513.08,336.55 L512.80,334.93 L512.55,333.30 L512.32,331.68 L512.13,330.05 L511.97,328.43 L511.83,326.80 L511.73,325.18 L511.66,323.55 L511.61,321.93 L511.60,320.30 L511.61,318.68 L511.66,317.05 L511.73,315.43 L511.83,313.80 L511.97,312.18 L512.13,310.55 L512.32,308.93 L512.55,307.30 L512.80,305.68 L513.08,304.05 L513.39,302.43 L513.74,300.80 L514.11,299.18 L514.51,297.55 L514.94,295.93 L515.40,294.30 L515.89,292.68 L516.40,291.05 L516.95,289.43 L517.53,287.80 L518.14,286.18 L518.77,284.55 L519.44,282.93 L520.13,281.30 L520.85,279.68 L521.60,278.05 L522.39,276.43 L523.20,274.80 L524.03,273.18 L524.90,271.55 L525.80,269.93 L526.72,268.30 L527.68,266.68 L528.66,265.05 L529.67,263.43 L530.71,261.80 L531.78,260.18 L532.87,258.55 L533.99,256.93 L535.15,255.30 L536.33,253.68 L537.53,252.05 L538.77,250.43 L540.03,248.80 L541.32,247.18 L542.64,245.55 L543.98,243.93 L545.36,242.30 L546.76,240.68 L548.18,239.05 L549.64,237.43 L551.12,235.80 L552.62,234.18 L554.16,232.55 L555.72,230.93 L557.31,229.30 L558.92,227.68 L560.56,226.05 L562.22,224.43 L563.91,222.80 L565.63,221.18 L567.37,219.55 L569.14,217.93 L570.93,216.30 L572.75,214.68 L574.60,213.05 L576.46,211.43 L578.36,209.80 L580.28,208.18 L582.22,206.55 L584.18,204.93 L586.18,203.30 L588.19,201.68 L590.23,200.05 L592.29,198.43 L594.38,196.80 L596.49,195.18 L598.62,193.55 L600.78,191.93 L602.96,190.30 L605.16,188.68 L607.38,187.05 L609.63,185.43 L611.90,183.80 L614.19,182.18 L616.50,180.55 L618.84,178.93 L621.19,177.30 L623.57,175.68 L625.97,174.05 L628.39,172.43 L630.83,170.80 L633.29,169.18 L635.78,167.55 L638.28,165.93 L640.80,164.30 L643.34,162.68 L645.91,161.05 L648.49,159.43 L651.09,157.80 L653.71,156.18 L656.35,154.55 L659.01,152.93 L661.68,151.30 L664.38,149.68 L667.09,148.05 L669.82,146.43 L672.57,144.80 L675.33,143.18 L678.12,141.55 L680.92,139.93 L683.73,138.30 L686.57,136.68 L689.42,135.05 L692.28,133.43 L695.16,131.80 L698.06,130.18 L700.98,128.55 L703.90,126.93 L706.85,125.30 L709.81,123.68 L712.78,122.05 L715.77,120.43 L718.77,118.80 L721.79,117.18 L724.81,115.55 L727.86,113.93 L730.91,112.30 L733.98,110.68 L737.07,109.05 L740.16,107.43 L743.27,105.80 L746.39,104.18 L749.52,102.55 L752.66,100.93 L755.81,99.30 L758.98,97.68 L762.16,96.05 L765.34,94.43 L768.54,92.80 L771.75,91.18 L774.96,89.55 L778.19,87.93 L781.43,86.30 L784.67,84.68 L787.93,83.05 L791.19,81.43 L794.46,79.80 L797.74,78.18 L801.03,76.55 L804.33,74.93 L807.63,73.30 L810.94,71.68 L814.26,70.05 L817.58,68.43 L820.91,66.80 L824.25,65.18 L827.59,63.55 L830.94,61.93 L834.29,60.30 L837.65,58.68 L841.01,57.05 L844.38,55.43 L847.75,53.80 L851.13,52.18 L854.51,50.55 L857.89,48.93 L861.28,47.30 L864.67,45.68 L868.07,44.05 L871.46,42.43 L874.86,40.80 L878.26,39.18 L881.66,37.55 L885.07,35.93 L888.47,34.30 L891.88,32.68 L895.28,31.05 L898.69,29.43 L902.10,27.80" stroke-dashoffset="1.2"/>
<path d="M902.10,612.80 L898.27,611.17 L894.43,609.55 L890.60,607.92 L886.77,606.30 L882.94,604.67 L879.11,603.05 L875.28,601.42 L871.45,599.80 L867.63,598.17 L863.81,596.55 L859.99,594.92 L856.18,593.30 L852.37,591.67 L848.56,590.05 L844.76,588.42 L840.96,586.80 L837.16,585.17 L833.38,583.55 L829.59,581.92 L825.81,580.30 L822.04,578.67 L818.27,577.05 L814.51,575.42 L810.76,573.80 L807.01,572.17 L803.28,570.55 L799.54,568.92 L795.82,567.30 L792.10,565.67 L788.40,564.05 L784.70,562.42 L781.01,560.80 L777.33,559.17 L773.66,557.55 L769.99,555.92 L766.34,554.30 L762.70,552.67 L759.07,551.05 L755.45,549.42 L751.84,547.80 L748.25,546.17 L744.66,544.55 L741.09,542.92 L737.53,541.30 L733.98,539.67 L730.45,538.05 L726.92,536.42 L723.41,534.80 L719.92,533.17 L716.44,531.55 L712.97,529.92 L709.52,528.30 L706.08,526.67 L702.65,525.05 L699.25,523.42 L695.85,521.80 L692.48,520.17 L689.11,518.55 L685.77,516.92 L682.44,515.30 L679.13,513.67 L675.84,512.05 L672.56,510.43 L669.30,508.80 L666.06,507.18 L662.83,505.55 L659.62,503.93 L656.44,502.30 L653.27,500.68 L650.12,499.05 L646.99,497.43 L643.88,495.80 L640.78,494.18 L637.71,492.55 L634.66,490.93 L631.63,489.30 L628.62,487.68 L625.63,486.05 L622.66,484.43 L619.71,482.80 L616.79,481.18 L613.88,479.55 L611.00,477.93 L608.14,476.30 L605.30,474.68 L602.49,473.05 L599.69,471.43 L596.92,469.80 L594.18,468.18 L591.46,466.55 L588.76,464.93 L586.08,463.30 L583.43,461.68 L580.80,460.05 L578.20,458.43 L575.62,456.80 L573.07,455.18 L570.54,453.55 L568.04,451.93 L565.56,450.30 L563.11,448.68 L560.69,447.05 L558.29,445.43 L555.91,443.80 L553.57,442.18 L551.25,440.55 L548.95,438.93 L546.69,437.30 L544.45,435.68 L542.23,434.05 L540.05,432.43 L537.89,430.80 L535.76,429.18 L533.66,427.55 L531.58,425.93 L529.54,424.30 L527.52,422.68 L525.53,421.05 L523.57,419.43 L521.64,417.80 L519.74,416.18 L517.86,414.55 L516.02,412.93 L514.21,411.30 L512.42,409.68 L510.67,408.05 L508.94,406.43 L507.24,404.80 L505.58,403.18 L503.94,401.55 L502.34,399.93 L500.76,398.30 L499.22,396.68 L497.71,395.05 L496.22,393.43 L494.77,391.80 L493.35,390.18 L491.96,388.55 L490.60,386.93 L489.28,385.30 L487.98,383.68 L486.72,382.05 L485.49,380.43 L484.28,378.80 L483.12,377.18 L481.98,375.55 L480.87,373.93 L479.80,372.30 L478.76,370.68 L477.75,369.05 L476.78,367.43 L475.83,365.80 L474.92,364.18 L474.04,362.55 L473.20,360.93 L472.38,359.30 L471.60,357.68 L470.85,356.05 L470.14,354.43 L469.46,352.80 L468.81,351.18 L468.19,349.55 L467.61,347.93 L467.06,346.30 L466.54,344.68 L466.06,343.05 L465.61,341.43 L465.19,339.80 L464.81,338.18 L464.45,336.55 L464.14,334.93 L463.85,333.30 L463.60,331.68 L463.39,330.05 L463.20,328.43 L463.05,326.80 L462.93,325.18 L462.85,323.55 L462.80,321.93 L462.78,320.30 L462.80,318.68 L462.85,317.05 L462.93,315.43 L463.05,313.80 L463.20,312.18 L463.39,310.55 L463.60,308.93 L463.85,307.30 L464.14,305.68 L464.45,304.05 L464.81,302.43 L465.19,300.80 L465.61,299.18 L466.06,297.55 L466.54,295.93 L467.06,294.30 L467.61,292.68 L468.19,291.05 L468.81,289.43 L469.46,287.80 L470.14,286.18 L470.85,284.55 L471.60,282.93 L472.38,281.30 L473.20,279.68 L474.04,278.05 L474.92,276.43 L475.83,274.80 L476.78,273.18 L477.75,271.55 L478.76,269.93 L479.80,268.30 L480.87,266.68 L481.98,265.05 L483.12,263.43 L484.28,261.80 L485.49,260.18 L486.72,258.55 L487.98,256.93 L489.28,255.30 L490.60,253.68 L491.96,252.05 L493.35,250.43 L494.77,248.80 L496.22,247.18 L497.71,245.55 L499.22,243.93 L500.76,242.30 L502.34,240.68 L503.94,239.05 L505.58,237.43 L507.24,235.80 L508.94,234.18 L510.67,232.55 L512.42,230.93 L514.21,229.30 L516.02,227.68 L517.86,226.05 L519.74,224.43 L521.64,222.80 L523.57,221.18 L525.53,219.55 L527.52,217.93 L529.54,216.30 L531.58,214.68 L533.66,213.05 L535.76,211.43 L537.89,209.80 L540.05,208.18 L542.23,206.55 L544.45,204.93 L546.69,203.30 L548.95,201.68 L551.25,200.05 L553.57,198.43 L555.91,196.80 L558.29,195.18 L560.69,193.55 L563.11,191.93 L565.56,190.30 L568.04,188.68 L570.54,187.05 L573.07,185.43 L575.62,183.80 L578.20,182.18 L580.80,180.55 L583.43,178.93 L586.08,177.30 L588.76,175.68 L591.46,174.05 L594.18,172.43 L596.92,170.80 L599.69,169.18 L602.49,167.55 L605.30,165.93 L608.14,164.30 L611.00,162.68 L613.88,161.05 L616.79,159.43 L619.71,157.80 L622.66,156.18 L625.63,154.55 L628.62,152.93 L631.63,151.30 L634.66,149.68 L637.71,148.05 L640.78,146.43 L643.88,144.80 L646.99,143.18 L650.12,141.55 L653.27,139.93 L656.44,138.30 L659.62,136.68 L662.83,135.05 L666.06,133.43 L669.30,131.80 L672.56,130.18 L675.84,128.55 L679.13,126.93 L682.44,125.30 L685.77,123.68 L689.11,122.05 L692.48,120.43 L695.85,118.80 L699.25,117.18 L702.65,115.55 L706.08,113.93 L709.52,112.30 L712.97,110.68 L716.44,109.05 L719.92,107.43 L723.41,105.80 L726.92,104.18 L730.45,102.55 L733.98,100.93 L737.53,99.30 L741.09,97.68 L744.66,96.05 L748.25,94.43 L751.84,92.80 L755.45,91.18 L759.07,89.55 L762.70,87.93 L766.34,86.30 L769.99,84.68 L773.66,83.05 L777.33,81.43 L781.01,79.80 L784.70,78.18 L788.40,76.55 L792.10,74.93 L795.82,73.30 L799.54,71.68 L803.28,70.05 L807.01,68.43 L810.76,66.80 L814.51,65.18 L818.27,63.55 L822.04,61.93 L825.81,60.30 L829.59,58.68 L833.38,57.05 L837.16,55.43 L840.96,53.80 L844.76,52.18 L848.56,50.55 L852.37,48.93 L856.18,47.30 L859.99,45.68 L863.81,44.05 L867.63,42.43 L871.45,40.80 L875.28,39.18 L879.11,37.55 L882.94,35.93 L886.77,34.30 L890.60,32.68 L894.43,31.05 L898.27,29.43 L902.10,27.80" stroke-dashoffset="1.2"/>
<path d="M902.10,612.80 L897.84,611.17 L893.58,609.55 L889.32,607.92 L885.06,606.30 L880.81,604.67 L876.55,603.05 L872.30,601.42 L868.05,599.80 L863.80,598.17 L859.56,596.55 L855.31,594.92 L851.08,593.30 L846.84,591.67 L842.61,590.05 L838.39,588.42 L834.17,586.80 L829.95,585.17 L825.74,583.55 L821.54,581.92 L817.34,580.30 L813.15,578.67 L808.96,577.05 L804.78,575.42 L800.61,573.80 L796.45,572.17 L792.29,570.55 L788.15,568.92 L784.01,567.30 L779.88,565.67 L775.76,564.05 L771.65,562.42 L767.55,560.80 L763.46,559.17 L759.38,557.55 L755.32,555.92 L751.26,554.30 L747.21,552.67 L743.18,551.05 L739.16,549.42 L735.15,547.80 L731.15,546.17 L727.17,544.55 L723.20,542.92 L719.24,541.30 L715.30,539.67 L711.37,538.05 L707.46,536.42 L703.56,534.80 L699.68,533.17 L695.81,531.55 L691.95,529.92 L688.12,528.30 L684.30,526.67 L680.49,525.05 L676.71,523.42 L672.94,521.80 L669.18,520.17 L665.45,518.55 L661.73,516.92 L658.03,515.30 L654.36,513.67 L650.69,512.05 L647.05,510.43 L643.43,508.80 L639.83,507.18 L636.25,505.55 L632.68,503.93 L629.14,502.30 L625.62,500.68 L622.12,499.05 L618.64,497.43 L615.18,495.80 L611.75,494.18 L608.34,492.55 L604.95,490.93 L601.58,489.30 L598.23,487.68 L594.91,486.05 L591.61,484.43 L588.34,482.80 L585.08,481.18 L581.86,479.55 L578.66,477.93 L575.48,476.30 L572.32,474.68 L569.20,473.05 L566.09,471.43 L563.02,469.80 L559.97,468.18 L556.94,466.55 L553.94,464.93 L550.97,463.30 L548.02,461.68 L545.10,460.05 L542.21,458.43 L539.35,456.80 L536.51,455.18 L533.70,453.55 L530.92,451.93 L528.17,450.30 L525.45,448.68 L522.75,447.05 L520.09,445.43 L517.45,443.80 L514.84,442.18 L512.26,440.55 L509.71,438.93 L507.19,437.30 L504.71,435.68 L502.25,434.05 L499.82,432.43 L497.42,430.80 L495.06,429.18 L492.72,427.55 L490.42,425.93 L488.14,424.30 L485.90,422.68 L483.69,421.05 L481.51,419.43 L479.37,417.80 L477.25,416.18 L475.17,414.55 L473.12,412.93 L471.11,411.30 L469.12,409.68 L467.17,408.05 L465.26,406.43 L463.37,404.80 L461.52,403.18 L459.70,401.55 L457.92,399.93 L456.17,398.30 L454.46,396.68 L452.77,395.05 L451.13,393.43 L449.51,391.80 L447.94,390.18 L446.39,388.55 L444.88,386.93 L443.41,385.30 L441.97,383.68 L440.56,382.05 L439.19,380.43 L437.86,378.80 L436.56,377.18 L435.30,375.55 L434.07,373.93 L432.88,372.30 L431.72,370.68 L430.60,369.05 L429.52,367.43 L428.47,365.80 L427.46,364.18 L426.48,362.55 L425.54,360.93 L424.64,359.30 L423.77,357.68 L422.94,356.05 L422.14,354.43 L421.39,352.80 L420.66,351.18 L419.98,349.55 L419.33,347.93 L418.72,346.30 L418.15,344.68 L417.61,343.05 L417.11,341.43 L416.64,339.80 L416.22,338.18 L415.83,336.55 L415.47,334.93 L415.16,333.30 L414.88,331.68 L414.64,330.05 L414.43,328.43 L414.27,326.80 L414.14,325.18 L414.04,323.55 L413.99,321.93 L413.97,320.30 L413.99,318.68 L414.04,317.05 L414.14,315.43 L414.27,313.80 L414.43,312.18 L414.64,310.55 L414.88,308.93 L415.16,307.30 L415.47,305.68 L415.83,304.05 L416.22,302.43 L416.64,300.80 L417.11,299.18 L417.61,297.55 L418.15,295.93 L418.72,294.30 L419.33,292.68 L419.98,291.05 L420.66,289.43 L421.39,287.80 L422.14,286.18 L422.94,284.55 L423.77,282.93 L424.64,281.30 L425.54,279.68 L426.48,278.05 L427.46,276.43 L428.47,274.80 L429.52,273.18 L430.60,271.55 L431.72,269.93 L432.88,268.30 L434.07,266.68 L435.30,265.05 L436.56,263.43 L437.86,261.80 L439.19,260.18 L440.56,258.55 L441.97,256.93 L443.41,255.30 L444.88,253.68 L446.39,252.05 L447.94,250.43 L449.51,248.80 L451.13,247.18 L452.77,245.55 L454.46,243.93 L456.17,242.30 L457.92,240.68 L459.70,239.05 L461.52,237.43 L463.37,235.80 L465.26,234.18 L467.17,232.55 L469.12,230.93 L471.11,229.30 L473.12,227.68 L475.17,226.05 L477.25,224.43 L479.37,222.80 L481.51,221.18 L483.69,219.55 L485.90,217.93 L488.14,216.30 L490.42,214.68 L492.72,213.05 L495.06,211.43 L497.42,209.80 L499.82,208.18 L502.25,206.55 L504.71,204.93 L507.19,203.30 L509.71,201.68 L512.26,200.05 L514.84,198.43 L517.45,196.80 L520.09,195.18 L522.75,193.55 L525.45,191.93 L528.17,190.30 L530.92,188.68 L533.70,187.05 L536.51,185.43 L539.35,183.80 L542.21,182.18 L545.10,180.55 L548.02,178.93 L550.97,177.30 L553.94,175.68 L556.94,174.05 L559.97,172.43 L563.02,170.80 L566.09,169.18 L569.20,167.55 L572.32,165.93 L575.48,164.30 L578.66,162.68 L581.86,161.05 L585.08,159.43 L588.34,157.80 L591.61,156.18 L594.91,154.55 L598.23,152.93 L601.58,151.30 L604.95,149.68 L608.34,148.05 L611.75,146.43 L615.18,144.80 L618.64,143.18 L622.12,141.55 L625.62,139.93 L629.14,138.30 L632.68,136.68 L636.25,135.05 L639.83,133.43 L643.43,131.80 L647.05,130.18 L650.69,128.55 L654.36,126.93 L658.03,125.30 L661.73,123.68 L665.45,122.05 L669.18,120.43 L672.94,118.80 L676.71,117.18 L680.49,115.55 L684.30,113.93 L688.12,112.30 L691.95,110.68 L695.81,109.05 L699.68,107.43 L703.56,105.80 L707.46,104.18 L711.37,102.55 L715.30,100.93 L719.24,99.30 L723.20,97.68 L727.17,96.05 L731.15,94.43 L735.15,92.80 L739.16,91.18 L743.18,89.55 L747.21,87.93 L751.26,86.30 L755.32,84.68 L759.38,83.05 L763.46,81.43 L767.55,79.80 L771.65,78.18 L775.76,76.55 L779.88,74.93 L784.01,73.30 L788.15,71.68 L792.29,70.05 L796.45,68.43 L800.61,66.80 L804.78,65.18 L808.96,63.55 L813.15,61.93 L817.34,60.30 L821.54,58.68 L825.74,57.05 L829.95,55.43 L834.17,53.80 L838.39,52.18 L842.61,50.55 L846.84,48.93 L851.08,47.30 L855.31,45.68 L859.56,44.05 L863.80,42.43 L868.05,40.80 L872.30,39.18 L876.55,37.55 L880.81,35.93 L885.06,34.30 L889.32,32.68 L893.58,31.05 L897.84,29.43 L902.10,27.80" stroke-dashoffset="1.2"/>
<path d="M902.10,612.80 L897.41,611.17 L892.73,609.55 L888.04,607.92 L883.36,606.30 L878.68,604.67 L874.00,603.05 L869.32,601.42 L864.64,599.80 L859.97,598.17 L855.30,596.55 L850.64,594.92 L845.97,593.30 L841.32,591.67 L836.66,590.05 L832.01,588.42 L827.37,586.80 L822.73,585.17 L818.10,583.55 L813.48,581.92 L808.86,580.30 L804.25,578.67 L799.65,577.05 L795.05,575.42 L790.46,573.80 L785.88,572.17 L781.31,570.55 L776.75,568.92 L772.20,567.30 L767.66,565.67 L763.13,564.05 L758.61,562.42 L754.10,560.80 L749.60,559.17 L745.11,557.55 L740.64,555.92 L736.18,554.30 L731.73,552.67 L727.29,551.05 L722.86,549.42 L718.45,547.80 L714.06,546.17 L709.68,544.55 L705.31,542.92 L700.96,541.30 L696.62,539.67 L692.30,538.05 L687.99,536.42 L683.71,534.80 L679.43,533.17 L675.18,531.55 L670.94,529.92 L666.72,528.30 L662.52,526.67 L658.33,525.05 L654.17,523.42 L650.02,521.80 L645.89,520.17 L641.78,518.55 L637.70,516.92 L633.63,515.30 L629.58,513.67 L625.55,512.05 L621.55,510.43 L617.56,508.80 L613.60,507.18 L609.66,505.55 L605.74,503.93 L601.85,502.30 L597.97,500.68 L594.12,499.05 L590.30,497.43 L586.49,495.80 L582.71,494.18 L578.96,492.55 L575.23,490.93 L571.52,489.30 L567.85,487.68 L564.19,486.05 L560.56,484.43 L556.96,482.80 L553.38,481.18 L549.83,479.55 L546.31,477.93 L542.82,476.30 L539.35,474.68 L535.91,473.05 L532.49,471.43 L529.11,469.80 L525.75,468.18 L522.42,466.55 L519.13,464.93 L515.86,463.30 L512.62,461.68 L509.40,460.05 L506.22,458.43 L503.07,456.80 L499.95,455.18 L496.86,453.55 L493.81,451.93 L490.78,450.30 L487.78,448.68 L484.82,447.05 L481.88,445.43 L478.98,443.80 L476.11,442.18 L473.28,440.55 L470.47,438.93 L467.70,437.30 L464.97,435.68 L462.26,434.05 L459.59,432.43 L456.95,430.80 L454.35,429.18 L451.78,427.55 L449.25,425.93 L446.75,424.30 L444.28,422.68 L441.85,421.05 L439.45,419.43 L437.09,417.80 L434.77,416.18 L432.48,414.55 L430.23,412.93 L428.01,411.30 L425.83,409.68 L423.68,408.05 L421.57,406.43 L419.50,404.80 L417.46,403.18 L415.46,401.55 L413.50,399.93 L411.58,398.30 L409.69,396.68 L407.84,395.05 L406.03,393.43 L404.26,391.80 L402.52,390.18 L400.82,388.55 L399.16,386.93 L397.54,385.30 L395.96,383.68 L394.41,382.05 L392.90,380.43 L391.44,378.80 L390.01,377.18 L388.62,375.55 L387.27,373.93 L385.96,372.30 L384.69,370.68 L383.45,369.05 L382.26,367.43 L381.11,365.80 L379.99,364.18 L378.92,362.55 L377.88,360.93 L376.89,359.30 L375.94,357.68 L375.02,356.05 L374.15,354.43 L373.31,352.80 L372.52,351.18 L371.77,349.55 L371.05,347.93 L370.38,346.30 L369.75,344.68 L369.16,343.05 L368.61,341.43 L368.10,339.80 L367.63,338.18 L367.20,336.55 L366.81,334.93 L366.46,333.30 L366.16,331.68 L365.89,330.05 L365.67,328.43 L365.48,326.80 L365.34,325.18 L365.24,323.55 L365.18,321.93 L365.16,320.30 L365.18,318.68 L365.24,317.05 L365.34,315.43 L365.48,313.80 L365.67,312.18 L365.89,310.55 L366.16,308.93 L366.46,307.30 L366.81,305.68 L367.20,304.05 L367.63,302.43 L368.10,300.80 L368.61,299.18 L369.16,297.55 L369.75,295.93 L370.38,294.30 L371.05,292.68 L371.77,291.05 L372.52,289.43 L373.31,287.80 L374.15,286.18 L375.02,284.55 L375.94,282.93 L376.89,281.30 L377.88,279.68 L378.92,278.05 L379.99,276.43 L381.11,274.80 L382.26,273.18 L383.45,271.55 L384.69,269.93 L385.96,268.30 L387.27,266.68 L388.62,265.05 L390.01,263.43 L391.44,261.80 L392.90,260.18 L394.41,258.55 L395.96,256.93 L397.54,255.30 L399.16,253.68 L400.82,252.05 L402.52,250.43 L404.26,248.80 L406.03,247.18 L407.84,245.55 L409.69,243.93 L411.58,242.30 L413.50,240.68 L415.46,239.05 L417.46,237.43 L419.50,235.80 L421.57,234.18 L423.68,232.55 L425.83,230.93 L428.01,229.30 L430.23,227.68 L432.48,226.05 L434.77,224.43 L437.09,222.80 L439.45,221.18 L441.85,219.55 L444.28,217.93 L446.75,216.30 L449.25,214.68 L451.78,213.05 L454.35,211.43 L456.95,209.80 L459.59,208.18 L462.26,206.55 L464.97,204.93 L467.70,203.30 L470.47,201.68 L473.28,200.05 L476.11,198.43 L478.98,196.80 L481.88,195.18 L484.82,193.55 L487.78,191.93 L490.78,190.30 L493.81,188.68 L496.86,187.05 L499.95,185.43 L503.07,183.80 L506.22,182.18 L509.40,180.55 L512.62,178.93 L515.86,177.30 L519.13,175.68 L522.42,174.05 L525.75,172.43 L529.11,170.80 L532.49,169.18 L535.91,167.55 L539.35,165.93 L542.82,164.30 L546.31,162.68 L549.83,161.05 L553.38,159.43 L556.96,157.80 L560.56,156.18 L564.19,154.55 L567.85,152.93 L571.52,151.30 L575.23,149.68 L578.96,148.05 L582.71,146.43 L586.49,144.80 L590.30,143.18 L594.12,141.55 L597.97,139.93 L601.85,138.30 L605.74,136.68 L609.66,135.05 L613.60,133.43 L617.56,131.80 L621.55,130.18 L625.55,128.55 L629.58,126.93 L633.63,125.30 L637.70,123.68 L641.78,122.05 L645.89,120.43 L650.02,118.80 L654.17,117.18 L658.33,115.55 L662.52,113.93 L666.72,112.30 L670.94,110.68 L675.18,109.05 L679.43,107.43 L683.71,105.80 L687.99,104.18 L692.30,102.55 L696.62,100.93 L700.96,99.30 L705.31,97.68 L709.68,96.05 L714.06,94.43 L718.45,92.80 L722.86,91.18 L727.29,89.55 L731.73,87.93 L736.18,86.30 L740.64,84.68 L745.11,83.05 L749.60,81.43 L754.10,79.80 L758.61,78.18 L763.13,76.55 L767.66,74.93 L772.20,73.30 L776.75,71.68 L781.31,70.05 L785.88,68.43 L790.46,66.80 L795.05,65.18 L799.65,63.55 L804.25,61.93 L808.86,60.30 L813.48,58.68 L818.10,57.05 L822.73,55.43 L827.37,53.80 L832.01,52.18 L836.66,50.55 L841.32,48.93 L845.97,47.30 L850.64,45.68 L855.30,44.05 L859.97,42.43 L864.64,40.80 L869.32,39.18 L874.00,37.55 L878.68,35.93 L883.36,34.30 L888.04,32.68 L892.73,31.05 L897.41,29.43 L902.10,27.80" stroke-dashoffset="1.2"/>
<path d="M902.10,612.80 L896.99,611.17 L891.88,609.55 L886.77,607.92 L881.66,606.30 L876.55,604.67 L871.44,603.05 L866.34,601.42 L861.24,599.80 L856.14,598.17 L851.05,596.55 L845.96,594.92 L840.87,593.30 L835.79,591.67 L830.71,590.05 L825.64,588.42 L820.58,586.80 L815.52,585.17 L810.47,583.55 L805.42,581.92 L800.38,580.30 L795.35,578.67 L790.33,577.05 L785.32,575.42 L780.31,573.80 L775.32,572.17 L770.33,570.55 L765.36,568.92 L760.39,567.30 L755.44,565.67 L750.50,564.05 L745.56,562.42 L740.64,560.80 L735.74,559.17 L730.84,557.55 L725.96,555.92 L721.09,554.30 L716.24,552.67 L711.40,551.05 L706.57,549.42 L701.76,547.80 L696.96,546.17 L692.18,544.55 L687.42,542.92 L682.67,541.30 L677.94,539.67 L673.23,538.05 L668.53,536.42 L663.85,534.80 L659.19,533.17 L654.55,531.55 L649.93,529.92 L645.32,528.30 L640.74,526.67 L636.17,525.05 L631.63,523.42 L627.10,521.80 L622.60,520.17 L618.12,518.55 L613.66,516.92 L609.22,515.30 L604.81,513.67 L600.41,512.05 L596.04,510.43 L591.70,508.80 L587.37,507.18 L583.07,505.55 L578.80,503.93 L574.55,502.30 L570.32,500.68 L566.12,499.05 L561.95,497.43 L557.80,495.80 L553.68,494.18 L549.58,492.55 L545.51,490.93 L541.47,489.30 L537.46,487.68 L533.47,486.05 L529.51,484.43 L525.58,482.80 L521.68,481.18 L517.81,479.55 L513.97,477.93 L510.15,476.30 L506.37,474.68 L502.62,473.05 L498.89,471.43 L495.20,469.80 L491.54,468.18 L487.91,466.55 L484.31,464.93 L480.74,463.30 L477.21,461.68 L473.71,460.05 L470.24,458.43 L466.80,456.80 L463.39,455.18 L460.02,453.55 L456.69,451.93 L453.38,450.30 L450.12,448.68 L446.88,447.05 L443.68,445.43 L440.52,443.80 L437.39,442.18 L434.29,440.55 L431.24,438.93 L428.21,437.30 L425.23,435.68 L422.28,434.05 L419.36,432.43 L416.49,430.80 L413.65,429.18 L410.84,427.55 L408.08,425.93 L405.35,424.30 L402.66,422.68 L400.01,421.05 L397.40,419.43 L394.82,417.80 L392.28,416.18 L389.79,414.55 L387.33,412.93 L384.91,411.30 L382.53,409.68 L380.19,408.05 L377.89,406.43 L375.63,404.80 L373.41,403.18 L371.22,401.55 L369.08,399.93 L366.99,398.30 L364.93,396.68 L362.91,395.05 L360.93,393.43 L359.00,391.80 L357.10,390.18 L355.25,388.55 L353.44,386.93 L351.67,385.30 L349.94,383.68 L348.26,382.05 L346.61,380.43 L345.01,378.80 L343.45,377.18 L341.94,375.55 L340.47,373.93 L339.04,372.30 L337.65,370.68 L336.30,369.05 L335.00,367.43 L333.74,365.80 L332.53,364.18 L331.36,362.55 L330.23,360.93 L329.14,359.30 L328.10,357.68 L327.11,356.05 L326.15,354.43 L325.24,352.80 L324.38,351.18 L323.56,349.55 L322.78,347.93 L322.04,346.30 L321.36,344.68 L320.71,343.05 L320.11,341.43 L319.55,339.80 L319.04,338.18 L318.57,336.55 L318.15,334.93 L317.77,333.30 L317.44,331.68 L317.15,330.05 L316.90,328.43 L316.70,326.80 L316.54,325.18 L316.43,323.55 L316.37,321.93 L316.34,320.30 L316.37,318.68 L316.43,317.05 L316.54,315.43 L316.70,313.80 L316.90,312.18 L317.15,310.55 L317.44,308.93 L317.77,307.30 L318.15,305.68 L318.57,304.05 L319.04,302.43 L319.55,300.80 L320.11,299.18 L320.71,297.55 L321.36,295.93 L322.04,294.30 L322.78,292.68 L323.56,291.05 L324.38,289.43 L325.24,287.80 L326.15,286.18 L327.11,284.55 L328.10,282.93 L329.14,281.30 L330.23,279.68 L331.36,278.05 L332.53,276.43 L333.74,274.80 L335.00,273.18 L336.30,271.55 L337.65,269.93 L339.04,268.30 L340.47,266.68 L341.94,265.05 L343.45,263.43 L345.01,261.80 L346.61,260.18 L348.26,258.55 L349.94,256.93 L351.67,255.30 L353.44,253.68 L355.25,252.05 L357.10,250.43 L359.00,248.80 L360.93,247.18 L362.91,245.55 L364.93,243.93 L366.99,242.30 L369.08,240.68 L371.22,239.05 L373.41,237.43 L375.63,235.80 L377.89,234.18 L380.19,232.55 L382.53,230.93 L384.91,229.30 L387.33,227.68 L389.79,226.05 L392.28,224.43 L394.82,222.80 L397.40,221.18 L400.01,219.55 L402.66,217.93 L405.35,216.30 L408.08,214.68 L410.84,213.05 L413.65,211.43 L416.49,209.80 L419.36,208.18 L422.28,206.55 L425.23,204.93 L428.21,203.30 L431.24,201.68 L434.29,200.05 L437.39,198.43 L440.52,196.80 L443.68,195.18 L446.88,193.55 L450.12,191.93 L453.38,190.30 L456.69,188.68 L460.02,187.05 L463.39,185.43 L466.80,183.80 L470.24,182.18 L473.71,180.55 L477.21,178.93 L480.74,177.30 L484.31,175.68 L487.91,174.05 L491.54,172.43 L495.20,170.80 L498.89,169.18 L502.62,167.55 L506.37,165.93 L510.15,164.30 L513.97,162.68 L517.81,161.05 L521.68,159.43 L525.58,157.80 L529.51,156.18 L533.47,154.55 L537.46,152.93 L541.47,151.30 L545.51,149.68 L549.58,148.05 L553.68,146.43 L557.80,144.80 L561.95,143.18 L566.12,141.55 L570.32,139.93 L574.55,138.30 L578.80,136.68 L583.07,135.05 L587.37,133.43 L591.70,131.80 L596.04,130.18 L600.41,128.55 L604.81,126.93 L609.22,125.30 L613.66,123.68 L618.12,122.05 L622.60,120.43 L627.10,118.80 L631.63,117.18 L636.17,115.55 L640.74,113.93 L645.32,112.30 L649.93,110.68 L654.55,109.05 L659.19,107.43 L663.85,105.80 L668.53,104.18 L673.23,102.55 L677.94,100.93 L682.67,99.30 L687.42,97.68 L692.18,96.05 L696.96,94.43 L701.76,92.80 L706.57,91.18 L711.40,89.55 L716.24,87.93 L721.09,86.30 L725.96,84.68 L730.84,83.05 L735.74,81.43 L740.64,79.80 L745.56,78.18 L750.50,76.55 L755.44,74.93 L760.39,73.30 L765.36,71.68 L770.33,70.05 L775.32,68.43 L780.31,66.80 L785.32,65.18 L790.33,63.55 L795.35,61.93 L800.38,60.30 L805.42,58.68 L810.47,57.05 L815.52,55.43 L820.58,53.80 L825.64,52.18 L830.71,50.55 L835.79,48.93 L840.87,47.30 L845.96,45.68 L851.05,44.05 L856.14,42.43 L861.24,40.80 L866.34,39.18 L871.44,37.55 L876.55,35.93 L881.66,34.30 L886.77,32.68 L891.88,31.05 L896.99,29.43 L902.10,27.80" stroke-dashoffset="1.2"/>
<path d="M750.50,564.05 L1053.70,564.05"/>
<path d="M609.22,515.30 L1194.98,515.30"/>
<path d="M487.91,466.55 L1316.29,466.55"/>
<path d="M394.82,417.80 L1409.38,417.80"/>
<path d="M336.30,369.05 L1467.90,369.05"/>
<path d="M316.34,320.30 L1487.86,320.30"/>
<path d="M336.30,271.55 L1467.90,271.55"/>
<path d="M394.82,222.80 L1409.38,222.80"/>
<path d="M487.91,174.05 L1316.29,174.05"/>
<path d="M609.22,125.30 L1194.98,125.30"/>
<path d="M750.50,76.55 L1053.70,76.55"/>
</g>
<path d="M456.0,340.75 L464.9,341.88 L473.9,342.95 L482.8,343.97 L491.8,344.93 L500.7,345.83 L509.7,346.67 L518.6,347.45 L527.6,348.17 L536.5,348.83 L545.5,349.43 L554.4,349.97 L563.4,350.44 L572.3,350.85 L581.3,351.20 L590.2,351.48 L599.2,351.70 L608.1,351.86 L617.1,351.94 L626.0,351.97 L635.0,351.92 L643.9,351.81 L652.9,351.63 L661.8,351.39 L670.8,351.07 L679.7,350.69 L688.7,350.24 L697.6,349.72 L706.6,349.12 L715.5,348.46 L724.5,347.72 L733.4,346.92 L742.4,346.04 L751.3,345.08 L760.3,344.06 L769.2,342.96 L778.2,341.79 L787.1,340.54 L796.1,339.21 L805.0,337.81" fill="none" stroke="#474747" stroke-width="1.2" stroke-dasharray="1.39 2.29"/>
<path d="M808,337.2 L817,335.5" fill="none" stroke="#474747" stroke-width="1.3"/>
<text x="318.14" y="330.00" text-anchor="middle" font-family="Liberation Serif, serif" letter-spacing="0.3" font-size="12" fill="#8f8f8f">+180<tspan font-size="7.2" dx="1.9" dy="-3.2">°</tspan></text>
<text x="415.77" y="330.00" text-anchor="middle" font-family="Liberation Serif, serif" letter-spacing="0.3" font-size="12" fill="#8f8f8f">+150<tspan font-size="7.2" dx="1.9" dy="-3.2">°</tspan></text>
<text x="513.40" y="330.00" text-anchor="middle" font-family="Liberation Serif, serif" letter-spacing="0.3" font-size="12" fill="#8f8f8f">+120<tspan font-size="7.2" dx="1.9" dy="-3.2">°</tspan></text>
<text x="611.02" y="330.00" text-anchor="middle" font-family="Liberation Serif, serif" letter-spacing="0.3" font-size="12" fill="#8f8f8f">+90<tspan font-size="7.2" dx="1.9" dy="-3.2">°</tspan></text>
<text x="708.65" y="330.00" text-anchor="middle" font-family="Liberation Serif, serif" letter-spacing="0.3" font-size="12" fill="#8f8f8f">+60<tspan font-size="7.2" dx="1.9" dy="-3.2">°</tspan></text>
<text x="806.27" y="330.00" text-anchor="middle" font-family="Liberation Serif, serif" letter-spacing="0.3" font-size="12" fill="#8f8f8f">+30<tspan font-size="7.2" dx="1.9" dy="-3.2">°</tspan></text>
<text x="903.90" y="330.00" text-anchor="middle" font-family="Liberation Serif, serif" letter-spacing="0.3" font-size="12" fill="#8f8f8f">+0<tspan font-size="7.2" dx="1.9" dy="-3.2">°</tspan></text>
<text x="1001.53" y="330.00" text-anchor="middle" font-family="Liberation Serif, serif" letter-spacing="0.3" font-size="12" fill="#8f8f8f">+330<tspan font-size="7.2" dx="1.9" dy="-3.2">°</tspan></text>
<text x="1099.15" y="330.00" text-anchor="middle" font-family="Liberation Serif, serif" letter-spacing="0.3" font-size="12" fill="#8f8f8f">+300<tspan font-size="7.2" dx="1.9" dy="-3.2">°</tspan></text>
<text x="1196.78" y="330.00" text-anchor="middle" font-family="Liberation Serif, serif" letter-spacing="0.3" font-size="12" fill="#8f8f8f">+270<tspan font-size="7.2" dx="1.9" dy="-3.2">°</tspan></text>
<text x="1294.40" y="330.00" text-anchor="middle" font-family="Liberation Serif, serif" letter-spacing="0.3" font-size="12" fill="#8f8f8f">+240<tspan font-size="7.2" dx="1.9" dy="-3.2">°</tspan></text>
<text x="1392.03" y="330.00" text-anchor="middle" font-family="Liberation Serif, serif" letter-spacing="0.3" font-size="12" fill="#8f8f8f">+210<tspan font-size="7.2" dx="1.9" dy="-3.2">°</tspan></text>
<text x="1489.66" y="330.00" text-anchor="middle" font-family="Liberation Serif, serif" letter-spacing="0.3" font-size="12" fill="#8f8f8f">+180<tspan font-size="7.2" dx="1.9" dy="-3.2">°</tspan></text>
<text x="903.90" y="24.70" text-anchor="middle" font-family="Liberation Serif, serif" letter-spacing="0.3" font-size="12" fill="#8f8f8f">+90<tspan font-size="7.2" dx="1.9" dy="-3.2">°</tspan></text>
<text x="903.90" y="123.00" text-anchor="middle" font-family="Liberation Serif, serif" letter-spacing="0.3" font-size="12" fill="#8f8f8f">+60<tspan font-size="7.2" dx="1.9" dy="-3.2">°</tspan></text>
<text x="903.90" y="220.60" text-anchor="middle" font-family="Liberation Serif, serif" letter-spacing="0.3" font-size="12" fill="#8f8f8f">+30<tspan font-size="7.2" dx="1.9" dy="-3.2">°</tspan></text>
<text x="903.90" y="428.00" text-anchor="middle" font-family="Liberation Serif, serif" letter-spacing="0.3" font-size="12" fill="#8f8f8f">−30<tspan font-size="7.2" dx="1.9" dy="-3.2">°</tspan></text>
<text x="903.90" y="525.50" text-anchor="middle" font-family="Liberation Serif, serif" letter-spacing="0.3" font-size="12" fill="#8f8f8f">−60<tspan font-size="7.2" dx="1.9" dy="-3.2">°</tspan></text>
<text x="903.90" y="623.90" text-anchor="middle" font-family="Liberation Serif, serif" letter-spacing="0.3" font-size="12" fill="#8f8f8f">−90<tspan font-size="7.2" dx="1.9" dy="-3.2">°</tspan></text>
<g font-family="Liberation Mono, monospace" font-size="13.93" fill="#fff">
<text x="315.5" y="29.9" xml:space="preserve">AU000R</text>
<text x="315.5" y="42.7" xml:space="preserve">Beg: 20250906 18:14:06 (sol = 164.05°)</text>
<text x="315.5" y="56.6" xml:space="preserve">End: 20250906 18:14:06 (sol = 164.05°)</text>
<text x="315.5" y="69.2" xml:space="preserve">--------------------------------------</text>
<text x="315.5" y="81.7" xml:space="preserve">...: 1</text>
</g>
<g font-family="Liberation Sans, sans-serif" font-size="30" fill="#5f5f5f" style="font-kerning:none">
<text transform="translate(149.1,697.44) rotate(-90) scale(0.8926,1)" x="0.63 21.23 40.58" y="0">APR</text>
<text transform="translate(293.9,702.43) rotate(-90) scale(0.9220,1)" x="0.51 26.29 43.46" y="0">MAY</text>
<text transform="translate(435.8,689.42) rotate(-90) scale(0.8453,1)" x="-4.24 10.89 35.20" y="0">JUN</text>
<text transform="translate(576.1,684.91) rotate(-90) scale(0.8248,1)" x="-4.18 11.43 36.46" y="0">JUL</text>
<text transform="translate(723.0,702.10) rotate(-90) scale(0.9362,1)" x="0.14 20.32 41.83" y="0">AUG</text>
<text transform="translate(872.0,695.51) rotate(-90) scale(0.8652,1)" x="0.36 20.48 40.93" y="0">SEP</text>
<text transform="translate(1015.8,701.64) rotate(-90) scale(0.9196,1)" x="0.23 23.33 44.94" y="0">OCT</text>
<text transform="translate(1168.8,705.53) rotate(-90) scale(0.9483,1)" x="0.12 21.78 44.46" y="0">NOV</text>
<text transform="translate(1318.0,701.93) rotate(-90) scale(0.9211,1)" x="0.86 22.68 41.82" y="0">DEC</text>
<text transform="translate(1468.9,687.46) rotate(-90) scale(0.8465,1)" x="-4.24 10.31 32.98" y="0">JAN</text>
<text transform="translate(1628.6,697.17) rotate(-90) scale(0.9014,1)" x="-0.31 17.40 37.75" y="0">FEB</text>
<text transform="translate(1766.1,706.40) rotate(-90) scale(0.9341,1)" x="0.34 25.82 46.00" y="0">MAR</text>
</g>
<g stroke-width="4.1" fill="none">
<path d="M105.9,834.00 H129.1" stroke="#bddf26"/>
<path d="M165.0,834.00 H344.8" stroke="#bddf26"/>
<path d="M365.9,834.00 H624.9" stroke="#bddf26"/>
<path d="M634.9,834.00 H785.9" stroke="#bddf26"/>
<path d="M807.2,834.00 H899.0" stroke="#bddf26"/>
<path d="M919.9,834.00 H973.0" stroke="#bddf26"/>
<path d="M984.2,834.00 H1066.0" stroke="#bddf26"/>
<path d="M1081.9,834.00 H1202.8" stroke="#bddf26"/>
<path d="M1244.1,834.00 H1325.7" stroke="#bddf26"/>
<path d="M1337.0,834.00 H1354.6" stroke="#bddf26"/>
<path d="M1381.0,834.00 H1443.9" stroke="#bddf26"/>
<path d="M1459.1,834.00 H1511.8" stroke="#bddf26"/>
<path d="M1523.0,834.00 H1547.2" stroke="#bddf26"/>
<path d="M1723.8,834.00 H1748.1" stroke="#bddf26"/>
<path d="M1757.9,834.00 H1782.0" stroke="#bddf26"/>
<path d="M165.0,817.80 H188.1" stroke="#81d34d"/>
<path d="M223.1,817.80 H286.0" stroke="#81d34d"/>
<path d="M312.0,817.80 H340.0" stroke="#81d34d"/>
<path d="M365.9,817.80 H491.8" stroke="#81d34d"/>
<path d="M507.9,817.80 H654.0" stroke="#81d34d"/>
<path d="M704.0,817.80 H737.0" stroke="#81d34d"/>
<path d="M773.2,817.80 H844.9" stroke="#81d34d"/>
<path d="M871.1,817.80 H988.1" stroke="#81d34d"/>
<path d="M1002.8,817.80 H1017.0" stroke="#81d34d"/>
<path d="M1062.0,817.80 H1213.1" stroke="#81d34d"/>
<path d="M1244.1,817.80 H1266.7" stroke="#81d34d"/>
<path d="M1293.1,817.80 H1315.7" stroke="#81d34d"/>
<path d="M1341.9,817.80 H1364.9" stroke="#81d34d"/>
<path d="M1385.9,817.80 H1428.8" stroke="#81d34d"/>
<path d="M1459.1,817.80 H1482.9" stroke="#81d34d"/>
<path d="M1547.7,817.80 H1570.8" stroke="#81d34d"/>
<path d="M165.0,802.00 H188.1" stroke="#4ec36b"/>
<path d="M257.9,802.00 H486.8" stroke="#4ec36b"/>
<path d="M507.9,802.00 H615.1" stroke="#4ec36b"/>
<path d="M625.9,802.00 H718.1" stroke="#4ec36b"/>
<path d="M729.1,802.00 H825.9" stroke="#4ec36b"/>
<path d="M949.2,802.00 H1148.8" stroke="#4ec36b"/>
<path d="M1160.0,802.00 H1247.9" stroke="#4ec36b"/>
<path d="M1257.9,802.00 H1443.9" stroke="#4ec36b"/>
<path d="M1459.1,802.00 H1482.9" stroke="#4ec36b"/>
<path d="M1552.1,802.00 H1575.7" stroke="#4ec36b"/>
<path d="M193.9,785.00 H218.1" stroke="#2ab07f"/>
<path d="M320.8,785.00 H506.9" stroke="#2ab07f"/>
<path d="M517.9,785.00 H540.9" stroke="#2ab07f"/>
<path d="M557.0,785.00 H682.9" stroke="#2ab07f"/>
<path d="M807.2,785.00 H830.8" stroke="#2ab07f"/>
<path d="M954.1,785.00 H973.0" stroke="#2ab07f"/>
<path d="M988.1,785.00 H1125.0" stroke="#2ab07f"/>
<path d="M1155.0,785.00 H1218.0" stroke="#2ab07f"/>
<path d="M1244.1,785.00 H1266.7" stroke="#2ab07f"/>
<path d="M1316.9,785.00 H1340.9" stroke="#2ab07f"/>
<path d="M1396.1,785.00 H1418.9" stroke="#2ab07f"/>
<path d="M1464.0,785.00 H1650.0" stroke="#2ab07f"/>
<path d="M341.1,768.90 H369.8" stroke="#1e9b8a"/>
<path d="M410.1,768.90 H447.9" stroke="#1e9b8a"/>
<path d="M469.1,768.90 H491.8" stroke="#1e9b8a"/>
<path d="M527.2,768.90 H545.8" stroke="#1e9b8a"/>
<path d="M562.2,768.90 H589.7" stroke="#1e9b8a"/>
<path d="M616.0,768.90 H649.1" stroke="#1e9b8a"/>
<path d="M959.2,768.90 H988.1" stroke="#1e9b8a"/>
<path d="M1062.0,768.90 H1085.8" stroke="#1e9b8a"/>
<path d="M1101.0,768.90 H1125.0" stroke="#1e9b8a"/>
<path d="M1160.0,768.90 H1193.8" stroke="#1e9b8a"/>
<path d="M1248.1,768.90 H1271.7" stroke="#1e9b8a"/>
<path d="M1425.2,768.90 H1511.8" stroke="#1e9b8a"/>
<path d="M420.0,752.00 H442.8" stroke="#25858e"/>
<path d="M532.1,752.00 H555.9" stroke="#25858e"/>
<path d="M567.1,752.00 H589.7" stroke="#25858e"/>
<path d="M621.2,752.00 H741.9" stroke="#25858e"/>
<path d="M969.0,752.00 H1135.0" stroke="#25858e"/>
<path d="M1184.9,752.00 H1345.8" stroke="#25858e"/>
<path d="M1469.1,752.00 H1493.1" stroke="#25858e"/>
<path d="M428.8,736.00 H453.0" stroke="#2d708e"/>
<path d="M575.9,736.00 H733.0" stroke="#2d708e"/>
<path d="M993.0,736.00 H1104.9" stroke="#2d708e"/>
<path d="M1116.1,736.00 H1222.9" stroke="#2d708e"/>
<path d="M1263.2,736.00 H1291.7" stroke="#2d708e"/>
<path d="M1489.1,736.00 H1511.8" stroke="#2d708e"/>
<path d="M591.1,719.80 H615.1" stroke="#375a8c"/>
<path d="M655.0,719.80 H772.0" stroke="#375a8c"/>
<path d="M1072.1,719.80 H1243.0" stroke="#375a8c"/>
<path d="M1263.2,719.80 H1286.8" stroke="#375a8c"/>
<path d="M596.0,703.00 H733.0" stroke="#424086"/>
<path d="M1090.7,703.00 H1119.8" stroke="#424086"/>
<path d="M1198.9,703.00 H1222.9" stroke="#424086"/>
<path d="M1273.0,703.00 H1325.7" stroke="#424086"/>
<path d="M1111.2,686.90 H1135.0" stroke="#482475"/>
</g>
<g stroke="#808080" stroke-width="1.5" stroke-dasharray="2.08 3.44">
<path d="M73.9,842.5 V641.5"/>
<path d="M218.0,842.5 V641.5"/>
<path d="M364.9,842.5 V641.5"/>
<path d="M504.9,842.5 V641.5"/>
<path d="M650.1,842.5 V641.5"/>
<path d="M796.9,842.5 V641.5"/>
<path d="M939.9,842.5 V641.5"/>
<path d="M1091.1,842.5 V641.5"/>
<path d="M1239.0,842.5 V641.5"/>
<path d="M1393.9,842.5 V641.5"/>
<path d="M1548.1,842.5 V641.5"/>
<path d="M1686.9,842.5 V641.5"/>
</g>
<path d="M824.4,842.5 V641.5" stroke="#ff0000" stroke-width="1.6" stroke-dasharray="5.14 2.22"/>
<g stroke="#fff" stroke-width="2.0">
<path d="M113.10,834.00 H120.70 M116.90,830.20 V837.80"/>
<path d="M241.10,834.00 H248.70 M244.90,830.20 V837.80"/>
<path d="M511.00,834.00 H518.60 M514.80,830.20 V837.80"/>
<path d="M706.90,834.00 H714.50 M710.70,830.20 V837.80"/>
<path d="M832.90,834.00 H840.50 M836.70,830.20 V837.80"/>
<path d="M962.10,834.00 H969.70 M965.90,830.20 V837.80"/>
<path d="M985.90,834.00 H993.50 M989.70,830.20 V837.80"/>
<path d="M1115.80,834.00 H1123.40 M1119.60,830.20 V837.80"/>
<path d="M1295.20,834.00 H1302.80 M1299.00,830.20 V837.80"/>
<path d="M1342.00,834.00 H1349.60 M1345.80,830.20 V837.80"/>
<path d="M1413.00,834.00 H1420.60 M1416.80,830.20 V837.80"/>
<path d="M1482.00,834.00 H1489.60 M1485.80,830.20 V837.80"/>
<path d="M1531.00,834.00 H1538.60 M1534.80,830.20 V837.80"/>
<path d="M1732.20,834.00 H1739.80 M1736.00,830.20 V837.80"/>
<path d="M1766.20,834.00 H1773.80 M1770.00,830.20 V837.80"/>
<path d="M172.00,817.80 H179.60 M175.80,814.00 V821.60"/>
<path d="M256.10,817.80 H263.70 M259.90,814.00 V821.60"/>
<path d="M322.90,817.80 H330.50 M326.70,814.00 V821.60"/>
<path d="M436.80,817.80 H444.40 M440.60,814.00 V821.60"/>
<path d="M599.10,817.80 H606.70 M602.90,814.00 V821.60"/>
<path d="M716.80,817.80 H724.40 M720.60,814.00 V821.60"/>
<path d="M793.00,817.80 H800.60 M796.80,814.00 V821.60"/>
<path d="M939.10,817.80 H946.70 M942.90,814.00 V821.60"/>
<path d="M1005.90,817.80 H1013.50 M1009.70,814.00 V821.60"/>
<path d="M1153.20,817.80 H1160.80 M1157.00,814.00 V821.60"/>
<path d="M1250.90,817.80 H1258.50 M1254.70,814.00 V821.60"/>
<path d="M1300.10,817.80 H1307.70 M1303.90,814.00 V821.60"/>
<path d="M1348.90,817.80 H1356.50 M1352.70,814.00 V821.60"/>
<path d="M1403.10,817.80 H1410.70 M1406.90,814.00 V821.60"/>
<path d="M1467.10,817.80 H1474.70 M1470.90,814.00 V821.60"/>
<path d="M1554.80,817.80 H1562.40 M1558.60,814.00 V821.60"/>
<path d="M174.00,802.00 H181.60 M177.80,798.20 V805.80"/>
<path d="M377.80,802.00 H385.40 M381.60,798.20 V805.80"/>
<path d="M545.00,802.00 H552.60 M548.80,798.20 V805.80"/>
<path d="M682.10,802.00 H689.70 M685.90,798.20 V805.80"/>
<path d="M741.00,802.00 H748.60 M744.80,798.20 V805.80"/>
<path d="M1074.90,802.00 H1082.50 M1078.70,798.20 V805.80"/>
<path d="M1216.70,802.00 H1224.30 M1220.50,798.20 V805.80"/>
<path d="M1304.60,802.00 H1312.20 M1308.40,798.20 V805.80"/>
<path d="M1467.10,802.00 H1474.70 M1470.90,798.20 V805.80"/>
<path d="M1559.70,802.00 H1567.30 M1563.50,798.20 V805.80"/>
<path d="M202.00,785.00 H209.60 M205.80,781.20 V788.80"/>
<path d="M399.90,785.00 H407.50 M403.70,781.20 V788.80"/>
<path d="M524.70,785.00 H532.30 M528.50,781.20 V788.80"/>
<path d="M638.80,785.00 H646.40 M642.60,781.20 V788.80"/>
<path d="M815.20,785.00 H822.80 M819.00,781.20 V788.80"/>
<path d="M959.10,785.00 H966.70 M962.90,781.20 V788.80"/>
<path d="M1039.80,785.00 H1047.40 M1043.60,781.20 V788.80"/>
<path d="M1188.00,785.00 H1195.60 M1191.80,781.20 V788.80"/>
<path d="M1250.90,785.00 H1258.50 M1254.70,781.20 V788.80"/>
<path d="M1324.70,785.00 H1332.30 M1328.50,781.20 V788.80"/>
<path d="M1403.10,785.00 H1410.70 M1406.90,781.20 V788.80"/>
<path d="M1545.70,785.00 H1553.30 M1549.50,781.20 V788.80"/>
<path d="M355.80,768.90 H363.40 M359.60,765.10 V772.70"/>
<path d="M426.00,768.90 H433.60 M429.80,765.10 V772.70"/>
<path d="M476.20,768.90 H483.80 M480.00,765.10 V772.70"/>
<path d="M534.80,768.90 H542.40 M538.60,765.10 V772.70"/>
<path d="M570.90,768.90 H578.50 M574.70,765.10 V772.70"/>
<path d="M630.90,768.90 H638.50 M634.70,765.10 V772.70"/>
<path d="M973.90,768.90 H981.50 M977.70,765.10 V772.70"/>
<path d="M1069.60,768.90 H1077.20 M1073.40,765.10 V772.70"/>
<path d="M1109.00,768.90 H1116.60 M1112.80,765.10 V772.70"/>
<path d="M1177.80,768.90 H1185.40 M1181.60,765.10 V772.70"/>
<path d="M1256.10,768.90 H1263.70 M1259.90,765.10 V772.70"/>
<path d="M1467.10,768.90 H1474.70 M1470.90,765.10 V772.70"/>
<path d="M427.00,752.00 H434.60 M430.80,748.20 V755.80"/>
<path d="M540.10,752.00 H547.70 M543.90,748.20 V755.80"/>
<path d="M573.90,752.00 H581.50 M577.70,748.20 V755.80"/>
<path d="M704.00,752.00 H711.60 M707.80,748.20 V755.80"/>
<path d="M1093.80,752.00 H1101.40 M1097.60,748.20 V755.80"/>
<path d="M1270.80,752.00 H1278.40 M1274.60,748.20 V755.80"/>
<path d="M1476.90,752.00 H1484.50 M1480.70,748.20 V755.80"/>
<path d="M436.80,736.00 H444.40 M440.60,732.20 V739.80"/>
<path d="M630.90,736.00 H638.50 M634.70,732.20 V739.80"/>
<path d="M1039.20,736.00 H1046.80 M1043.00,732.20 V739.80"/>
<path d="M1168.00,736.00 H1175.60 M1171.80,732.20 V739.80"/>
<path d="M1274.70,736.00 H1282.30 M1278.50,732.20 V739.80"/>
<path d="M1497.10,736.00 H1504.70 M1500.90,732.20 V739.80"/>
<path d="M599.10,719.80 H606.70 M602.90,716.00 V723.60"/>
<path d="M727.10,719.80 H734.70 M730.90,716.00 V723.60"/>
<path d="M1188.00,719.80 H1195.60 M1191.80,716.00 V723.60"/>
<path d="M1270.80,719.80 H1278.40 M1274.60,716.00 V723.60"/>
<path d="M687.20,703.00 H694.80 M691.00,699.20 V706.80"/>
<path d="M1102.10,703.00 H1109.70 M1105.90,699.20 V706.80"/>
<path d="M1206.90,703.00 H1214.50 M1210.70,699.20 V706.80"/>
<path d="M1299.70,703.00 H1307.30 M1303.50,699.20 V706.80"/>
<path d="M1118.80,686.90 H1126.40 M1122.60,683.10 V690.70"/>
</g>
<g font-family="Liberation Sans, sans-serif" font-size="10.9" fill="#fff" style="font-kerning:none">
<text x="106.52 113.47 120.42" y="831.30">KSE</text>
<text x="243.38 250.62 256.63" y="831.30">ETA</text>
<text x="482.63 491.20 498.22" y="831.30">NZC</text>
<text x="698.38 706.85 715.00" y="831.30">NDA</text>
<text x="842.55 849.57 856.21" y="831.30">SPE</text>
<text x="933.71 941.26 949.24" y="831.30">ARD</text>
<text x="1013.24 1020.46 1028.87" y="831.30">EGE</text>
<text x="1131.30 1139.46 1145.48" y="831.30">NTA</text>
<text x="1271.24 1280.70 1289.53" y="831.30">MON</text>
<text x="1332.00 1340.12 1347.68" y="831.30">URS</text>
<text x="1400.74 1408.41 1416.29" y="831.30">AHY</text>
<text x="1472.72 1481.41 1489.66" y="831.30">GUM</text>
<text x="1523.07 1531.92 1539.79" y="831.30">OHY</text>
<text x="1724.85 1732.55 1740.51" y="831.30">XHE</text>
<text x="1760.40 1767.73 1775.30" y="831.30">EVI</text>
<text x="164.86 171.75 179.35" y="814.70">AVB</text>
<text x="244.94 252.42 256.58" y="814.70">ELY</text>
<text x="311.44 319.48 327.17" y="814.70">CAM</text>
<text x="420.48 427.54 434.69" y="814.70">SSG</text>
<text x="567.08 573.76 581.79" y="814.70">PCA</text>
<text x="709.00 716.57 724.95" y="814.70">AUD</text>
<text x="797.05 804.62 812.74" y="814.70">AUR</text>
<text x="919.29 927.42 934.68" y="814.70">DSX</text>
<text x="997.99 1006.48 1014.49" y="814.70">OCU</text>
<text x="1125.54 1134.00 1141.29" y="814.70">OER</text>
<text x="1242.76 1251.22 1258.60" y="814.70">DKD</text>
<text x="1292.67 1300.80 1308.07" y="814.70">DSV</text>
<text x="1343.56 1351.31 1355.47" y="814.70">ALY</text>
<text x="1399.49 1402.96 1408.69" y="814.70">ILE</text>
<text x="1460.30 1467.29 1475.05" y="814.70">SCC</text>
<text x="1547.86 1554.24 1561.57" y="814.70">FEV</text>
<text x="166.42 170.58 177.72" y="798.60">LYR</text>
<text x="361.28 366.41 375.63" y="798.60">JMC</text>
<text x="549.34 554.13 560.77" y="798.60">JPE</text>
<text x="660.29 666.53 674.10" y="798.60">PAU</text>
<text x="764.22 772.44 775.76" y="798.60">NIA</text>
<text x="1039.24 1046.41 1052.43" y="798.60">STA</text>
<text x="1192.58 1200.81 1209.56" y="798.60">NOO</text>
<text x="1340.37 1348.38 1357.24" y="798.60">COM</text>
<text x="1458.46 1466.44 1474.20" y="798.60">NCC</text>
<text x="1552.06 1558.44 1565.98" y="798.60">FED</text>
<text x="195.52 203.80 211.36" y="782.50">HVI</text>
<text x="403.37 410.92 418.65" y="782.50">ARI</text>
<text x="518.58 526.15 533.17" y="782.50">SZC</text>
<text x="606.23 614.27 621.62" y="782.50">CAP</text>
<text x="806.60 814.82 822.67" y="782.50">NUE</text>
<text x="949.46 957.96 965.90" y="782.50">OCT</text>
<text x="1049.80 1058.52 1066.25" y="782.50">ORI</text>
<text x="1173.87 1181.56 1191.02" y="782.50">AMO</text>
<text x="1243.62 1251.72 1258.39" y="782.50">DPC</text>
<text x="1320.39 1328.01 1335.57" y="782.50">XVI</text>
<text x="1395.03 1403.77 1411.93" y="782.50">QUA</text>
<text x="1547.75 1555.66 1563.32" y="782.50">AAN</text>
<text x="342.59 348.61 356.29" y="765.70">TAH</text>
<text x="421.39 426.11 433.44" y="765.70">JEA</text>
<text x="472.55 477.55 480.61" y="765.70">JIP</text>
<text x="528.05 534.75 541.49" y="765.70">PPS</text>
<text x="568.02 575.04 582.87" y="765.70">ZCS</text>
<text x="620.16 629.09 637.39" y="765.70">GDR</text>
<text x="958.46 966.76 974.08" y="765.70">DRA</text>
<text x="1061.83 1067.29 1075.54" y="765.70">LUM</text>
<text x="1101.88 1109.39 1116.31" y="765.70">RPU</text>
<text x="1164.86 1171.82 1180.09" y="765.70">THA</text>
<text x="1248.41 1255.15 1262.38" y="765.70">PSU</text>
<text x="1460.19 1466.72 1474.77" y="765.70">XCB</text>
<text x="421.69 426.68 433.62" y="749.40">JRC</text>
<text x="532.68 540.72 548.37" y="749.40">CAN</text>
<text x="567.52 573.19 580.85" y="749.40">FAN</text>
<text x="670.11 676.75 684.03" y="749.40">PER</text>
<text x="1038.08 1046.02 1052.04" y="749.40">CTA</text>
<text x="1252.67 1260.55 1267.95" y="749.40">HYD</text>
<text x="1469.07 1476.65 1484.91" y="749.40">XUM</text>
<text x="429.22 437.23 445.95" y="732.60">COR</text>
<text x="645.12 652.60 660.75" y="732.60">SDA</text>
<text x="1039.79 1045.92 1055.37" y="732.60">LMI</text>
<text x="1155.70 1161.43 1168.73" y="732.60">LEO</text>
<text x="1262.72 1270.12 1278.00" y="732.60">EHY</text>
<text x="1487.86 1494.92 1502.95" y="732.60">ECV</text>
<text x="592.09 597.12 604.74" y="716.70">JXA</text>
<text x="703.77 710.05 717.98" y="716.70">KCG</text>
<text x="1144.71 1152.37 1160.84" y="716.70">AND</text>
<text x="1262.60 1270.75 1278.56" y="716.70">DAD</text>
<text x="657.34 664.63 672.36" y="700.20">ERI</text>
<text x="1097.71 1105.13 1111.38" y="700.20">SLD</text>
<text x="1199.77 1208.50 1216.05" y="700.20">ORS</text>
<text x="1286.68 1295.08 1302.51" y="700.20">GEM</text>
<text x="1110.73 1117.56 1125.82" y="683.60">KUM</text>
</g>
<rect x="19.5" y="641.5" width="1766.0" height="201.0" fill="none" stroke="#fff" stroke-width="1.11"/>
<g stroke="#fff" stroke-width="1.11">
<path d="M19.50,842.5 V847.70"/>
<path d="M265.50,842.5 V847.70"/>
<path d="M510.50,842.5 V847.70"/>
<path d="M755.50,842.5 V847.70"/>
<path d="M1000.50,842.5 V847.70"/>
<path d="M1246.50,842.5 V847.70"/>
<path d="M1491.50,842.5 V847.70"/>
<path d="M1736.50,842.5 V847.70"/>
</g>
<g font-family="Liberation Sans, sans-serif" font-size="14.1" fill="#fff" style="font-kerning:none">
<text x="15.58" y="862.0">0</text>
<text x="257.03 265.92" y="862.0">50</text>
<text x="497.37 506.27 515.11" y="862.0">100</text>
<text x="742.37 751.22 760.11" y="862.0">150</text>
<text x="987.51 996.53 1005.37" y="862.0">200</text>
<text x="1233.51 1242.47 1251.37" y="862.0">250</text>
<text x="1478.69 1487.51 1496.35" y="862.0">300</text>
<text x="1723.69 1732.45 1741.35" y="862.0">350</text>
<text x="828.97 838.34 846.87 850.19 859.67 864.59 869.37 873.19 881.87 890.56 899.35 903.57 908.74 917.49 926.29 934.45 938.87 944.69 953.48 962.05 971.18" y="881.7">Solar longitude (deg)</text>
</g>
</svg></body></html>
